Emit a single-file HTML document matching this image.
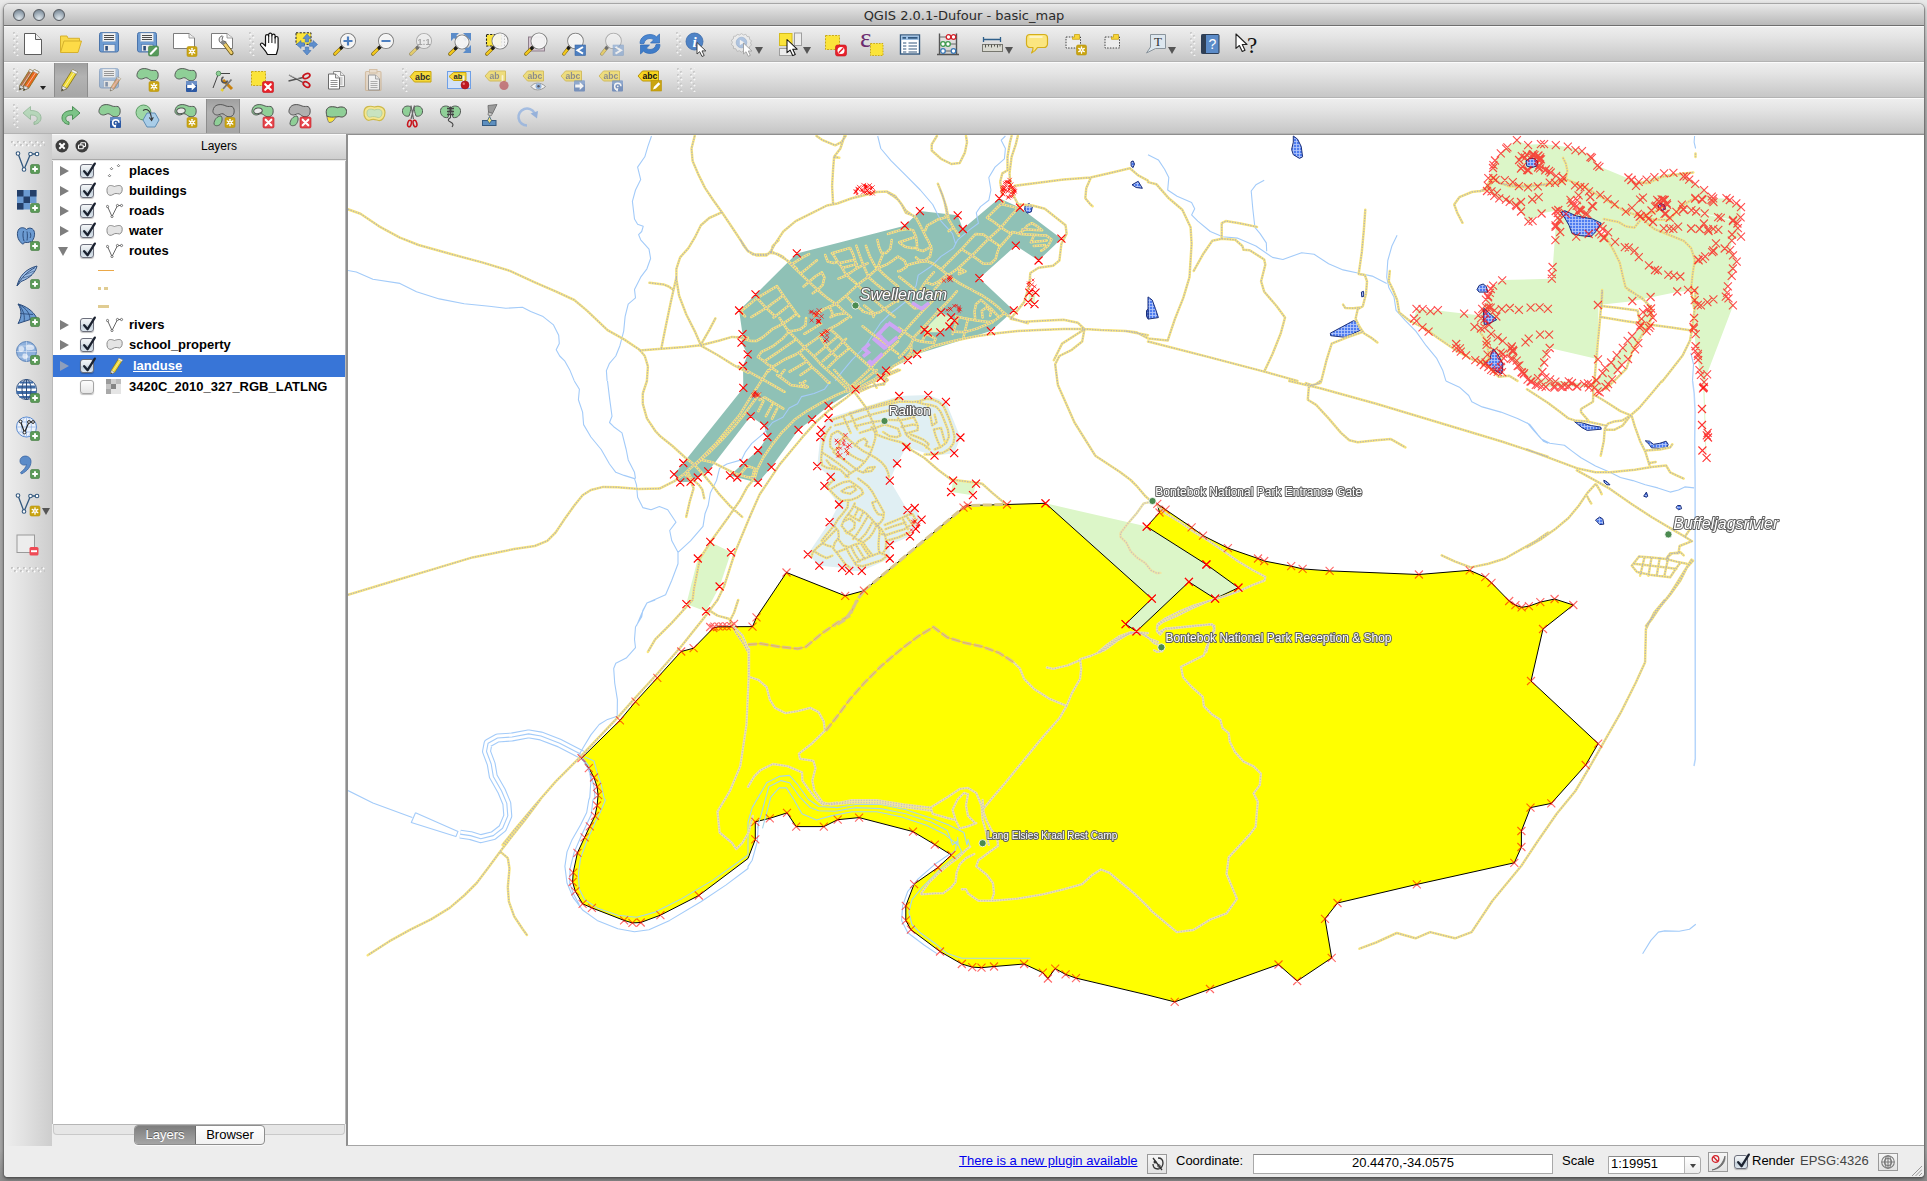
<!DOCTYPE html><html><head><meta charset="utf-8"><title>QGIS 2.0.1-Dufour - basic_map</title><style>
html,body{margin:0;padding:0}
body{width:1927px;height:1181px;overflow:hidden;position:relative;
 background:linear-gradient(#e9e9e9 0,#e2e2e2 14px,#bdbdbd 60px,#ababab 140px,#a9a9a9 1150px,#8c8c8c 1181px);
 font-family:"Liberation Sans",sans-serif;font-size:13px;color:#000}
#win{position:absolute;left:4px;top:4px;width:1920px;height:1173px;background:#ededed;
 border-radius:5px 5px 4px 4px;box-shadow:0 0 0 1px rgba(100,100,100,.38),0 1px 2px 0 rgba(30,30,30,.6),0 2px 4px 1px rgba(40,40,40,.35);overflow:hidden}
#title{position:absolute;left:0;top:0;width:1920px;height:21px;border-bottom:1px solid #6f6f6f;
 background:linear-gradient(#ebebeb 0,#e2e2e2 3px,#cfcfcf 11px,#b9b9b9 21px);text-align:center;
 font-family:"DejaVu Sans","Liberation Sans",sans-serif;font-size:13px;line-height:23px;color:#2b2b2b}
.tl{position:absolute;top:5px;width:12px;height:12px;border-radius:50%;box-sizing:border-box;border:1px solid #55595f;
 background:radial-gradient(circle at 50% 85%,#dfe6ec 0,#b8c3cc 35%,#8796a3 75%,#6f7c88 100%)}
.tbrow{position:absolute;left:0;width:1920px;height:36px;box-sizing:border-box;border-top:1px solid #fbfbfb;border-bottom:1px solid #b3b3b3;
 background:linear-gradient(#eeeeee 0,#e4e4e4 30%,#d3d3d3 70%,#c6c6c6 100%)}
.grip{position:absolute;width:6px;height:24px;top:5px;
 background-image:radial-gradient(circle at 1.5px 1.5px,#fff 0,#fff .6px,rgba(255,255,255,0) 1.3px),radial-gradient(circle at 1.5px 1.5px,#fff 0,#fff .6px,rgba(255,255,255,0) 1.3px),radial-gradient(circle at 1px 1px,#c6c6c6 0,#c6c6c6 .8px,rgba(198,198,198,0) 1.3px),radial-gradient(circle at 1px 1px,#c6c6c6 0,#c6c6c6 .8px,rgba(198,198,198,0) 1.3px);
 background-size:6px 6px;background-position:0 1px,3px 4px,0 0,3px 3px;opacity:.8}
.ic{position:absolute;width:24px;height:24px}
.ic svg{display:block;overflow:visible}
.pressed{position:absolute;top:0;height:34px;background:linear-gradient(#9f9f9f 0,#b3b3b3 40%,#a6a6a6 100%);box-shadow:inset 1px 0 0 #8d8d8d,inset -1px 0 0 #8d8d8d}
.dd{position:absolute;width:0;height:0;border-left:4px solid transparent;border-right:4px solid transparent;border-top:7px solid #555}
#ltb{position:absolute;left:0;top:130px;width:48px;height:1012px;background:linear-gradient(90deg,#eeeeee 0,#e2e2e2 40%,#cdcdcd 100%)}
.hgrip{position:absolute;left:7px;width:34px;height:6px;
 background-image:radial-gradient(circle at 1.5px 1.5px,#fff 0,#fff .6px,rgba(255,255,255,0) 1.3px),radial-gradient(circle at 1.5px 1.5px,#fff 0,#fff .6px,rgba(255,255,255,0) 1.3px),radial-gradient(circle at 1px 1px,#c4c4c4 0,#c4c4c4 .9px,rgba(188,188,188,0) 1.4px),radial-gradient(circle at 1px 1px,#c4c4c4 0,#c4c4c4 .9px,rgba(188,188,188,0) 1.4px);
 background-size:6px 6px;background-position:1px 0,4px 3px,0 0,3px 3px}
#lp{position:absolute;left:48px;top:130px;width:294px;height:1012px;background:#ededed}
#lph{position:absolute;left:0;top:0;width:294px;height:26px;box-sizing:border-box;border-top:1px solid #fafafa;border-bottom:1px solid #a9a9a9;
 background:linear-gradient(#eeeeee 0,#dedede 50%,#cecece 100%);text-align:center;line-height:23px;font-size:12px;padding-left:40px}
#tree{position:absolute;left:0px;top:27px;width:294px;height:963px;background:#fff;border-left:1px solid #b9b9b9;border-right:1px solid #b9b9b9;box-sizing:border-box}
.row{position:absolute;left:0;width:292px;height:20px;line-height:20px;font-weight:bold;font-size:13px;white-space:nowrap}
.row .t{position:absolute;left:76px;top:0}
.arr{position:absolute;left:7px;top:5px;width:0;height:0;border-top:5px solid transparent;border-bottom:5px solid transparent;border-left:9px solid #7e7e7e}
.arrd{position:absolute;left:5px;top:6px;width:0;height:0;border-left:5px solid transparent;border-right:5px solid transparent;border-top:9px solid #7e7e7e}
.cb{position:absolute;left:27px;top:3px;width:14px;height:14px;box-sizing:border-box;border:1px solid #6c6f7c;border-radius:3px;
 background:linear-gradient(#f4f6f8 0,#dfe5ea 45%,#c3cfd9 55%,#dde6ee 100%);box-shadow:0 1px 1px rgba(0,0,0,.25)}
.cb.off{background:linear-gradient(#fdfdfd 0,#f1f1f1 50%,#e6e6e6 100%);border-color:#a4a4a4}
.cb svg{position:absolute;left:0px;top:-4px;overflow:visible}
.li{position:absolute;left:53px;top:2px;width:18px;height:16px}
#tabs{position:absolute;left:0;top:990px;width:294px;height:27px}
#tabline{position:absolute;left:1px;top:0;width:292px;height:11px;border:1px solid #c9c9c9;border-top:1px solid #b5b5b5;border-radius:0 0 4px 4px;box-sizing:border-box;background:#e6e6e6}
#tabbox{position:absolute;left:82px;top:1px;width:131px;height:20px;box-sizing:border-box;border:1px solid #8e8e8e;border-radius:4px;background:linear-gradient(#ffffff,#f1f1f1);overflow:hidden;font-size:13px;line-height:18px;box-shadow:0 1px 0 rgba(255,255,255,.7)}
#tabbox .a{position:absolute;left:0;top:0;width:60px;height:18px;background:linear-gradient(#7d7d7d 0,#969696 60%,#a5a5a5 100%);color:#fff;text-align:center;border-right:1px solid #6d6d6d;text-shadow:0 -1px 0 rgba(0,0,0,.35)}
#tabbox .b{position:absolute;left:61px;top:0;width:68px;height:18px;text-align:center;color:#000}
#mapwrap{position:absolute;left:342px;top:130px;width:1578px;height:1012px;background:#fff;border-left:2px solid #8f8f8f;border-top:1px solid #8f8f8f;border-bottom:1px solid #a5a5a5;box-sizing:border-box;overflow:hidden}
#mapwrap svg{position:absolute;left:-348px;top:-135px}
#status{position:absolute;left:0;top:1142px;width:1920px;height:31px;background:#ededed;font-size:13px}
#status .s{position:absolute;top:0;line-height:30px;white-space:nowrap}
.fld{position:absolute;box-sizing:border-box;background:#fff;border:1px solid #a9a9a9;border-top-color:#8a8a8a;text-align:center;line-height:17px;font-size:13px}
.sbtn{position:absolute;box-sizing:border-box;border:1px solid #9a9a9a;background:linear-gradient(#f6f6f6,#e2e2e2)}
</style></head><body>
<div id="win">
<div id="title">QGIS 2.0.1-Dufour - basic_map<div class="tl" style="left:9px"></div><div class="tl" style="left:29px"></div><div class="tl" style="left:49px"></div></div>
<div class="tbrow" style="top:22px">
<div class="grip" style="left:9px"></div>
<div class="grip" style="left:245px"></div>
<div class="grip" style="left:672px"></div>
<div class="grip" style="left:1186px"></div>
<div class="ic" style="left:17px;top:5px;width:24px;height:24px"><svg width="24" height="24" viewBox="0 0 24 24"><path d="M3.500 1.500H14.500L20.500 7.500V22.500H3.500Z" fill="#fff" stroke="#5d5d5d" stroke-width="1" stroke-linejoin="round"/><path d="M14.500 1.500V7.500H20.500" fill="#ededed" stroke="#5d5d5d" stroke-width="1" stroke-linejoin="round"/></svg></div>
<div class="ic" style="left:54px;top:5px;width:24px;height:24px"><svg width="24" height="24" viewBox="0 0 24 24"><path d="M2.500 20V4h6.500l1 2.300h11.500v3" fill="#f9d94a" stroke="#d6b12d" stroke-width="1" stroke-linejoin="round"/><path d="M2.500 20.500L6 9h17.500L20 20.500Z" fill="#fddb47" stroke="#d6b12d" stroke-width="1" stroke-linejoin="round"/></svg></div>
<div class="ic" style="left:93px;top:5px;width:24px;height:24px"><svg width="24" height="24" viewBox="0 0 24 24"><g transform="translate(0 -2)"><rect x="2.500" y="2.500" width="19" height="19.500" rx="2" fill="#6d9bd1" stroke="#4a74ab" stroke-width="1"/><rect x="5.500" y="3" width="13" height="8.500" fill="#f2f2f2" stroke="#9fb3cc" stroke-width=".5"/><path d="M7 5.500h10M7 7.500h10M7 9.500h10" stroke="#4c4c4c" stroke-width="1"/><rect x="6.500" y="14.500" width="11.500" height="7" fill="#ececec" stroke="#4a74ab" stroke-width=".6"/><rect x="8.300" y="16" width="2.600" height="4.500" fill="#2d4d7c"/></g></svg></div>
<div class="ic" style="left:131px;top:5px;width:24px;height:24px"><svg width="24" height="24" viewBox="0 0 24 24"><g transform="translate(0 -2)"><rect x="2.500" y="2.500" width="19" height="19.500" rx="2" fill="#6d9bd1" stroke="#4a74ab" stroke-width="1"/><rect x="5.500" y="3" width="13" height="8.500" fill="#f2f2f2" stroke="#9fb3cc" stroke-width=".5"/><path d="M7 5.500h10M7 7.500h10M7 9.500h10" stroke="#4c4c4c" stroke-width="1"/><rect x="6.500" y="14.500" width="11.500" height="7" fill="#ececec" stroke="#4a74ab" stroke-width=".6"/><rect x="8.300" y="16" width="2.600" height="4.500" fill="#2d4d7c"/></g><rect x="13.500" y="14" width="10" height="10" rx="1.500" fill="#579a5b" stroke="#3f7f44" stroke-width=".6"/><path d="M15.800 21.700L21.200 16.300" stroke="#fff" stroke-width="2.200" stroke-linecap="round"/></svg></div>
<div class="ic" style="left:168px;top:5px;width:24px;height:24px"><svg width="24" height="24" viewBox="0 0 24 24"><path d="M1.500 1.500H17L22.500 6V16.500H1.500Z" fill="#fff" stroke="#7c7c7c" stroke-width="1" stroke-linejoin="round"/><path d="M17 1.500V6H22.500" fill="#eee" stroke="#8c8c8c" stroke-width=".8"/><rect x="15" y="14.5" width="10" height="10" rx="1.5" fill="#c9a411" stroke="#b8930a" stroke-width=".6"/><g stroke="#fff" stroke-width="1.3" stroke-linecap="round"><path d="M20.00 16.30L20.00 22.70"/><path d="M17.23 17.90L22.77 21.10"/><path d="M22.77 17.90L17.23 21.10"/></g><circle cx="20" cy="19.5" r="1.700" fill="#fff"/><circle cx="20" cy="19.5" r=".8" fill="#c9a411"/></svg></div>
<div class="ic" style="left:206px;top:5px;width:24px;height:24px"><svg width="24" height="24" viewBox="0 0 24 24"><path d="M1.500 1.500H17L22.500 6V16.500H1.500Z" fill="#fff" stroke="#7c7c7c" stroke-width="1" stroke-linejoin="round"/><path d="M17 1.500V6H22.500" fill="#eee" stroke="#8c8c8c" stroke-width=".8"/><path d="M14 11L21.500 21" stroke="#6b5a20" stroke-width="4.200" stroke-linecap="round"/><path d="M14.300 11.400L21.300 20.700" stroke="#f0cf6a" stroke-width="2.600" stroke-linecap="round"/><path d="M12.200 3.800a4 4 0 1 0 4 6.400l-2.400-.6l-1.700-2.300l.8-2.800z" fill="#f2f2f2" stroke="#5a5a5a" stroke-width=".9"/><path d="M11.500 9l2.800 3.200" stroke="#888" stroke-width="3"/></svg></div>
<div class="ic" style="left:254px;top:5px;width:24px;height:24px"><svg width="24" height="24" viewBox="0 0 24 24"><path d="M7.500 13V4.300a1.600 1.600 0 0 1 3.200 0V2.700a1.600 1.600 0 0 1 3.200 0V3.700a1.600 1.600 0 0 1 3.200 0V6a1.500 1.500 0 0 1 3 0V15c0 3-1.200 4.500-1.800 7.500H9.500C8 19 5 16.500 2.800 13.500c-1.200-1.800.8-3.200 2.200-1.900L7.500 14Z" fill="#fff" stroke="#111" stroke-width="1.200" stroke-linejoin="round"/><path d="M10.700 4.300V11M13.900 3.500V11M17.100 5V11.500" stroke="#111" stroke-width="1"/></svg></div>
<div class="ic" style="left:291px;top:5px;width:24px;height:24px"><svg width="24" height="24" viewBox="0 0 24 24"><rect x="1" y=".8" width="15" height="11.500" fill="#fbe43a" stroke="#222" stroke-width="1" stroke-dasharray="2.200 1.400"/><g fill="#5e8fcd" stroke="#3f6fb0" stroke-width=".6"><path d="M12 2l4 4.500h-2.300v3.500h-3.400V6.500H8Z"/><path d="M12 23l4-4.500h-2.300V15h-3.400v3.500H8Z"/><path d="M1.500 12.500L6 8.500v2.300h3.500v3.400H6v2.300Z"/><path d="M22.500 12.500L18 8.500v2.300h-3.500v3.400H18v2.300Z"/></g></svg></div>
<div class="ic" style="left:329px;top:5px;width:24px;height:24px"><svg width="24" height="24" viewBox="0 0 24 24"><g opacity="1"><path d="M8.6 15.4L1.800 22" stroke="#7a6410" stroke-width="3.300" stroke-linecap="round"/><path d="M8.6 15.4L2 21.800" stroke="#f3c81d" stroke-width="2.300" stroke-linecap="round"/><path d="M10.2 13.8L8 16" stroke="#1a1a1a" stroke-width="3.200" stroke-linecap="round"/><circle cx="15" cy="9" r="7.5" fill="#f4f4f4" fill-opacity=".92" stroke="#858585" stroke-width="1.100"/><circle cx="15" cy="9" r="6.5" fill="none" stroke="#fff" stroke-width=".8" opacity=".8"/><path d="M10.500 9h9M15 4.500v9" stroke="#4d7fc0" stroke-width="2.200"/></g></svg></div>
<div class="ic" style="left:367px;top:5px;width:24px;height:24px"><svg width="24" height="24" viewBox="0 0 24 24"><g opacity="1"><path d="M8.6 15.4L1.800 22" stroke="#7a6410" stroke-width="3.300" stroke-linecap="round"/><path d="M8.6 15.4L2 21.800" stroke="#f3c81d" stroke-width="2.300" stroke-linecap="round"/><path d="M10.2 13.8L8 16" stroke="#1a1a1a" stroke-width="3.200" stroke-linecap="round"/><circle cx="15" cy="9" r="7.5" fill="#f4f4f4" fill-opacity=".92" stroke="#858585" stroke-width="1.100"/><circle cx="15" cy="9" r="6.5" fill="none" stroke="#fff" stroke-width=".8" opacity=".8"/><path d="M10.500 9h9" stroke="#4d7fc0" stroke-width="2.200"/></g></svg></div>
<div class="ic" style="left:405px;top:5px;width:24px;height:24px"><svg width="24" height="24" viewBox="0 0 24 24"><g opacity="0.55"><path d="M8.6 15.4L1.800 22" stroke="#7a6410" stroke-width="3.300" stroke-linecap="round"/><path d="M8.6 15.4L2 21.800" stroke="#f3c81d" stroke-width="2.300" stroke-linecap="round"/><path d="M10.2 13.8L8 16" stroke="#1a1a1a" stroke-width="3.200" stroke-linecap="round"/><circle cx="15" cy="9" r="7.5" fill="#f4f4f4" fill-opacity=".92" stroke="#858585" stroke-width="1.100"/><circle cx="15" cy="9" r="6.5" fill="none" stroke="#fff" stroke-width=".8" opacity=".8"/><text x="15" y="12.500" text-anchor="middle" font-family="Liberation Sans,sans-serif" font-weight="bold" font-size="9" fill="#777">1:1</text></g></svg></div>
<div class="ic" style="left:444px;top:5px;width:24px;height:24px"><svg width="24" height="24" viewBox="0 0 24 24"><g fill="#5b8cc9"><path d="M3 1h8L8.300 3.700l3 3L9 9 6 6 3 9Z"/><path d="M23 1v8l-2.700-2.700-3 3L15 7l3-3-3-3Z"/><path d="M23 21h-8l2.700-2.700-3-3L17 13l3 3 3-3Z"/></g><g opacity="1"><path d="M7.96 16.04L1.800 22" stroke="#7a6410" stroke-width="3.300" stroke-linecap="round"/><path d="M7.96 16.04L2 21.800" stroke="#f3c81d" stroke-width="2.300" stroke-linecap="round"/><path d="M9.56 14.44L7.36 16.64" stroke="#1a1a1a" stroke-width="3.200" stroke-linecap="round"/><circle cx="14" cy="10" r="7" fill="#f4f4f4" fill-opacity=".92" stroke="#858585" stroke-width="1.100"/><circle cx="14" cy="10" r="6" fill="none" stroke="#fff" stroke-width=".8" opacity=".8"/></g></svg></div>
<div class="ic" style="left:481px;top:5px;width:24px;height:24px"><svg width="24" height="24" viewBox="0 0 24 24"><rect x="1.500" y="2.500" width="15" height="11.500" fill="#fbe43a" stroke="#222" stroke-width="1.100" stroke-dasharray="2.200 1.400"/><g opacity="1"><path d="M8.24 15.76L1.800 22" stroke="#7a6410" stroke-width="3.300" stroke-linecap="round"/><path d="M8.24 15.76L2 21.800" stroke="#f3c81d" stroke-width="2.300" stroke-linecap="round"/><path d="M9.84 14.16L7.64 16.36" stroke="#1a1a1a" stroke-width="3.200" stroke-linecap="round"/><circle cx="15" cy="9" r="8" fill="#f4f4f4" fill-opacity=".92" stroke="#858585" stroke-width="1.100"/><circle cx="15" cy="9" r="7" fill="none" stroke="#fff" stroke-width=".8" opacity=".8"/></g><path d="M19.500 3.500v11" stroke="#bbb" stroke-width=".8" stroke-dasharray="1.500 1.500"/></svg></div>
<div class="ic" style="left:520px;top:5px;width:24px;height:24px"><svg width="24" height="24" viewBox="0 0 24 24"><rect x="4.500" y="5" width="16" height="14" fill="#d8c8d4" stroke="#8d7f8b" stroke-width="1"/><g opacity="1"><path d="M8.24 15.76L1.800 22" stroke="#7a6410" stroke-width="3.300" stroke-linecap="round"/><path d="M8.24 15.76L2 21.800" stroke="#f3c81d" stroke-width="2.300" stroke-linecap="round"/><path d="M9.84 14.16L7.64 16.36" stroke="#1a1a1a" stroke-width="3.200" stroke-linecap="round"/><circle cx="15" cy="9" r="8" fill="#f4f4f4" fill-opacity=".92" stroke="#858585" stroke-width="1.100"/><circle cx="15" cy="9" r="7" fill="none" stroke="#fff" stroke-width=".8" opacity=".8"/></g></svg></div>
<div class="ic" style="left:558px;top:5px;width:24px;height:24px"><svg width="24" height="24" viewBox="0 0 24 24"><g opacity="1"><path d="M6.884 15.616L1.800 22" stroke="#7a6410" stroke-width="3.300" stroke-linecap="round"/><path d="M6.884 15.616L2 21.800" stroke="#f3c81d" stroke-width="2.300" stroke-linecap="round"/><path d="M8.484 14.016L6.284 16.216" stroke="#1a1a1a" stroke-width="3.200" stroke-linecap="round"/><circle cx="13.5" cy="9" r="7.8" fill="#f4f4f4" fill-opacity=".92" stroke="#858585" stroke-width="1.100"/><circle cx="13.5" cy="9" r="6.8" fill="none" stroke="#fff" stroke-width=".8" opacity=".8"/></g><rect x="13" y="13" width="10.500" height="10.500" fill="#4d7fc0" stroke="#3a66a3" stroke-width=".6"/><path d="M21 15l-5.500 3.300L21 21.600" fill="none" stroke="#fff" stroke-width="2"/></svg></div>
<div class="ic" style="left:596px;top:5px;width:24px;height:24px"><svg width="24" height="24" viewBox="0 0 24 24"><g opacity="0.55"><path d="M6.884 15.616L1.800 22" stroke="#7a6410" stroke-width="3.300" stroke-linecap="round"/><path d="M6.884 15.616L2 21.800" stroke="#f3c81d" stroke-width="2.300" stroke-linecap="round"/><path d="M8.484 14.016L6.284 16.216" stroke="#1a1a1a" stroke-width="3.200" stroke-linecap="round"/><circle cx="13.5" cy="9" r="7.8" fill="#f4f4f4" fill-opacity=".92" stroke="#858585" stroke-width="1.100"/><circle cx="13.5" cy="9" r="6.8" fill="none" stroke="#fff" stroke-width=".8" opacity=".8"/></g><g opacity=".6"><rect x="13" y="13" width="10.500" height="10.500" fill="#7fa3d3" stroke="#6a8fc0" stroke-width=".6"/><path d="M15.500 15l5.500 3.300-5.500 3.300" fill="none" stroke="#fff" stroke-width="2"/></g></svg></div>
<div class="ic" style="left:634px;top:5px;width:24px;height:24px"><svg width="24" height="24" viewBox="0 0 24 24"><path d="M2 11.500C2 5.500 7 2.500 12 2.500c3 0 5 1 6.500 2.300L21.500 2v9h-9l3.200-3.200C14.700 7 13.500 6.500 12 6.500c-3 0-5.500 1.800-6 5Z" fill="#4a86d0" stroke="#2e68b4" stroke-width=".7" stroke-linejoin="round"/><path d="M22 12.500c0 6-5 9-10 9-3 0-5-1-6.500-2.300L2.500 22v-9h9l-3.200 3.200c1 .8 2.200 1.300 3.700 1.300 3 0 5.500-1.800 6-5Z" fill="#3f7cc8" stroke="#2e68b4" stroke-width=".7" stroke-linejoin="round"/></svg></div>
<div class="ic" style="left:681px;top:5px;width:24px;height:24px"><svg width="24" height="24" viewBox="0 0 24 24"><circle cx="9.500" cy="9.500" r="8.500" fill="#4f83c6" stroke="#3a69a8" stroke-width=".8"/><text x="9.500" y="15" text-anchor="middle" font-family="Liberation Serif,serif" font-style="italic" font-weight="bold" font-size="15" fill="#fff">i</text><path transform="translate(12 10.5) scale(1)" d="M0 0V11.500L2.700 9.200L5 14L7.200 13L5 8.400H8.800Z" fill="#fff" stroke="#333" stroke-width=".9" stroke-linejoin="round"/></svg></div>
<div class="ic" style="left:726px;top:5px;width:24px;height:24px"><svg width="24" height="24" viewBox="0 0 24 24"><g opacity=".6"><path d="M10 .8l2 1.400 2.300-.7 1.200 2.200 2.400.3.100 2.500 2 1.400-1 2.200 1 2.300-2 1.300-.2 2.500-2.400.2-1.200 2.200-2.300-.7-2 1.400-1.900-1.400-2.400.7L4.400 16 2 15.700l-.1-2.500-2-1.400 1-2.200-1-2.300 2-1.300.2-2.500 2.400-.2L5.700 1.500 8 2.200Z" transform="translate(1.500 .8)" fill="#f1f1f1" stroke="#9a9a9a" stroke-width=".8"/><circle cx="11.500" cy="10.500" r="5.300" fill="#8fb2e0" stroke="#6f93c4" stroke-width=".7"/><path d="M9.800 7.700l4.700 2.800-4.700 2.800Z" fill="#fff"/></g><path transform="translate(13.5 11) scale(0.95)" d="M0 0V11.500L2.700 9.200L5 14L7.200 13L5 8.400H8.800Z" fill="#fff" stroke="#9a9a9a" stroke-width=".9" stroke-linejoin="round"/></svg></div>
<div class="ic" style="left:774px;top:5px;width:24px;height:24px"><svg width="24" height="24" viewBox="0 0 24 24"><rect x="1.500" y="1.500" width="12.500" height="12" fill="#fbe43a" stroke="#d6bd1e" stroke-width="1"/><rect x="16.500" y="1" width="7" height="12.500" fill="#ededed" stroke="#9e9e9e" stroke-width="1"/><rect x="1.500" y="16.500" width="12.500" height="7" fill="#ededed" stroke="#9e9e9e" stroke-width="1"/><path transform="translate(9 7.5) scale(1.15)" d="M0 0V11.500L2.700 9.200L5 14L7.200 13L5 8.400H8.800Z" fill="#fff" stroke="#111" stroke-width=".9" stroke-linejoin="round"/></svg></div>
<div class="ic" style="left:820px;top:5px;width:24px;height:24px"><svg width="24" height="24" viewBox="0 0 24 24"><rect x="1.500" y="3.500" width="14" height="14" fill="#fbe43a" stroke="#c9a915" stroke-width="1" stroke-dasharray="2 1.200"/><rect x="11.500" y="13" width="11" height="11" rx="2" fill="#e8202a" stroke="#c2161d" stroke-width=".6"/><circle cx="17" cy="18.500" r="3.500" fill="#fff"/><path d="M14.800 20.700l4.400-4.400" stroke="#e8202a" stroke-width="1.600"/></svg></div>
<div class="ic" style="left:857px;top:5px;width:24px;height:24px"><svg width="24" height="24" viewBox="0 0 24 24"><text x="-1" y="15" font-family="Liberation Serif,serif" font-size="27" fill="#6b2b6f">ε</text><rect x="9.500" y="11.500" width="12.500" height="12" fill="#fbe43a" stroke="#c9a915" stroke-width="1" stroke-dasharray="1.600 1.200"/></svg></div>
<div class="ic" style="left:894px;top:5px;width:24px;height:24px"><svg width="24" height="24" viewBox="0 0 24 24"><rect x="2.500" y="3" width="19" height="19" fill="#fff" stroke="#34597f" stroke-width="1.400"/><rect x="3.200" y="3.700" width="17.600" height="4.300" fill="#9dc0e4"/><path d="M4.500 5.800h3.500M10 5.800h9.500" stroke="#34597f" stroke-width="1.700"/><path d="M5 11h3.300M10.500 11h8.500M5 14h3.300M10.500 14h8.500M5 17h3.300M10.500 17h8.500M5 20h3.300M10.500 20h8.500" stroke="#34597f" stroke-width="1.200"/></svg></div>
<div class="ic" style="left:932px;top:5px;width:24px;height:24px"><svg width="24" height="24" viewBox="0 0 24 24"><path d="M3.500 1.500v21M20.500 1.500v21M1 22.500h22" stroke="#555" stroke-width="1.400"/><path d="M3.500 5h17M3.500 12h17M3.500 19h17" stroke="#666" stroke-width="1"/><g stroke-width="1.300" fill="#fff"><circle cx="12.500" cy="5" r="2.300" stroke="#d3222a"/><circle cx="17.500" cy="5" r="2.300" stroke="#d3222a"/><circle cx="7" cy="12" r="2.300" stroke="#3d9a4c"/><circle cx="12" cy="12" r="2.300" stroke="#3d9a4c"/><circle cx="7" cy="19" r="2.300" stroke="#3b79b8"/><circle cx="17.500" cy="19" r="2.300" stroke="#3b79b8"/></g></svg></div>
<div class="ic" style="left:977px;top:5px;width:24px;height:24px"><svg width="24" height="24" viewBox="0 0 24 24"><path d="M2.500 5v5M19.500 5v5M2.500 7.500h17" stroke="#2f5f8a" stroke-width="1.300"/><rect x="1.500" y="12.500" width="20" height="7" fill="#d9d9d0" stroke="#77776f" stroke-width="1"/><path d="M4.500 12.500v3M7.500 12.500v2M10.500 12.500v3M13.500 12.500v2M16.500 12.500v3M19 12.500v2" stroke="#55554f" stroke-width="1"/></svg></div>
<div class="ic" style="left:1021px;top:5px;width:24px;height:24px"><svg width="24" height="24" viewBox="0 0 24 24"><path d="M5 2.500h14a3.500 3.500 0 0 1 3.500 3.500v6a3.500 3.500 0 0 1-3.500 3.500h-6.500c-1.500 2.500-3 4.300-6 5.500 1.200-1.800 1.600-3.500 1.500-5.500H5a3.500 3.500 0 0 1-3.500-3.500v-6A3.500 3.500 0 0 1 5 2.500Z" fill="#fbe680" stroke="#d4ae1b" stroke-width="1.200" stroke-linejoin="round"/><path d="M5 5h12" stroke="#fff" stroke-width="1.500" stroke-linecap="round" opacity=".7"/></svg></div>
<div class="ic" style="left:1060px;top:5px;width:24px;height:24px"><svg width="24" height="24" viewBox="0 0 24 24"><rect x="2" y="5" width="14.500" height="11" fill="#ececec" stroke="#444" stroke-width="1" stroke-dasharray="1.500 1.300"/><path d="M10.500 2.500h5v4.800h-7V5.200h2Z" fill="#f7d53a" stroke="#c9a415" stroke-width=".8"/><rect x="12.5" y="13" width="10" height="10" rx="1.5" fill="#c9a411" stroke="#b8930a" stroke-width=".6"/><g stroke="#fff" stroke-width="1.3" stroke-linecap="round"><path d="M17.50 14.80L17.50 21.20"/><path d="M14.73 16.40L20.27 19.60"/><path d="M20.27 16.40L14.73 19.60"/></g><circle cx="17.5" cy="18" r="1.700" fill="#fff"/><circle cx="17.5" cy="18" r=".8" fill="#c9a411"/></svg></div>
<div class="ic" style="left:1096px;top:5px;width:24px;height:24px"><svg width="24" height="24" viewBox="0 0 24 24"><g transform="translate(3 0)"><rect x="2" y="5" width="14.500" height="11" fill="#ececec" stroke="#444" stroke-width="1" stroke-dasharray="1.500 1.300"/><path d="M10.500 2.500h5v4.800h-7V5.200h2Z" fill="#f7d53a" stroke="#c9a415" stroke-width=".8"/></g></svg></div>
<div class="ic" style="left:1141px;top:5px;width:24px;height:24px"><svg width="24" height="24" viewBox="0 0 24 24"><path d="M5.500 2.500h15v14h-10L1.500 21l4-6Z" fill="#dde7ef" stroke="#8a949c" stroke-width="1" stroke-linejoin="round"/><text x="13" y="14" text-anchor="middle" font-family="Liberation Serif,serif" font-size="13" fill="#333">T</text></svg></div>
<div class="ic" style="left:1194px;top:5px;width:24px;height:24px"><svg width="24" height="24" viewBox="0 0 24 24"><rect x="3.500" y="2.500" width="17.500" height="19" rx="1" fill="#5b8bc8" stroke="#2c3d55" stroke-width="1"/><rect x="3.500" y="2.500" width="4.500" height="19" fill="#2f3f55"/><text x="14.500" y="17" text-anchor="middle" font-family="Liberation Sans,sans-serif" font-size="14" fill="#fff">?</text></svg></div>
<div class="ic" style="left:1231px;top:5px;width:24px;height:24px"><svg width="24" height="24" viewBox="0 0 24 24"><path transform="translate(1 2) scale(1.25)" d="M0 0V11.500L2.700 9.200L5 14L7.200 13L5 8.400H8.800Z" fill="#fff" stroke="#222" stroke-width=".9" stroke-linejoin="round"/><text x="17" y="21" text-anchor="middle" font-family="Liberation Serif,serif" font-size="23" fill="#111">?</text></svg></div>
<div class="dd" style="left:751px;top:20px"></div>
<div class="dd" style="left:799px;top:20px"></div>
<div class="dd" style="left:1001px;top:20px"></div>
<div class="dd" style="left:1164px;top:20px"></div>
</div>
<div class="tbrow" style="top:58px">
<div class="grip" style="left:9px"></div>
<div class="pressed" style="left:50px;width:34px"></div>
<div class="grip" style="left:398px"></div>
<div class="grip" style="left:673px"></div>
<div class="grip" style="left:686px"></div>
<div class="ic" style="left:15px;top:5px;width:24px;height:24px"><svg width="24" height="24" viewBox="0 0 24 24"><g opacity="1" transform="translate(-3 0) scale(0.95)"><path d="M14.500 1.500L19.500 4L9 20.500L3.500 23L4.300 17.800Z" fill="#b8734f" stroke="#7d6a10" stroke-width=".8" stroke-linejoin="round"/><path d="M4.300 17.800L9 20.500L3.500 23Z" fill="#ddd" stroke="#666" stroke-width=".6"/><path d="M3.500 23L4.100 20.800L5.600 22Z" fill="#333"/><path d="M14.500 1.500L19.500 4L18.300 5.900L13.300 3.400Z" fill="#f4f4f4" stroke="#999" stroke-width=".6"/><path d="M15.900 4.800L6.500 19" stroke="#fff" stroke-width="1" opacity=".55"/></g><g opacity="1" transform="translate(1 0) scale(0.98)"><path d="M14.500 1.500L19.500 4L9 20.500L3.500 23L4.300 17.800Z" fill="#e8651d" stroke="#7d6a10" stroke-width=".8" stroke-linejoin="round"/><path d="M4.300 17.800L9 20.500L3.500 23Z" fill="#e4e4e4" stroke="#666" stroke-width=".6"/><path d="M3.500 23L4.100 20.800L5.600 22Z" fill="#333"/><path d="M14.500 1.500L19.500 4L18.300 5.900L13.300 3.400Z" fill="#f4f4f4" stroke="#999" stroke-width=".6"/><path d="M15.900 4.800L6.500 19" stroke="#fff" stroke-width="1" opacity=".55"/></g></svg></div>
<div class="ic" style="left:54px;top:5px;width:24px;height:24px"><svg width="24" height="24" viewBox="0 0 24 24"><g opacity="1" transform="translate(0 0) scale(1)"><path d="M14.500 1.500L19.500 4L9 20.500L3.500 23L4.300 17.800Z" fill="#f0dc3a" stroke="#7d6a10" stroke-width=".8" stroke-linejoin="round"/><path d="M4.300 17.800L9 20.500L3.500 23Z" fill="#e9e9e9" stroke="#666" stroke-width=".6"/><path d="M3.500 23L4.100 20.800L5.600 22Z" fill="#333"/><path d="M14.500 1.500L19.500 4L18.300 5.900L13.300 3.400Z" fill="#f4f4f4" stroke="#999" stroke-width=".6"/><path d="M15.900 4.800L6.500 19" stroke="#fff" stroke-width="1" opacity=".55"/></g></svg></div>
<div class="ic" style="left:93px;top:5px;width:24px;height:24px"><svg width="24" height="24" viewBox="0 0 24 24"><g opacity=".5"><g transform="translate(0 -2)"><rect x="2.500" y="2.500" width="19" height="19.500" rx="2" fill="#6d9bd1" stroke="#4a74ab" stroke-width="1"/><rect x="5.500" y="3" width="13" height="8.500" fill="#f2f2f2" stroke="#9fb3cc" stroke-width=".5"/><path d="M7 5.500h10M7 7.500h10M7 9.500h10" stroke="#4c4c4c" stroke-width="1"/><rect x="6.500" y="14.500" width="11.500" height="7" fill="#ececec" stroke="#4a74ab" stroke-width=".6"/><rect x="8.300" y="16" width="2.600" height="4.500" fill="#2d4d7c"/></g></g><g opacity="0.75" transform="translate(11 8) scale(0.65)"><path d="M14.500 1.500L19.500 4L9 20.500L3.500 23L4.300 17.800Z" fill="#e89a6a" stroke="#7d6a10" stroke-width=".8" stroke-linejoin="round"/><path d="M4.300 17.800L9 20.500L3.500 23Z" fill="#ddd" stroke="#666" stroke-width=".6"/><path d="M3.500 23L4.100 20.800L5.600 22Z" fill="#333"/><path d="M14.500 1.500L19.500 4L18.300 5.900L13.300 3.400Z" fill="#f4f4f4" stroke="#999" stroke-width=".6"/><path d="M15.900 4.800L6.500 19" stroke="#fff" stroke-width="1" opacity=".55"/></g></svg></div>
<div class="ic" style="left:131px;top:5px;width:24px;height:24px"><svg width="24" height="24" viewBox="0 0 24 24"><path d="M2 6.500C2.500 3.500 4 1.500 7 .8C10 .2 12.500 .8 15 2C17.500 3 19.500 2 21 2.600C23 3.500 23.500 6 23 9C22.500 11.500 20.500 12.800 18 12.800C15 12.800 14 10.500 12 9.800C10 9.200 8.500 11 6.500 11C3.500 11 1.500 9 2 6.500Z" fill="#8fcf97" stroke="#555b57" stroke-width="1" /><rect x="14" y="13.5" width="10" height="10" rx="1.5" fill="#c9a411" stroke="#b8930a" stroke-width=".6"/><g stroke="#fff" stroke-width="1.3" stroke-linecap="round"><path d="M19.00 15.30L19.00 21.70"/><path d="M16.23 16.90L21.77 20.10"/><path d="M21.77 16.90L16.23 20.10"/></g><circle cx="19" cy="18.5" r="1.700" fill="#fff"/><circle cx="19" cy="18.5" r=".8" fill="#c9a411"/></svg></div>
<div class="ic" style="left:169px;top:5px;width:24px;height:24px"><svg width="24" height="24" viewBox="0 0 24 24"><path d="M2 6.500C2.500 3.500 4 1.500 7 .8C10 .2 12.500 .8 15 2C17.500 3 19.500 2 21 2.600C23 3.500 23.500 6 23 9C22.500 11.500 20.500 12.800 18 12.800C15 12.800 14 10.500 12 9.800C10 9.200 8.500 11 6.500 11C3.500 11 1.500 9 2 6.500Z" fill="#8fcf97" stroke="#555b57" stroke-width="1" /><g opacity="1"><rect x="13" y="13" width="11" height="11" rx="1" fill="#2d59a3"/><rect x="13" y="13" width="11" height="4" rx="1" fill="#86a6d6" opacity=".7"/><path d="M14.2 17h4.500v-2.600l4.300 4.100l-4.300 4.100v-2.600h-4.500z" fill="#fff"/></g></svg></div>
<div class="ic" style="left:207px;top:5px;width:24px;height:24px"><svg width="24" height="24" viewBox="0 0 24 24"><path d="M2 20L7.500 5.500H19" fill="none" stroke="#444" stroke-width="1"/><circle cx="7.500" cy="5.500" r="2.300" fill="#8fcf97" stroke="#4d8a55" stroke-width=".8"/><path d="M12 12L21 21" stroke="#c9820f" stroke-width="3"/><path d="M20.500 11.500L12 21" stroke="#777" stroke-width="1.800"/><path d="M12 21l-1.500 2" stroke="#e7d12a" stroke-width="2.600"/><path d="M12.500 9a3 3 0 1 0 4 3.500" fill="none" stroke="#555" stroke-width="1.600"/></svg></div>
<div class="ic" style="left:246px;top:5px;width:24px;height:24px"><svg width="24" height="24" viewBox="0 0 24 24"><rect x="1.500" y="3.500" width="14" height="14" fill="#fbe43a" stroke="#c9a915" stroke-width="1" stroke-dasharray="2 1.200"/><rect x="12.5" y="13.5" width="11" height="11" rx="1.5" fill="#e8232b" stroke="#c2161d" stroke-width=".6"/><path d="M15.2 16.2l5.600 5.600m0 -5.600l-5.600 5.600" stroke="#fff" stroke-width="2.100" stroke-linecap="round"/></svg></div>
<div class="ic" style="left:283px;top:5px;width:24px;height:24px"><svg width="24" height="24" viewBox="0 0 24 24"><path d="M2 7L16 14.500M1.500 13L16 9.500" stroke="#555" stroke-width="1.300"/><path d="M2 7L13 11.500" stroke="#ccc" stroke-width=".6"/><ellipse cx="19.500" cy="8" rx="3.600" ry="2.300" transform="rotate(-25 19.500 8)" fill="none" stroke="#c8141c" stroke-width="1.700"/><ellipse cx="19.500" cy="16.500" rx="3.600" ry="2.300" transform="rotate(35 19.500 16.500)" fill="none" stroke="#c8141c" stroke-width="1.700"/></svg></div>
<div class="ic" style="left:320px;top:5px;width:24px;height:24px"><svg width="24" height="24" viewBox="0 0 24 24"><g opacity="0.7" transform="translate(9 3)"><path d="M.5 .5H7.500L11.500 4.500V15.500H.5Z" fill="#fff" stroke="#6a6a6a" stroke-width="1" stroke-linejoin="round"/><path d="M7.500 .5V4.500H11.500" fill="#e8e8e8" stroke="#6a6a6a" stroke-width=".8"/><path d="M2.500 7h7M2.500 9h7M2.500 11h7M2.500 13h7" stroke="#777" stroke-width=".8"/></g><g opacity="1" transform="translate(4 5.5)"><path d="M.5 .5H7.500L11.500 4.500V15.500H.5Z" fill="#fff" stroke="#6a6a6a" stroke-width="1" stroke-linejoin="round"/><path d="M7.500 .5V4.500H11.500" fill="#e8e8e8" stroke="#6a6a6a" stroke-width=".8"/><path d="M2.500 7h7M2.500 9h7M2.500 11h7M2.500 13h7" stroke="#777" stroke-width=".8"/></g></svg></div>
<div class="ic" style="left:358px;top:5px;width:24px;height:24px"><svg width="24" height="24" viewBox="0 0 24 24"><g opacity=".6"><rect x="3.500" y="3.500" width="15.500" height="19" rx="1" fill="#ead6bd" stroke="#c9a77d" stroke-width="1.200"/><rect x="7.500" y="1.500" width="7.500" height="3.500" fill="#ead6bd" stroke="#c9a77d" stroke-width="1"/><g opacity="1" transform="translate(6 6.5)"><path d="M.5 .5H7.500L11.500 4.500V15.500H.5Z" fill="#fff" stroke="#6a6a6a" stroke-width="1" stroke-linejoin="round"/><path d="M7.500 .5V4.500H11.500" fill="#e8e8e8" stroke="#6a6a6a" stroke-width=".8"/><path d="M2.500 7h7M2.500 9h7M2.500 11h7M2.500 13h7" stroke="#777" stroke-width=".8"/></g></g></svg></div>
<div class="ic" style="left:405px;top:5px;width:24px;height:24px"><svg width="24" height="24" viewBox="0 0 24 24"><g opacity="1"><path d="M1 8.75L5.5 3.5H22V14H5.5Z" fill="#f5d93a" stroke="#c9a50e" stroke-width="1" stroke-linejoin="round"/><text x="6" y="12" font-family="Liberation Sans,sans-serif" font-weight="bold" font-size="8.8" fill="#2b2b2b">abc</text></g></svg></div>
<div class="ic" style="left:443px;top:5px;width:24px;height:24px"><svg width="24" height="24" viewBox="0 0 24 24"><rect x=".5" y="3.500" width="23" height="17" fill="#d4e2f6" stroke="#6fa0e6" stroke-width="1"/><g opacity="1"><path d="M2 8.5L6.5 4.5H19V12.5H6.5Z" fill="#f5d93a" stroke="#c9a50e" stroke-width="1" stroke-linejoin="round"/><text x="6.5" y="10.5" font-family="Liberation Sans,sans-serif" font-weight="bold" font-size="7.5" fill="#2b2b2b">ab</text></g><path d="M16.500 8.500v6" stroke="#eee" stroke-width="1.800" stroke-linecap="round"/><circle cx="18" cy="17" r="4" fill="#c0181f" stroke="#8f1116" stroke-width=".5"/><circle cx="16.800" cy="15.800" r="1.200" fill="#e8777b"/></svg></div>
<div class="ic" style="left:481px;top:5px;width:24px;height:24px"><svg width="24" height="24" viewBox="0 0 24 24"><g opacity="0.6"><path d="M0 8L4.5 3H20.5V13H4.5Z" fill="#f5d93a" stroke="#c9a50e" stroke-width="1" stroke-linejoin="round"/><text x="4.5" y="11" font-family="Liberation Sans,sans-serif" font-weight="bold" font-size="8.6" fill="#555">ab</text></g><g opacity=".65"><path d="M17.500 8v6" stroke="#fff" stroke-width="1.800" stroke-linecap="round"/><circle cx="19" cy="17.500" r="4.600" fill="#b84a50"/></g></svg></div>
<div class="ic" style="left:519px;top:5px;width:24px;height:24px"><svg width="24" height="24" viewBox="0 0 24 24"><g opacity="0.6"><path d="M0 8L4.5 3H20.5V13H4.5Z" fill="#f5d93a" stroke="#c9a50e" stroke-width="1" stroke-linejoin="round"/><text x="4.5" y="11" font-family="Liberation Sans,sans-serif" font-weight="bold" font-size="8.6" fill="#555">abc</text></g><g opacity=".7"><path d="M8 18.500c3-4.500 10-4.500 14.500 0c-4.500 4.500-11.500 4.500-14.500 0Z" fill="#fff" stroke="#666" stroke-width=".8"/><circle cx="15.500" cy="18.200" r="3" fill="#7ba7de"/><circle cx="15.500" cy="18.200" r="1.200" fill="#223"/></g></svg></div>
<div class="ic" style="left:557px;top:5px;width:24px;height:24px"><svg width="24" height="24" viewBox="0 0 24 24"><g opacity="0.6"><path d="M0 8L4.5 3H20.5V13H4.5Z" fill="#f5d93a" stroke="#c9a50e" stroke-width="1" stroke-linejoin="round"/><text x="4.5" y="11" font-family="Liberation Sans,sans-serif" font-weight="bold" font-size="8.6" fill="#555">abc</text></g><g opacity="0.75"><rect x="13" y="12.5" width="11" height="11" rx="1" fill="#5b7db5"/><rect x="13" y="12.5" width="11" height="4" rx="1" fill="#86a6d6" opacity=".7"/><path d="M14.2 16.5h4.500v-2.600l4.300 4.100l-4.300 4.100v-2.600h-4.500z" fill="#fff"/></g></svg></div>
<div class="ic" style="left:595px;top:5px;width:24px;height:24px"><svg width="24" height="24" viewBox="0 0 24 24"><g opacity="0.6"><path d="M0 8L4.5 3H20.5V13H4.5Z" fill="#f5d93a" stroke="#c9a50e" stroke-width="1" stroke-linejoin="round"/><text x="4.5" y="11" font-family="Liberation Sans,sans-serif" font-weight="bold" font-size="8.6" fill="#555">abc</text></g><g opacity="0.75"><rect x="13" y="12.5" width="11" height="11" rx="1" fill="#5b7db5"/><rect x="13" y="12.5" width="11" height="4" rx="1" fill="#86a6d6" opacity=".6"/><path d="M22 18.3a3.200 3.200 0 1 0 -3.200 3.400" fill="none" stroke="#fff" stroke-width="1.500"/><path d="M19.4 19.9l-3.200 1.300l2.200 2.600z" fill="#fff"/><circle cx="18.8" cy="18.3" r=".9" fill="#fff"/></g></svg></div>
<div class="ic" style="left:634px;top:5px;width:24px;height:24px"><svg width="24" height="24" viewBox="0 0 24 24"><g opacity="1"><path d="M0 8L4.5 3H20.5V13H4.5Z" fill="#f7d51e" stroke="#b8930a" stroke-width="1" stroke-linejoin="round"/><text x="4.5" y="11" font-family="Liberation Sans,sans-serif" font-weight="bold" font-size="8.6" fill="#111">abc</text></g><rect x="13" y="12.500" width="10.500" height="10.500" fill="#c9a411" stroke="#b8930a" stroke-width=".6"/><path d="M15 21.500l1-2.800 4.500-4.500 1.800 1.800-4.500 4.500Z" fill="#fff"/></svg></div>
<div class="dd" style="left:36px;top:23px;border-left-width:3px;border-right-width:3px;border-top:4.500px solid #222"></div>
</div>
<div class="tbrow" style="top:94px">
<div class="grip" style="left:9px"></div>
<div class="pressed" style="left:202px;width:34px"></div>
<div class="ic" style="left:17px;top:5px;width:24px;height:24px"><svg width="24" height="24" viewBox="0 0 24 24"><g opacity=".5"><path d="M2 9L9.500 2.500V6.500c7 0 10.500 3 10.500 7.500 0 3.500-3 6-7 6.500v-2.500c2-.3 3.200-1.800 3.200-3.500 0-2.200-2.200-3.500-6.700-3.500V15.500Z" fill="#8fcf97" stroke="#5a9a63" stroke-width="1" stroke-linejoin="round"/></g></svg></div>
<div class="ic" style="left:54px;top:5px;width:24px;height:24px"><svg width="24" height="24" viewBox="0 0 24 24"><path d="M22 9L14.500 2.500V6.500c-7 0-10.500 3-10.500 7.500 0 3.500 3 6 7 6.500v-2.500c-2-.3-3.200-1.800-3.200-3.500 0-2.200 2.200-3.500 6.700-3.500V15.500Z" fill="#7cc487" stroke="#4d8f57" stroke-width="1" stroke-linejoin="round"/></svg></div>
<div class="ic" style="left:93px;top:5px;width:24px;height:24px"><svg width="24" height="24" viewBox="0 0 24 24"><path d="M2 6.500C2.500 3.500 4 1.500 7 .8C10 .2 12.500 .8 15 2C17.500 3 19.500 2 21 2.600C23 3.500 23.500 6 23 9C22.500 11.500 20.500 12.800 18 12.800C15 12.800 14 10.500 12 9.800C10 9.200 8.500 11 6.500 11C3.500 11 1.500 9 2 6.500Z" fill="#8fcf97" stroke="#555b57" stroke-width="1" /><g opacity="1"><rect x="13" y="13" width="11" height="11" rx="1" fill="#2d59a3"/><rect x="13" y="13" width="11" height="4" rx="1" fill="#86a6d6" opacity=".6"/><path d="M22 18.8a3.200 3.200 0 1 0 -3.200 3.400" fill="none" stroke="#fff" stroke-width="1.500"/><path d="M19.4 20.4l-3.200 1.300l2.200 2.600z" fill="#fff"/><circle cx="18.8" cy="18.8" r=".9" fill="#fff"/></g></svg></div>
<div class="ic" style="left:131px;top:5px;width:24px;height:24px"><svg width="24" height="24" viewBox="0 0 24 24"><circle cx="8.500" cy="8.500" r="7.500" fill="#9fd7a6" stroke="#5a9a63" stroke-width="1"/><path d="M12 9h8l4 7-4 7h-8l-4-7Z" fill="#a9cde8" stroke="#5f8db3" stroke-width="1"/><path d="M8 6.500c4-2.500 8 0 8.500 9" fill="none" stroke="#333" stroke-width="1.100"/><path d="M14.300 13.500l2.300 3 1.700-3.300" fill="none" stroke="#333" stroke-width="1.100"/></svg></div>
<div class="ic" style="left:169px;top:5px;width:24px;height:24px"><svg width="24" height="24" viewBox="0 0 24 24"><path d="M2 6.500C2.500 3.500 4 1.500 7 .8C10 .2 12.500 .8 15 2C17.500 3 19.500 2 21 2.600C23 3.500 23.500 6 23 9C22.500 11.500 20.500 12.800 18 12.800C15 12.800 14 10.500 12 9.800C10 9.200 8.500 11 6.500 11C3.500 11 1.500 9 2 6.500Z" fill="#8fcf97" stroke="#555b57" stroke-width="1" /><ellipse cx="8" cy="6.800" rx="4.300" ry="2.800" transform="rotate(-10 8 6.800)" fill="#e9e9e9" stroke="#555b57" stroke-width="1"/><rect x="14" y="13.5" width="10" height="10" rx="1.5" fill="#c9a411" stroke="#b8930a" stroke-width=".6"/><g stroke="#fff" stroke-width="1.3" stroke-linecap="round"><path d="M19.00 15.30L19.00 21.70"/><path d="M16.23 16.90L21.77 20.10"/><path d="M21.77 16.90L16.23 20.10"/></g><circle cx="19" cy="18.5" r="1.700" fill="#fff"/><circle cx="19" cy="18.5" r=".8" fill="#c9a411"/></svg></div>
<div class="ic" style="left:207px;top:5px;width:24px;height:24px"><svg width="24" height="24" viewBox="0 0 24 24"><path d="M2 6.500C2.500 3.500 4 1.500 7 .8C10 .2 12.500 .8 15 2C17.500 3 19.500 2 21 2.600C23 3.500 23.500 6 23 9C22.500 11.500 20.500 12.800 18 12.800C15 12.800 14 10.500 12 9.800C10 9.200 8.500 11 6.500 11C3.500 11 1.500 9 2 6.500Z" fill="#b0b0b0" stroke="#555" stroke-width="1" /><path d="M3 20c0-4 3-8 7-8 2 2 1 6-1 8.500-2 1.700-5.500 1.700-6-.5Z" fill="#8fcf97" stroke="#555b57" stroke-width="1"/><rect x="14" y="13.5" width="10" height="10" rx="1.5" fill="#c9a411" stroke="#b8930a" stroke-width=".6"/><g stroke="#fff" stroke-width="1.3" stroke-linecap="round"><path d="M19.00 15.30L19.00 21.70"/><path d="M16.23 16.90L21.77 20.10"/><path d="M21.77 16.90L16.23 20.10"/></g><circle cx="19" cy="18.5" r="1.700" fill="#fff"/><circle cx="19" cy="18.5" r=".8" fill="#c9a411"/></svg></div>
<div class="ic" style="left:246px;top:5px;width:24px;height:24px"><svg width="24" height="24" viewBox="0 0 24 24"><path d="M2 6.500C2.500 3.500 4 1.500 7 .8C10 .2 12.500 .8 15 2C17.500 3 19.500 2 21 2.600C23 3.500 23.500 6 23 9C22.500 11.500 20.500 12.800 18 12.800C15 12.800 14 10.500 12 9.800C10 9.200 8.500 11 6.500 11C3.500 11 1.500 9 2 6.500Z" fill="#8fcf97" stroke="#555b57" stroke-width="1" /><ellipse cx="8" cy="6.800" rx="4.300" ry="2.800" transform="rotate(-10 8 6.800)" fill="#e9e9e9" stroke="#555b57" stroke-width="1"/><rect x="13" y="13" width="11" height="11" rx="1.5" fill="#e5484f" stroke="#c2161d" stroke-width=".6"/><path d="M15.7 15.7l5.600 5.600m0 -5.600l-5.600 5.600" stroke="#fff" stroke-width="2.100" stroke-linecap="round"/></svg></div>
<div class="ic" style="left:283px;top:5px;width:24px;height:24px"><svg width="24" height="24" viewBox="0 0 24 24"><path d="M2 6.500C2.500 3.500 4 1.500 7 .8C10 .2 12.500 .8 15 2C17.500 3 19.500 2 21 2.600C23 3.500 23.500 6 23 9C22.500 11.500 20.500 12.800 18 12.800C15 12.800 14 10.500 12 9.800C10 9.200 8.500 11 6.500 11C3.500 11 1.500 9 2 6.500Z" fill="#b0b0b0" stroke="#555" stroke-width="1" /><path d="M3 20c0-4 3-8 7-8 2 2 1 6-1 8.500-2 1.700-5.500 1.700-6-.5Z" fill="#8fcf97" stroke="#555b57" stroke-width="1"/><rect x="13" y="13" width="11" height="11" rx="1.5" fill="#e5484f" stroke="#c2161d" stroke-width=".6"/><path d="M15.7 15.7l5.600 5.600m0 -5.600l-5.600 5.600" stroke="#fff" stroke-width="2.100" stroke-linecap="round"/></svg></div>
<div class="ic" style="left:320px;top:5px;width:24px;height:24px"><svg width="24" height="24" viewBox="0 0 24 24"><path d="M2.500 6C4 2 9 2.300 13.500 3.700 17.500 2.300 22.500 3 22.500 7.500c0 4-3 6-6 5.300-2-.5-3.500 0-5 .9-1.500 3-3.500 5-6.500 4.800C3.500 17 2 10 2.500 6Z" fill="#fbe43a" stroke="#777" stroke-width=".9"/><path d="M2.500 6C4 2 9 2.300 13.500 3.700 17.500 2.300 22.500 3 22.500 7.500c0 4-3 6-6 5.300-3.500-.9-7 1.500-13.500-.5C2.300 10 2 8 2.500 6Z" fill="#8fcf97" stroke="#555b57" stroke-width="1"/></svg></div>
<div class="ic" style="left:358px;top:5px;width:24px;height:24px"><svg width="24" height="24" viewBox="0 0 24 24"><path d="M2 8C2.500 2 8 1.500 12.500 3 17 1.500 23 3 23 8.500c0 5.500-3.500 8.500-6.500 8-2.500-.5-4.500-2-8.500-.5C4.500 17.500 1.500 13 2 8Z" fill="#f3e691" stroke="#cdb94a" stroke-width="1.200"/><path d="M5 8C5.500 5 8.500 4.500 12.500 6 16.500 4.500 20 5.500 20 9c0 3-2 5-4 4.500-2.500-.7-4.500-1.500-7.500-.5C6 13.800 4.700 11 5 8Z" fill="#c8e3c0" stroke="#a9c9a0" stroke-width=".8"/></svg></div>
<div class="ic" style="left:396px;top:5px;width:24px;height:24px"><svg width="24" height="24" viewBox="0 0 24 24"><path d="M11 3C8 1 3 2 2.500 6.500 2 11 6 13 9 12 10 9 11 6 11 3Z" fill="#8fcf97" stroke="#555b57" stroke-width="1"/><path d="M14 3c3-2 8-1 8.500 3.500C23 11 19 13 16 12 15 9 14 6 14 3Z" fill="#8fcf97" stroke="#555b57" stroke-width="1"/><path d="M11 1.500L13.500 15M14.500 1.500L11 15" stroke="#666" stroke-width="1.200"/><ellipse cx="9.500" cy="19.500" rx="1.800" ry="3.300" transform="rotate(15 9.500 19.500)" fill="none" stroke="#c8141c" stroke-width="1.500"/><ellipse cx="15" cy="19.500" rx="1.800" ry="3.300" transform="rotate(-15 15 19.500)" fill="none" stroke="#c8141c" stroke-width="1.500"/></svg></div>
<div class="ic" style="left:434px;top:5px;width:24px;height:24px"><svg width="24" height="24" viewBox="0 0 24 24"><path d="M11.500 3C8 1 3 2 2.500 6.500 2 11 6 14.500 10 13.500 11 10 11.500 6 11.500 3Z" fill="#8fcf97" stroke="#555b57" stroke-width="1"/><path d="M13.500 3c3.500-2 8.500-1 9 3.500.5 4.500-3.500 8-7.500 7C14 10 13.500 6 13.500 3Z" fill="#8fcf97" stroke="#555b57" stroke-width="1"/><path d="M9 4.500h7M9 7.500h7M9 10.500h7" stroke="#444" stroke-width="1.300"/><path d="M12.500 2.500v11c-3 2-3 3 0 4.500s3 3 1.500 5" fill="none" stroke="#444" stroke-width="1.100"/></svg></div>
<div class="ic" style="left:473px;top:5px;width:24px;height:24px"><svg width="24" height="24" viewBox="0 0 24 24"><path d="M11 1.500L20 .5 15.500 9.500 11.500 8Z" fill="#9b9b9b" stroke="#666" stroke-width=".8"/><path d="M11.500 8l4 1.500-1.500 2.500-3-1Z" fill="#c9c9c9" stroke="#666" stroke-width=".7"/><rect x="5.500" y="16.500" width="13.500" height="5" fill="#5d8fbf" stroke="#34597f" stroke-width="1"/><path d="M12.500 12.500l2 4-2 3-2-3Z" fill="#f5e47a" stroke="#34597f" stroke-width=".8"/></svg></div>
<div class="ic" style="left:511px;top:5px;width:24px;height:24px"><svg width="24" height="24" viewBox="0 0 24 24"><g opacity=".75"><path d="M12 21.500A8.500 8.500 0 1 1 19.500 9" fill="none" stroke="#8fb0e0" stroke-width="2.600"/><path d="M15.500 9.500l7.500-2.500-1 7.500Z" fill="#7fa3d9"/></g></svg></div>
</div>
<div id="ltb">
<div class="hgrip" style="top:7px"></div>
<div class="ic" style="left:11px;top:16px;width:24px;height:24px"><svg width="24" height="24" viewBox="0 0 24 24"><path d="M3 3.500L9 19.500L15.500 4H22" fill="none" stroke="#34597f" stroke-width="1.300"/><g fill="#fff" stroke="#34597f" stroke-width="1.100"><circle cx="3" cy="3.500" r="1.800"/><circle cx="9" cy="19.500" r="1.800"/><circle cx="15.500" cy="4" r="1.800"/><circle cx="22" cy="4" r="1.800"/></g><rect x="15.5" y="14.5" width="9" height="9" rx="1.5" fill="#5a9a57" stroke="#417a3f" stroke-width=".6"/><path d="M17.2 19h5.600m-2.800 -2.800v5.600" stroke="#fff" stroke-width="1.900"/></svg></div>
<div class="ic" style="left:11px;top:54px;width:24px;height:24px"><svg width="24" height="24" viewBox="0 0 24 24"><g><rect x="2" y="2" width="19.500" height="19.500" fill="#6c9bd2"/><g fill="#243f69"><rect x="2" y="2" width="6.500" height="6.500"/><rect x="15" y="2" width="6.500" height="6.500"/><rect x="8.500" y="8.500" width="6.500" height="6.500"/><rect x="2" y="15" width="6.500" height="6.500"/></g><rect x="15" y="15" width="6.500" height="6.500" fill="#dfdfdf"/></g><rect x="15.5" y="15.5" width="9" height="9" rx="1.5" fill="#5a9a57" stroke="#417a3f" stroke-width=".6"/><path d="M17.2 20h5.600m-2.800 -2.800v5.600" stroke="#fff" stroke-width="1.900"/></svg></div>
<div class="ic" style="left:11px;top:92px;width:24px;height:24px"><svg width="24" height="24" viewBox="0 0 24 24"><path d="M4 3C1.500 6 2 12 5 15.500c1 1.200 1.800 2.500 3 2.500 1 0 1-1 1.500-2 2 1 4.500.5 6-.500.500 2 2.500 2.500 4.500 1.500-1.500 0-2.500-1-2.500-2.500C20 11 20.500 5 17.500 3c-2-1.500-4.500-1-6 .5C9.500 1.500 6 1 4 3Z" fill="#6c9bd2" stroke="#2d4d7c" stroke-width="1"/><path d="M8.500 5c-1 3-.5 7 .5 10M12 5.500c.5 3 .5 6 0 9M15 6.500c1 1.500 1 4 0 5.500" fill="none" stroke="#2d4d7c" stroke-width="1"/><rect x="15.5" y="15.5" width="9" height="9" rx="1.5" fill="#5a9a57" stroke="#417a3f" stroke-width=".6"/><path d="M17.2 20h5.600m-2.800 -2.800v5.600" stroke="#fff" stroke-width="1.900"/></svg></div>
<div class="ic" style="left:11px;top:130px;width:24px;height:24px"><svg width="24" height="24" viewBox="0 0 24 24"><path d="M2 22C4 13 10 5 22 2c-1 5-6 12-16 15.500Z" fill="#9cbce4" stroke="#2d4d7c" stroke-width="1" stroke-linejoin="round"/><path d="M2 22C6 14 12 8 20 3.500" fill="none" stroke="#2d4d7c" stroke-width="1"/><path d="M8 14l9-3M11 10.500l8-3.500" stroke="#2d4d7c" stroke-width=".6"/><rect x="15.5" y="15.5" width="9" height="9" rx="1.5" fill="#5a9a57" stroke="#417a3f" stroke-width=".6"/><path d="M17.2 20h5.600m-2.800 -2.800v5.600" stroke="#fff" stroke-width="1.900"/></svg></div>
<div class="ic" style="left:11px;top:168px;width:24px;height:24px"><svg width="24" height="24" viewBox="0 0 24 24"><path d="M3 2C11 4 18 9 21.500 15.500L3 21.500C7 15 7 8 3 2Z" fill="#6c9bd2" stroke="#2d4d7c" stroke-width="1" stroke-linejoin="round"/><path d="M3 2C9 8 10 15 9 19.500M3 2C13 7 15 13 15 17.500M5 11.500l13 1" fill="none" stroke="#2d4d7c" stroke-width=".9"/><rect x="15.5" y="15.5" width="9" height="9" rx="1.5" fill="#5a9a57" stroke="#417a3f" stroke-width=".6"/><path d="M17.2 20h5.600m-2.800 -2.800v5.600" stroke="#fff" stroke-width="1.900"/></svg></div>
<div class="ic" style="left:11px;top:206px;width:24px;height:24px"><svg width="24" height="24" viewBox="0 0 24 24"><circle cx="11.500" cy="11.500" r="10" fill="#8fb1dd" stroke="#5b83b8" stroke-width="1"/><path d="M4 7c2-1 4-1 5 1s-1 4-3 4-3-2-2-5ZM12 5c3-1 6 0 7 2s-1 3-3 3-3 1-4 0-1-4 0-5ZM8 14c2-1 5 0 5 2s-2 4-4 3-2-4-1-5Z" fill="#e6eef8" opacity=".8"/><path d="M1.500 11.500h20M11.500 1.500v20M3.500 6h16M3.500 17h16" stroke="#fff" stroke-width=".6" opacity=".7"/><rect x="15.5" y="15.5" width="9" height="9" rx="1.5" fill="#5a9a57" stroke="#417a3f" stroke-width=".6"/><path d="M17.2 20h5.600m-2.800 -2.800v5.600" stroke="#fff" stroke-width="1.900"/></svg></div>
<div class="ic" style="left:11px;top:244px;width:24px;height:24px"><svg width="24" height="24" viewBox="0 0 24 24"><circle cx="11.500" cy="11.500" r="10" fill="#fff" stroke="#2d4d7c" stroke-width="1"/><path d="M2.500 7.500h18v3h-18ZM1.500 13h20v3h-20ZM5 3.500h13v2H5ZM4.500 18h14v2h-14Z" fill="#3f6ca8"/><ellipse cx="11.500" cy="11.500" rx="4.500" ry="10" fill="none" stroke="#2d4d7c" stroke-width="1"/><path d="M11.500 1.500v20" stroke="#2d4d7c" stroke-width="1"/><rect x="15.5" y="15.5" width="9" height="9" rx="1.5" fill="#5a9a57" stroke="#417a3f" stroke-width=".6"/><path d="M17.2 20h5.600m-2.800 -2.800v5.600" stroke="#fff" stroke-width="1.900"/></svg></div>
<div class="ic" style="left:11px;top:282px;width:24px;height:24px"><svg width="24" height="24" viewBox="0 0 24 24"><circle cx="11.500" cy="11" r="10" fill="#eef3fb" stroke="#5b8bd0" stroke-width="1"/><path d="M1.500 11h20M3.500 6h16M3.500 16h16M11.500 1v20" stroke="#8fb1e4" stroke-width=".7"/><ellipse cx="11.500" cy="11" rx="5" ry="10" fill="none" stroke="#8fb1e4" stroke-width=".7"/><path d="M5.500 5.500L9.500 16.500L14 6H18" fill="none" stroke="#222" stroke-width="1.200"/><g fill="#fff" stroke="#222" stroke-width="1"><circle cx="5.500" cy="5.500" r="1.400"/><circle cx="9.500" cy="16.500" r="1.400"/><circle cx="14" cy="6" r="1.400"/><circle cx="18" cy="6" r="1.400"/></g><rect x="15.5" y="15.5" width="9" height="9" rx="1.5" fill="#5a9a57" stroke="#417a3f" stroke-width=".6"/><path d="M17.2 20h5.600m-2.800 -2.800v5.600" stroke="#fff" stroke-width="1.900"/></svg></div>
<div class="ic" style="left:11px;top:320px;width:24px;height:24px"><svg width="24" height="24" viewBox="0 0 24 24"><path d="M8 2.500c4-1.500 8 1 8 5 0 5-3.500 9.500-9.500 12.500L5.500 18.500C9 16 11 13 11.500 10.500 8.500 12 5 10.500 5 7 5 4.800 6.200 3.200 8 2.500Z" fill="#5b8bc8" stroke="#3a66a3" stroke-width=".8"/><rect x="15.5" y="15.5" width="9" height="9" rx="1.5" fill="#5a9a57" stroke="#417a3f" stroke-width=".6"/><path d="M17.2 20h5.600m-2.800 -2.800v5.600" stroke="#fff" stroke-width="1.900"/></svg></div>
<div class="ic" style="left:11px;top:358px;width:24px;height:24px"><svg width="24" height="24" viewBox="0 0 24 24"><path d="M3 3.500L9 19.500L15.500 4H22" fill="none" stroke="#34597f" stroke-width="1.300"/><g fill="#fff" stroke="#34597f" stroke-width="1.100"><circle cx="3" cy="3.500" r="1.800"/><circle cx="9" cy="19.500" r="1.800"/><circle cx="15.500" cy="4" r="1.800"/><circle cx="22" cy="4" r="1.800"/></g><rect x="15" y="14" width="10" height="10" rx="1.5" fill="#c9a411" stroke="#b8930a" stroke-width=".6"/><g stroke="#fff" stroke-width="1.3" stroke-linecap="round"><path d="M20.00 15.80L20.00 22.20"/><path d="M17.23 17.40L22.77 20.60"/><path d="M22.77 17.40L17.23 20.60"/></g><circle cx="20" cy="19" r="1.700" fill="#fff"/><circle cx="20" cy="19" r=".8" fill="#c9a411"/></svg></div>
<div class="ic" style="left:11px;top:399px;width:24px;height:24px"><svg width="24" height="24" viewBox="0 0 24 24"><rect x="2" y="2" width="17.500" height="17.500" fill="#ededed" stroke="#9a9a9a" stroke-width="1"/><rect x="14.500" y="14" width="9" height="8.500" rx="1.500" fill="#ef4a55"/><path d="M16 18.200h6" stroke="#fff" stroke-width="2"/></svg></div>
<div class="dd" style="left:38px;top:374px"></div>
<div class="hgrip" style="top:433px"></div>
</div>
<div id="lp">
<div id="lph">Layers<div class="ic" style="left:2px;top:3px;width:16px;height:16px"><svg width="16" height="16" viewBox="0 0 16 16"><circle cx="8" cy="8" r="6.500" fill="#3d3d3d"/><path d="M5.300 5.300l5.400 5.400m0-5.400l-5.400 5.400" stroke="#fff" stroke-width="2"/></svg></div><div class="ic" style="left:22px;top:3px;width:16px;height:16px"><svg width="16" height="16" viewBox="0 0 16 16"><circle cx="8" cy="8" r="6.500" fill="#3d3d3d"/><rect x="6.800" y="4.800" width="4.700" height="3.800" rx=".8" fill="none" stroke="#fff" stroke-width="1.100"/><rect x="4.500" y="7" width="4.700" height="3.800" rx=".8" fill="#3d3d3d" stroke="#fff" stroke-width="1.100"/></svg></div></div>
<div id="tree">
<div class="row" style="top:0px;"><div class="arr"></div><div class="cb"><svg width="16" height="18" viewBox="0 0 16 18"><path d="M3.2 10.2 L6.6 14.2 L13.8 2.6" fill="none" stroke="#1b2230" stroke-width="2.3" stroke-linecap="round" stroke-linejoin="round"/></svg></div><div class="li"><svg width="18" height="16" viewBox="0 0 18 16"><g fill="#fff" stroke="#555" stroke-width=".8"><path d="M5.500 4.500l1.200 1.200-1.200 1.200-1.200-1.200Z"/><path d="M12.500 1.500l1.200 1.200-1.200 1.200-1.200-1.200Z"/><path d="M3.500 11.500l1.200 1.200-1.200 1.200-1.200-1.200Z"/></g></svg></div><span class="t">places</span></div>
<div class="row" style="top:20px;"><div class="arr"></div><div class="cb"><svg width="16" height="18" viewBox="0 0 16 18"><path d="M3.2 10.2 L6.6 14.2 L13.8 2.6" fill="none" stroke="#1b2230" stroke-width="2.3" stroke-linecap="round" stroke-linejoin="round"/></svg></div><div class="li"><svg width="18" height="16" viewBox="0 0 18 16"><path d="M1.500 4.500C3 1.500 6 2.500 8.500 3.500 11 2.500 15 1.500 16 4.500c.8 3-.5 6-2.500 6.500-2.500-.5-4.500-1-6.500.5C5 13 2.500 12.500 1.500 10.500.8 8.500.8 6 1.500 4.500Z" fill="#e4e4e4" stroke="#8a8a8a" stroke-width="1"/></svg></div><span class="t">buildings</span></div>
<div class="row" style="top:40px;"><div class="arr"></div><div class="cb"><svg width="16" height="18" viewBox="0 0 16 18"><path d="M3.2 10.2 L6.6 14.2 L13.8 2.6" fill="none" stroke="#1b2230" stroke-width="2.3" stroke-linecap="round" stroke-linejoin="round"/></svg></div><div class="li"><svg width="18" height="16" viewBox="0 0 18 16"><path d="M1.500 3.500L6 13.500L11.500 2.500H15.500" fill="none" stroke="#555" stroke-width=".9"/><g fill="#fff" stroke="#555" stroke-width=".8"><circle cx="1.500" cy="3.500" r="1.100"/><circle cx="6" cy="13.500" r="1.100"/><circle cx="11.500" cy="2.500" r="1.100"/><circle cx="15.500" cy="2.500" r="1.100"/></g></svg></div><span class="t">roads</span></div>
<div class="row" style="top:60px;"><div class="arr"></div><div class="cb"><svg width="16" height="18" viewBox="0 0 16 18"><path d="M3.2 10.2 L6.6 14.2 L13.8 2.6" fill="none" stroke="#1b2230" stroke-width="2.3" stroke-linecap="round" stroke-linejoin="round"/></svg></div><div class="li"><svg width="18" height="16" viewBox="0 0 18 16"><path d="M1.500 4.500C3 1.500 6 2.500 8.500 3.500 11 2.500 15 1.500 16 4.500c.8 3-.5 6-2.500 6.500-2.500-.5-4.500-1-6.500.5C5 13 2.500 12.500 1.500 10.500.8 8.500.8 6 1.500 4.500Z" fill="#e4e4e4" stroke="#8a8a8a" stroke-width="1"/></svg></div><span class="t">water</span></div>
<div class="row" style="top:80px;"><div class="arrd"></div><div class="cb"><svg width="16" height="18" viewBox="0 0 16 18"><path d="M3.2 10.2 L6.6 14.2 L13.8 2.6" fill="none" stroke="#1b2230" stroke-width="2.3" stroke-linecap="round" stroke-linejoin="round"/></svg></div><div class="li"><svg width="18" height="16" viewBox="0 0 18 16"><path d="M1.500 3.500L6 13.500L11.500 2.500H15.500" fill="none" stroke="#555" stroke-width=".9"/><g fill="#fff" stroke="#555" stroke-width=".8"><circle cx="1.500" cy="3.500" r="1.100"/><circle cx="6" cy="13.500" r="1.100"/><circle cx="11.500" cy="2.500" r="1.100"/><circle cx="15.500" cy="2.500" r="1.100"/></g></svg></div><span class="t">routes</span></div>
<div style="position:absolute;left:45px;top:109px;width:16px;height:1px;background:#eba848"></div>
<div style="position:absolute;left:45px;top:126px;width:3px;height:3px;background:#e0cc92"></div>
<div style="position:absolute;left:51px;top:126px;width:4px;height:3px;background:#e0cc92"></div>
<div style="position:absolute;left:45px;top:144px;width:11px;height:3px;background:#e0cc92"></div>
<div class="row" style="top:154px;"><div class="arr"></div><div class="cb"><svg width="16" height="18" viewBox="0 0 16 18"><path d="M3.2 10.2 L6.6 14.2 L13.8 2.6" fill="none" stroke="#1b2230" stroke-width="2.3" stroke-linecap="round" stroke-linejoin="round"/></svg></div><div class="li"><svg width="18" height="16" viewBox="0 0 18 16"><path d="M1.500 3.500L6 13.500L11.500 2.500H15.500" fill="none" stroke="#555" stroke-width=".9"/><g fill="#fff" stroke="#555" stroke-width=".8"><circle cx="1.500" cy="3.500" r="1.100"/><circle cx="6" cy="13.500" r="1.100"/><circle cx="11.500" cy="2.500" r="1.100"/><circle cx="15.500" cy="2.500" r="1.100"/></g></svg></div><span class="t">rivers</span></div>
<div class="row" style="top:174px;"><div class="arr"></div><div class="cb"><svg width="16" height="18" viewBox="0 0 16 18"><path d="M3.2 10.2 L6.6 14.2 L13.8 2.6" fill="none" stroke="#1b2230" stroke-width="2.3" stroke-linecap="round" stroke-linejoin="round"/></svg></div><div class="li"><svg width="18" height="16" viewBox="0 0 18 16"><path d="M1.500 4.500C3 1.500 6 2.500 8.500 3.500 11 2.500 15 1.500 16 4.500c.8 3-.5 6-2.500 6.500-2.500-.5-4.500-1-6.500.5C5 13 2.500 12.500 1.500 10.500.8 8.500.8 6 1.500 4.500Z" fill="#e4e4e4" stroke="#8a8a8a" stroke-width="1"/></svg></div><span class="t">school_property</span></div>
<div class="row" style="top:194px;height:22px;line-height:22px;background:#3875d7;color:#fff;"><div style="position:absolute;left:0;top:1px;width:292px;height:20px;line-height:20px"><div class="arr" style="border-left-color:#8f9fbc"></div><div class="cb"><svg width="16" height="18" viewBox="0 0 16 18"><path d="M3.2 10.2 L6.6 14.2 L13.8 2.6" fill="none" stroke="#1b2230" stroke-width="2.3" stroke-linecap="round" stroke-linejoin="round"/></svg></div><div class="li"><svg width="18" height="16" viewBox="0 0 18 16"><g transform="translate(2 -1) scale(.75)"><g opacity="1" transform="translate(0 0) scale(1)"><path d="M14.500 1.500L19.500 4L9 20.500L3.500 23L4.300 17.800Z" fill="#f0dc3a" stroke="#7d6a10" stroke-width=".8" stroke-linejoin="round"/><path d="M4.300 17.800L9 20.500L3.500 23Z" fill="#e9e9e9" stroke="#666" stroke-width=".6"/><path d="M3.500 23L4.100 20.800L5.600 22Z" fill="#333"/><path d="M14.500 1.500L19.500 4L18.300 5.900L13.300 3.400Z" fill="#f4f4f4" stroke="#999" stroke-width=".6"/><path d="M15.900 4.800L6.500 19" stroke="#fff" stroke-width="1" opacity=".55"/></g></g></svg></div><span class="t" style="left:80px;text-decoration:underline">landuse</span></div></div>
<div class="row" style="top:216px;"><div class="cb off"></div><div class="li"><svg width="18" height="16" viewBox="0 0 18 16"><rect x="0" y="0" width="15" height="15" fill="#e5e5e5"/><g fill="#9a9a9a"><rect x="0" y="0" width="5" height="5"/><rect x="10" y="0" width="5" height="5" fill="#bdbdbd"/><rect x="5" y="5" width="5" height="5" fill="#858585"/><rect x="0" y="10" width="5" height="5" fill="#a9a9a9"/><rect x="5" y="0" width="5" height="5" fill="#d0d0d0"/><rect x="0" y="5" width="5" height="5" fill="#c4c4c4"/></g></svg></div><span class="t">3420C_2010_327_RGB_LATLNG</span></div>
</div>
<div id="tabs"><div id="tabline"></div><div id="tabbox"><div class="a">Layers</div><div class="b">Browser</div></div></div>
</div>
<div id="mapwrap"><svg width="1927" height="1181" viewBox="0 0 1927 1181" font-family="Liberation Sans,sans-serif">
<defs><pattern id="wh" width="3" height="3" patternUnits="userSpaceOnUse"><rect width="3" height="3" fill="#4f7df0"/><path d="M0 .5H3M.5 0V3" stroke="#b9ccfb" stroke-width=".8"/></pattern><filter id="nf" x="0" y="0" width="100%" height="100%" filterUnits="userSpaceOnUse"><feOffset dx="0" dy="0"/></filter></defs>
<path d="M710.3 541.9L731 552.3L719.6 586.5L706.1 611.4L686.4 604.1L697.8 558.5Z" fill="#dcf6c8"/>
<path d="M953.1 480.6L976 483.7L972.9 495.2L951.1 492Z" fill="#dcf6c8"/>
<path d="M1045.5 503.3L1146.7 526.6L1206.4 564.5L1238.4 587.7L1215.1 598.7L1188.9 581.9L1136.5 631.4L1125.6 624.1L1151.8 598.7Z" fill="#dcf6c8"/>
<path d="M924.5 329.8L941.1 312.4L951.1 317.4L954.4 320.7L949.4 326.5L940.3 332.3L927.8 332.3Z" fill="#dcf6c8"/>
<path d="M1029.3 292.7L1035.5 292.7L1034.5 304.1L1028.2 302.1Z" fill="#dcf6c8"/>
<path d="M1488.7 178.2L1493.1 165.1L1500.4 153.5L1507.7 147.6L1516.4 140.4L1528 144.7L1541.2 144L1555.7 145.5L1567.4 146.9L1581.9 150.6L1592.1 157.8L1599.4 166.6L1631.4 179.7L1638.7 181.9L1654.7 176.8L1673.7 173.1L1686.8 176.8L1695.5 184L1704.2 189.9L1713 198.6L1726.1 198.6L1740.6 207.3L1740.6 217.5L1737.7 223.4L1740.6 236.5L1731.9 240.8L1730.4 249.6L1736.3 261.2L1731.9 275.8L1727.5 286L1726.1 296.2L1733.3 304.9L1706.9 374.2L1704.1 387.3L1699.4 370.5L1695.7 346.1L1693.8 327.4L1694 290.3L1676.9 291.9L1632 301.2L1598.4 305L1598.4 359.2L1549.7 348L1544.1 363L1538.5 378L1549.7 379.8L1568.4 381.7L1590.9 384.5L1596.5 379.8L1639.5 327.4L1643.3 312.5L1650.7 308.7L1652.6 318.1L1650.7 325.6L1605.8 387.3L1600.2 392L1594.6 387.3L1568.4 386.4L1546 387.3L1531 381.7L1521.6 372.3L1512.3 359.2L1502.9 353.6L1502 372.3L1493.6 370.5L1480.5 362L1456.1 348L1428.1 332.1L1414 318.1L1416.8 308.7L1437.4 310.6L1478.6 315.3L1482.3 308.7L1488.7 296.2L1493.1 286L1501.8 280.1L1551.3 278.7L1552.8 267L1555.7 226.3L1558.6 210.3L1541.2 213.2L1528 221.9L1516.4 205.9L1498.9 198.6L1487.3 191.3Z" fill="#dcf6c8"/>
<path d="M1703 381L1704.3 381L1706.3 452.6L1705.5 452.6Z" fill="#dcf6c8"/>
<path d="M1571 200.1L1579 195L1577.8 211.7L1573.2 205.9Z" fill="#fff"/>
<path d="M1600.9 226.3L1608.1 232.1L1603.8 237.9L1599.4 232.1Z" fill="#fff"/>
<path d="M1545.5 169.2L1563 177.1L1562.7 177.9L1545.2 170.1Z" fill="#fff"/>
<path d="M1683.8 208.5L1733.3 220.2L1733.3 220.9L1683.8 209.2Z" fill="#fff"/>
<path d="M1695.5 198.3L1713 201.2L1713 201.8L1695.5 198.9Z" fill="#fff"/>
<path d="M1698.4 259.5L1713 250.7L1713.4 251.5L1698.8 260.2Z" fill="#fff"/>
<path d="M1590.7 197.2L1592.8 205.9L1592.3 206L1590.1 197.3Z" fill="#fff"/>
<path d="M828.6 418L899.2 396L928.2 395.1L945.9 401.8L960.4 437.5L954.2 453.2L934.5 455.7L906.4 447L897.1 463.4L889.8 480.6L907.5 510.1L914.7 508L921.6 519.7L915.8 528.8L910 536.3L889.8 545L889.8 558.5L861.8 570.9L849.3 570.9L842.1 567.8L819.3 565.7L807.8 554.3L829.6 522.1L839 504.5L824.4 485.8L830.7 476.9L817.2 466.1L820.3 437L821.3 429.8Z" fill="#e0eff3"/>
<path d="M796.8 253.4L904.7 225.7L919.9 211.1L957.7 215.3L962.8 229L999.2 198.3L1020 207.6L1061.4 238.7L1038.6 260.5L1015.8 245.6L979.4 278.2L1013.7 310.4L990.9 331.1L917.2 354L907.8 360.2L886 370.6L880.8 377.8L855.6 389.3L828.6 405.9L812 419.4L798.5 429.8L771.5 467.1L758 482.7L737.3 477.5L730 475.4L743.5 463L758 450.5L767.4 437L764.2 425.6L750.7 416.3L708.2 471.3L697.8 477.5L690.6 481.7L680.2 482.3L674 474.4L683.3 463L743.3 387.9L743 366L747.7 354.4L741.5 342.7L742.5 334.1L739.1 310.5L755.5 294.4Z" fill="#8fc1b6"/>
<path d="M924.5 329.8L941.1 312.4L951.1 317.4L954.4 320.7L949.4 326.5L940.3 332.3L927.8 332.3Z" fill="#dcf6c8"/>
<path d="M589.8 759.4L580.5 754L559.7 743.2L541 736L528.6 733.9L512 737L497.5 738L488.1 743.2L486.5 751.5L491.2 764L493.3 776.4L501.6 791L506.8 803.4L507.8 815.9L502.6 828.3L493.3 835.6L480.8 838.7L470.5 835.6L460.1 834.1" fill="none" stroke="#a3cbf9" stroke-width="9" stroke-linejoin="round"/>
<path d="M589.8 759.4L580.5 754L559.7 743.2L541 736L528.6 733.9L512 737L497.5 738L488.1 743.2L486.5 751.5L491.2 764L493.3 776.4L501.6 791L506.8 803.4L507.8 815.9L502.6 828.3L493.3 835.6L480.8 838.7L470.5 835.6L460.1 834.1" fill="none" stroke="#fff" stroke-width="6.800" stroke-linejoin="round"/>
<path d="M589.8 759.4L580.5 754L559.7 743.2L541 736L528.6 733.9L512 737L497.5 738L488.1 743.2L486.5 751.5L491.2 764L493.3 776.4L501.6 791L506.8 803.4L507.8 815.9L502.6 828.3L493.3 835.6L480.8 838.7L470.5 835.6L460.1 834.1" fill="none" stroke="#a3cbf9" stroke-width="1.100" stroke-linejoin="round"/>
<path d="M786.5 572.5L845.2 595.8L863.9 590.7L963.5 507.6L967.7 505.5L1007 504.5L1045.5 503.3L1151.8 598.7L1125.6 624.1L1136.5 631.4L1188.9 581.9L1215.1 598.7L1238.4 587.7L1206.4 564.5L1146.7 526.6L1159.5 512.5L1157.3 503.9L1165.6 509.7L1191.6 527.3L1203 535.6L1227.9 548.1L1258 558.5L1264.2 561L1291.2 566.2L1302.6 568.9L1329.6 570.9L1418.9 574.5L1469.7 570.3L1485.3 577.2L1491.5 582.8L1509.2 601L1515.4 605.2L1521.6 607.3L1528.9 606.2L1540.3 602.1L1554.6 599L1573.3 605L1543 629L1531 681L1598.2 743.6L1585.7 765L1551.3 803.4L1530.5 807.6L1521.4 831L1521.4 847L1514.3 862.8L1416.8 884.4L1337.5 903L1325 918.8L1331.7 957.9L1297.2 981L1278.5 964.5L1210 989L1174.7 1001.9L1148 995.1L1076 978.1L1065.6 974.4L1055.2 968.6L1047.9 978.5L1042.8 972.7L1024.1 964L994 966.5L981.5 967.7L972.2 967.1L961.8 964L940 951.5L910.9 929.7L905.8 920.4L905.8 905.9L914.1 884.1L937.9 867.5L951.4 855L934.8 844.6L913 831.6L859.1 817.6L837.7 819.7L823.8 826.6L796.2 826.6L787 812.9L769.8 818.3L755.3 821.8L755.3 839.4L748 858.5L698.8 895.5L660.4 915.2L640.7 922.5L632.4 922.9L624.1 920.4L591.9 907.9L582.6 903.8L575.3 891.3L572.6 882L573.2 872.7L577.4 852.9L584.6 837.4L589.8 826.3L595 815.9L597.1 805.5L598.1 795.1L597.1 786.8L594 777.5L588.8 768.1L581.5 758.2L619.9 720.4L635.5 701.7L657.3 677.8L681.2 651.5L693.6 648.2L713.3 628L718 626.8L752.5 626.6L756.5 617.3Z" fill="#ffff00" stroke="#000" stroke-width="1" stroke-linejoin="round"/>
<path d="M651.5 136L647.9 146.4L644.8 156.8L637.6 167.1L640.7 179.6L635.5 190L632.4 201.4L634.5 219L637.6 224.2L643.2 226.3L641.7 231.5L638.6 234.6L640.7 239.8L649 249.1L650.6 258.5L646.9 268.8L640.7 277.2L634.5 289.6L635.5 297.9L628.2 304.1L625.1 316.6L623.7 331.1L619.9 345.7L615.8 356L609.5 363.3L606.4 370.6L607.1 380.9 M348 270.5L356.3 272L372.9 279.2L399.9 283.4L416.5 291.7L439.3 298.9L464.2 303.7L489.2 306.2L505.8 308.3L522.4 307.3L530.7 311.4L543.1 316.6L553.5 324.9L558.7 335.3L559.3 343.6L556.2 349.8L559.7 356L564.9 361.2L570.1 370.6L574.3 380.9 M1148 154.7L1158.4 159.9L1164.6 169.2L1168.8 177.5L1167.7 190L1177.1 196.2L1191.6 202.4L1194.7 208.7L1191.6 214.9L1197.8 221.1L1210.3 231.5L1222.7 236.7L1237.3 238.1L1255.9 246L1272.5 257.4L1282.9 259.5L1301.6 252.7L1314.1 254.3L1328.6 263.7L1343.1 269.9L1357.7 273L1372.2 276.1L1386.7 283.4 M1264.2 180.2L1255.9 184.8L1251.2 191L1252.8 208.7L1254.9 227.3L1260.1 233.6L1266.3 242.9L1266.7 251.2 M1397.1 235.2L1391.9 246L1387.8 260.5L1386.7 277.2L1388.8 287.5L1394 296.9L1396.1 310.4L1405.4 320.7L1415.8 331.1L1426.2 345.7L1436.5 358.1L1442.8 370.6L1445.9 380.9 M1445.9 381L1459.4 387.2L1468.7 395.5L1471.8 401.8L1482.2 406.9L1500.9 412.1L1517.5 418.4L1529.9 424.6L1538.2 435L1543.4 441.2L1548 443.3 M1527 422.5L1533.2 429.8L1541.5 439.1L1549.8 443.3L1564.4 445.3L1572.7 451.6L1581 457.8L1595.5 466.1L1610 472.3L1620.4 477.5L1632.9 480.6L1645.3 484.8L1657.8 487.9L1670.2 492.1L1678.5 490L1684.8 486.9L1694.1 487.9 M655.2 600L646.9 603.1L642.8 610.4L641.7 616.6L635.5 627L634.5 639.4L635.5 647.7L626.2 658.1L615.8 663.3L613.7 668.5L614.7 683L617.4 699.6L617.2 716.2L607.5 719.4L599.2 724.5L590.9 734.9L584.6 745.3L578.4 755.7 M582.6 757.8L588.8 766.1L590.9 780.6L589.8 797.2L588.8 800L586.7 812.5L580.5 824.9L572.2 839.4L567 851.9L564.9 866.4L567 883L573.2 897.6L582.6 910L597.1 920.4L617.8 928.7L634.5 931.8L649 929.7L669.7 920.4L700.9 901.7L725.8 885.1L748 868.5L748 866.4L752.2 860.2L757.3 841.5L758.4 822.8 M412.3 817.5L372.9 803L348 790.6 M582.1 758.8L586.7 766.1L591.3 776.4L594 786.8L595 797.2L592.9 800L591.3 814.5L581.5 835.3L574.3 851.9L570.1 868.5L569.7 883L573.2 893.4L579.4 904.8 M415.5 812.8L411.3 822.5L455.9 836.6L458 831.4L415.5 812.8 M951.4 852.9L934.8 864.3L918.2 878.9L907.8 891.3L902.6 905.9L901.6 920.4L907.8 932.8L924.4 945.3L936.9 953.6 M1642.6 953.7L1650.9 940.4L1658.4 932.1L1664.6 930.9L1679.2 931.3L1689.5 929.2L1695.8 924.2 M1694.6 136L1694.1 142.2L1695.6 148.5 M1690.8 352.9L1693.5 364.3L1692.5 380.9 M877.7 136L880.8 148.5L891.2 160.9L905.8 175.4L920.3 190L932.7 204.5L941 221.1L952.5 233.6L955.6 243.9 M1005.4 136L1001.2 140.2L1005.4 148.5L1004.4 158.8L995 167.1L988.8 177.5L990.9 190L988.8 200.3L980.5 206.6L976.3 212.8L978.4 223.2L970.1 229.4L957.7 239.8L953.5 248.1L941 256.4L930.7 266.8L918.2 275.1L916.1 285.5L907.8 300L897.5 308.3L889.2 314.5L880.8 322.8L872.5 335.3L864.2 347.7L851.8 360.2L841.4 372.6L835.2 380.9 M830.7 381L824.4 389.3L814.1 393.5L801.6 396.6L797.5 403.8L789.2 408L782.9 417.3L772.5 422.5L764.2 432.9L751.8 443.3L745.6 451.6L741.4 459.9L726.9 464L719.6 468.2L716.5 480.6L710.3 493.1L708.2 505.5L705 513.8L703 526.3L690.5 540.8L678 552.3L678 563.7L671.8 580.3L665.6 594.8L646.9 603.1L641.7 613.5L636.5 625.9 M574.3 381L579.4 389.3L578.4 399.7L582.6 412.1L583.6 424.6L590.9 437L601.2 449.5L609.5 464L615.8 472.3L624.1 475.4L634.5 478.6L636.5 484.8L637.6 497.2L642.8 507.6L651.1 509.7L659.4 506.6L667.7 509.7L676 522.2L669.7 530.5L671.8 540.8L678 552.3 M607.5 381L609.5 397.6L612 416.3L609.5 422.5L613.7 426.7L622 432.9L626.2 449.5L628.2 459.9L634.5 472.3L635.5 478.6" fill="none" stroke="#a3cbf9" stroke-width="1.100" stroke-linejoin="round"/>
<path d="M1692.6 381L1694.2 393.5L1695.1 412L1694.7 440L1695.1 480L1695.3 759L1694 766" fill="none" stroke="#b5d5fb" stroke-width="1.500"/>
<path d="M584.6 756.7L594 760.9L597.1 772.3L601.2 784.7L604.4 799.3L605.4 800L600.2 812.5L595 822.8L586.7 841.5L580.5 858.1L578.4 874.7L579.4 889.3L584.6 899.6L597.1 907.9L617.8 915.2L636.5 917.3L655.2 912.1L680.1 899.6L713.3 879.9L748 855L748 822.1L752.2 807.6L766.7 782.7L779.1 776.4L789.5 775.4L797.8 784.7L808.2 799.3L818.6 806.5L837.3 807.6L855.9 804.5L880.8 804.5L905.8 809.7L930.7 818L949.3 825.2L963.9 832.5L967 844.9L968 839.4L970.1 846.7 M757.3 828.3L768.8 786.8L781.2 780.6L789.5 782.7L799.9 797.2L810.3 807.6L818.6 810.7L835.2 811.3L855.9 807.6L880.8 808.6L905.8 813.8L930.7 822.1L947.3 830.4L952.5 844.9L956.6 841.5L955.6 849.8L951.4 854.4 M762.5 828.3L770.8 797.2L779.1 787.9L786.4 787.9L793.7 799.3L802 813.8L816.5 820L831 815.9L851.8 811.7L876.7 811.7L901.6 816.9L926.5 825.2L945.2 834.6L957.7 844.9L957.7 837.4L958.1 844.6L961.8 851.9L943.1 866.4L922.4 887.2L912 899.6L908.9 912.1L912 924.5L920.3 932.8L934.8 943.2L947.3 953.6L961.8 958.2L997.1 958.2L1030.3 958.2" fill="none" stroke="#a9d6e8" stroke-width="1.100" stroke-linejoin="round"/>
<path d="M1293.3 136L1297.5 139.1L1301.2 146.4L1302.6 156.8L1299.5 158.4L1293.3 154.7L1291.6 149.5L1293.3 142.2Z" fill="url(#wh)" stroke="#1b2f7a" stroke-width="1" stroke-linejoin="round"/>
<path d="M1148 296.9L1152.2 300L1155.3 308.3L1158.4 317.6L1148 319.1Z" fill="url(#wh)" stroke="#1b2f7a" stroke-width="1" stroke-linejoin="round"/>
<path d="M1477 289.6L1479.1 285.5L1483.2 284L1486.3 286.5L1487.8 292.1L1479.1 292.1Z" fill="url(#wh)" stroke="#1b2f7a" stroke-width="1" stroke-linejoin="round"/>
<path d="M1330.3 333.2L1353.5 320.7L1356.6 321.8L1360.8 330.1L1345.2 337.3L1330.7 335.7Z" fill="url(#wh)" stroke="#1b2f7a" stroke-width="1" stroke-linejoin="round"/>
<path d="M1483.9 308.3L1488.4 312.4L1496.7 319.7L1488.4 323.9L1484.3 324.5L1483.2 316.6Z" fill="url(#wh)" stroke="#1b2f7a" stroke-width="1" stroke-linejoin="round"/>
<path d="M1493.6 348.8L1498.8 356L1503 364.3L1501.9 373.7L1494.7 370.6L1482.2 363.3L1489.5 360.2L1491.5 352.9Z" fill="url(#wh)" stroke="#1b2f7a" stroke-width="1" stroke-linejoin="round"/>
<path d="M1560.7 212.4L1564.8 210.7L1576.2 215.9L1592.8 219L1601.2 223.2L1596 231.5L1590.8 236.7L1580.4 235.6L1572.1 233.6L1569 225.3L1564.8 218Z" fill="url(#wh)" stroke="#1b2f7a" stroke-width="1" stroke-linejoin="round"/>
<path d="M1526 160.9L1529.5 158.4L1534.7 158.4L1537.8 161.9L1536.8 166.1L1531.6 167.6L1526.8 166.1Z" fill="url(#wh)" stroke="#1b2f7a" stroke-width="1" stroke-linejoin="round"/>
<path d="M1658.2 205.5L1660.9 203.5L1664.5 204.9L1665.5 208.7L1662.4 210.7L1658.9 209.1Z" fill="url(#wh)" stroke="#1b2f7a" stroke-width="1" stroke-linejoin="round"/>
<path d="M1574.3 421.5L1581 422.5L1591.3 425.6L1600.7 427.1L1601.3 429.2L1587.2 430.4L1582 427.7Z" fill="url(#wh)" stroke="#1b2f7a" stroke-width="1" stroke-linejoin="round"/>
<path d="M1645.3 440.8L1649.5 441.2L1653.6 444.3L1659.8 443.3L1666.1 441.2L1668.2 444.3L1667.1 447.4L1659.8 448.5L1651.5 447.8L1649.1 444.3Z" fill="url(#wh)" stroke="#1b2f7a" stroke-width="1" stroke-linejoin="round"/>
<path d="M1603.8 480.2L1606.9 481.7L1610 484.8L1606.9 484.8L1604.2 482.3Z" fill="url(#wh)" stroke="#1b2f7a" stroke-width="1" stroke-linejoin="round"/>
<path d="M1643.7 496.2L1646.4 492.1L1647.8 496.2L1646.4 497.2Z" fill="url(#wh)" stroke="#1b2f7a" stroke-width="1" stroke-linejoin="round"/>
<path d="M1676 507.6L1677.5 505.5L1680.6 505.5L1681.6 508.7L1678.5 509.7Z" fill="url(#wh)" stroke="#1b2f7a" stroke-width="1" stroke-linejoin="round"/>
<path d="M1595.5 520.1L1599.7 517L1602.8 519L1603.8 524.2L1599.7 524.6Z" fill="url(#wh)" stroke="#1b2f7a" stroke-width="1" stroke-linejoin="round"/>
<path d="M1131 161.9L1133.1 160.9L1134.5 164L1133.1 167.6L1131.2 166.1Z" fill="url(#wh)" stroke="#1b2f7a" stroke-width="1" stroke-linejoin="round"/>
<path d="M1132 184.8L1138.2 181.3L1142.4 188.3L1136.2 187.5Z" fill="url(#wh)" stroke="#1b2f7a" stroke-width="1" stroke-linejoin="round"/>
<path d="M1025.1 205.5L1029.3 203.5L1032.4 206.6L1031.3 211.8L1027.2 213.2L1024.7 209.7Z" fill="url(#wh)" stroke="#1b2f7a" stroke-width="1" stroke-linejoin="round"/>
<path d="M1146.5 310.4L1148 309.3L1148 318.7L1146.5 316.6Z" fill="url(#wh)" stroke="#1b2f7a" stroke-width="1" stroke-linejoin="round"/>
<path d="M1361.4 292.1L1363.5 291.3L1363.9 296.2L1361.8 296.9Z" fill="url(#wh)" stroke="#1b2f7a" stroke-width="1" stroke-linejoin="round"/>
<path d="M348 209.3L360.5 213.8L379.1 226.3L399.9 237.7L418.6 245L451.8 254.3L482.9 262.6L509.9 270.9L534.8 282.3L555.6 291.3L574.3 300L586.7 310.4L607.5 330.1L624.1 339.4L639.6 349.8L644.8 356L647.9 366.4L646.9 380.9 M639.6 350.4L661.4 348.8L684.3 347.1L700.9 345.2L719.6 340.5L732 336.9L748 337.8 M694.7 136L691.5 148.5L692.6 160.9L698.8 175.4L705 187.9L713.3 200.3L721.6 211.8L732 227.3L740.3 239.8L748 251.2 M721.6 212.4L709.2 218L700.9 225.3L694.7 237.7L688.4 248.1L680.1 257.4L676.4 268.8L676.4 279.2L679.1 295.8L686.3 314.5L694.7 331.1L700.9 345.2 M676.4 277.2L670.8 302.1L665.6 327L661.4 348.1 M649.4 282.8L663.5 284.4L668.7 286.5L672.9 289.6 M715.4 318.3L709.2 330.1L700.9 344.6 M700.9 345.7L717.5 355L734.1 365.4L748 372.6 M1148 182.1L1156.3 184.2L1168.8 198.3L1182.3 209.7L1190.6 227.3L1191.6 243.9L1189.5 277.2L1183.3 297.9L1175 318.7L1167.7 340.5L1148 338.4 M1148 341.5L1206.1 356.4L1264.2 371.6L1297.5 380.9 M1193.7 270.9L1203 254.3L1212.3 240.8L1221.7 238.8L1221.7 223.2L1225.8 221.1L1239.3 223.2L1257 226.9 M1221.7 238.8L1235.2 239.8L1242.4 246L1243.5 249.8L1249.7 250.2L1264.2 259.5L1265.3 264.7L1261.1 281.3L1264.2 291.7L1276.7 306.2L1285 317.6L1280.8 333.2L1272.5 354L1264.2 371.6 M1365.3 209.7L1363.9 229.4L1361.8 252.2L1358.7 274L1364.9 275.1L1367 281.3L1366 293.8L1362.8 306.2L1357.7 309.3L1355.6 318.7L1359.7 327L1363.9 333.2L1372.2 338.4L1377.4 342.5 M1343.1 304.6L1345.2 307.9L1353.5 308.3L1359.7 307.5 M1361.8 332.2L1347.3 337.3L1331.7 343.6L1326.5 360.2L1321.3 380.9 M1389.8 270.9L1388.8 281.3L1392.9 289.6L1397.1 300L1399.2 312.4L1409.5 320.7L1424.1 328L1438.6 338.4L1455.2 349.8L1471.8 359.1L1488.4 366.4L1498.8 376.8L1509.2 375.8L1517.5 380.9 M1462.5 222.8L1457.3 212.8L1454.2 204.5L1459.4 197.2L1471.8 192L1484.3 190.4L1490.5 184.8L1492.6 178.6L1500.9 183.7L1521.6 185.8L1548 184.8 M1480.1 332.2L1486.3 340.5L1488.4 351.9L1488.4 360.2L1480.1 362.3 M1289.2 381L1320.3 388.3L1376.3 403.8L1438.6 422.5L1500.9 441.2L1548 456.8 M1320.3 381L1316.1 384.1L1308.9 386.2L1307.8 399.7L1316.1 404.9L1328.6 418.4L1341 432.9L1349.3 440.2L1357.7 442.2L1376.3 440.2L1390.9 439.1L1405.4 447.4 M1441.7 555.4L1455.2 561.6L1470.8 567.4L1488.4 563.7L1505 558.5L1521.6 549.1L1536.2 540.8L1548 532.5 M1305.8 383.1L1312 385.2L1320.3 383.1L1321.3 381 M1527 449.5L1551.9 458.8L1576.8 468.2L1595.5 472.3L1610 472.3L1634.9 469.8L1651.5 467.1L1666.1 465.5L1670.2 472.3L1676.5 475.4L1683.7 478.6 M1576.8 470.3L1595.5 480.6L1610 488.9L1630.8 503.5L1651.5 517L1672.3 529.4L1684.8 536.7L1692 541.2L1679.6 546L1678.5 553.3L1670.2 553.3L1667.1 557.4L1667.1 561.6 M1684.8 536.7L1689.9 529.4 M1527 389.3L1547.8 402.8L1560.2 412.1L1568.5 418.4L1574.7 420.4L1587.2 421.5L1605.9 425.6 M1593.4 387.2L1593 401.8L1581 409L1581 412.1L1588.2 420.4 M1595.5 395.5L1605.9 401.8L1620.4 411.1L1630.8 415.3L1639.1 408L1651.5 393.5L1661.9 381 M1630.8 415.3L1622.5 420.4L1614.2 421.5L1608 423.6L1604.8 428.7L1603.8 441.2L1600.7 455.7 M1630.8 415.3L1622.5 425.6L1614.2 429.8L1605.9 429.8 M1631.8 416.3L1634.9 426.7L1640.1 441.2L1645.3 451.6L1649.5 465.1 M1646.4 450.5L1659.8 449.5L1670.2 447.4L1672.3 444.3 M1649.5 463L1655.7 462 M1595.5 484.2L1587.2 493.1L1578.9 505.5L1568.5 518L1556.1 528.4L1541.5 538.8L1527 547.1 M1596.5 484.8L1599.7 490L1601.7 494.1 M1587.2 496.2L1589.3 500.4L1591.3 503.5 M1693.1 560.6L1686.8 567.8L1680.6 580.3L1670.2 594.8L1659.8 607.3L1651.5 619.7L1646.4 625.9 M1639.1 556.4L1651.5 557.4L1666.1 559.1L1676.5 561.6L1686.8 563.7 M1639.1 556.4L1631.8 565.7L1637 572L1651.5 575.1L1670.2 577.2L1676.5 567.8L1680.6 562.6 M1633.9 563.7L1651.5 565.7L1668.2 567.8L1676.5 568.9 M1644.3 557.9L1640.1 575.7 M1651.5 557.9L1648.4 575.7 M1659.8 557.9L1656.7 575.7 M1668.2 557.9L1664.4 575.7 M1667.1 557.4L1672.3 553.3L1680.6 552.3L1683.7 555.4 M1664.6 600L1654.2 612.5L1645.9 629.1L1645.1 662.3L1635.6 683L1621 712.1L1604.4 741.2L1587.8 770.2L1575.4 791L1556.7 813.8L1538 840.8L1521.4 865.7L1492.3 901L1471.6 932.1L1455 938.3L1430.1 932.1L1415.5 938.3L1396.8 933L1376.1 942.5L1359.5 948.7 M1691.6 559.5L1670.9 592.7L1645.9 625.9 M717.5 600L705 616.6L680.1 647.7L657.3 673.7L634.5 698.6L617.8 717.3L580.5 756.7L555.6 781.6L534.8 805.5L514.1 830.4L502.6 844.9 M692.6 600L671.8 622.8L655.2 639.4L647.9 651.9 M738.2 600L734.1 612.5L729.9 620.8L736.2 633.2L743.4 643.6L748 651.9 M709.2 610.4L717.5 615.6L728.9 618.7 M540 800L524.4 820.8L512 836.3L500.6 850.9L489.2 866.4L476.7 883L464.2 895.5L449.7 907.9L431 919.4L410.3 929.7L389.5 941.2L367.7 955.3 M500.6 851.9L507.8 858.1L509.5 868.5L507.8 887.2L508.9 901.7L514.1 916.2L522.4 928.7L526.9 934.9 M748 251.2L756.3 255.4L766.7 255.4L770.8 251.2L775 243.9L783.3 231.5L795.7 221.1L812.3 212.8L826.9 205.5L837.3 203.5L851.8 198.3L864.2 195.2L876.7 192L887.1 191.6L895.4 196.2L901.6 204.5L905.8 212.8L914.1 215.9 M816.5 136L822.7 140.2L835.2 145.3L841.4 142.2L845.6 136 M844.5 136L840.4 148.5L834.1 156.8L833.1 169.2L832.1 185.8L833.1 204.5 M834.1 156.8L839.3 157.8 M936.9 136L931.7 144.3L931.7 150.5L941 158.8L951.4 164L959.7 163L964.9 152.6L967 142.2L966 136 M937.9 183.7L942.1 194.1L946.2 206.6L948.3 217 M1019.9 207.6L1013.7 196.2L1010.6 185.8L1009.5 173.4L1011.6 156.8L1015.8 144.3L1017.8 136 M1002.3 194.1L1000.2 181.7L1002.3 173.4L1007.5 170.3L1007.5 156.8L1010 142.2L1011.6 136 M1014.7 185.8L1038.6 182.7L1063.5 179.6L1090.5 177.5L1113.3 172.3L1129.9 168.2L1138.2 175.4L1148 180.6 M1090.5 178.6L1086.3 187.9L1085.3 198.3L1090.5 204.5L1092.6 206.2 M1019.9 204.5L1032.4 205.5L1044.8 208.7L1055.2 217L1065.6 225.3L1066.6 233.6L1061.4 243.9L1059.4 260.5L1053.1 265.7L1038.6 267.8L1030.3 273L1029.3 285.5L1024.1 302.1L1015.8 312.4L1010.6 318.7 M1010.6 318.7L1024.1 321.8L1042.8 320.7L1063.5 319.7L1078 322.8L1084.3 329L1100.9 330.1L1125.8 331.1L1148 335.3 M1084.3 330.1L1082.2 341.5L1071.8 349.8L1059.4 356L1055.2 364.3L1057.3 380.9 M1125.8 331.1L1136.2 332.2L1148 338.4 M880.8 377.8L893.3 366.4L914.1 354L934.8 345.7L955.6 340.5L976.3 336.3L997.1 333.2L1017.8 331.1L1038.6 330.1L1063.5 329L1084.3 329 M770.8 251.2L779.1 255.4L787.4 260.5L796.8 268.8 M768.3 370L759.6 383.7L749.7 398.6L739.7 414.8L727.2 429.8L714.8 444.7L701.1 458.4L693.6 465.3L684.9 473.4L674.9 480.8L660 488.3 M759.6 393.7L752.2 403.6L744.7 413.6L734.7 426L722.3 439.7L709.8 452.2L702.3 458.4 M660 436L672.5 446L684.9 457.2L694.9 465.3L702.3 473.4L709.8 482.1L718.5 493.3L729.7 505.7L742.2 516.9 M694.9 465.3L701.1 459.7L712.3 462.2L724.8 468.4L734.7 473.4L747.2 477.1L754.6 478.3 M687.4 470.9L691.1 478.3L698.6 484.6L702.3 489.6L704.2 498.3 M684.9 473.4L691.1 482.1L693.6 488.3L689.9 500.8L686.2 516.9 M754.6 478.3L757.1 469.6L763.4 457.2L772.1 444.7L782 432.3L794.5 419.8L806.9 411.1L821.9 402.4L836.8 394.9L851.8 388.7L864.2 380L876.7 370 M728.5 516.9L739.7 500.8L747.2 487.1L754.6 478.3 M749.7 516.9L759.6 494.5L769.6 479.6L779.6 464.6L792 449.7L804.5 434.8L815.7 422.3L828.1 411.1L846.8 397.4L854.3 391.2L871.7 382.5L900 370 M740.9 473.4L747.2 465.9L754.6 468.4L752.2 478.3 M759.6 399.9L764.6 397.4L783.3 408.6 M758.4 411.1L763.4 401.1 M765.9 416.1L772.1 404.9 M772.1 418.6L777.1 408.6 M745.9 370L754.6 375L765.9 381.2L774.6 386.2L784.5 391.8 M777.1 375L790.8 384.9L806.9 387.4 M784.5 370L779.6 376.2L789.5 383.7 M815.7 370L821.9 376.2L828.1 382.5 M834.3 370L843.1 380L851.8 388.7L859.3 398.6L866.7 408.6L871.7 419.8L876.7 432.3 M854.3 391.2L871.7 386.2L882.9 383.7L887.9 380L884.2 376.2L876.7 377.5 M728.5 517L712 539.8L700 558.5L694 588.6L692.6 600 M749.7 517L735 552.3L724 586.5L717.5 600 M1055.2 364.3L1057.3 380.9L1057.9 385.1L1074.5 422.5L1095.3 455.7L1120 472L1130.7 480L1136.5 485.8L1145.2 496L1151 501.1 M906.4 447L924.1 457.8L938.6 470.3L951.1 479.6L976 482.7L982.2 483.8L992.6 493.1L1005 503.5 M1084.9 329L1062.1 343.6L1053.8 360.2 M348 594.8L389.5 582.3L431 569.9L472.5 557.4L514.1 549.1L534.8 546L547.3 540.8L555.6 532.5L563.9 520.1L574.3 505.5L582.6 495.2L590.9 490L603.3 486.9L617.8 487.3L638.6 488.9L659.4 488.5 M646.9 381L642.8 393.5L642.8 403.8L646.9 418.4L655.2 430.8L660 436 M1480 191.3L1485.8 188.4L1490.2 179.7L1493.1 176.8L1498.9 182.6L1509.1 186.2L1528 187L1545.5 184L1558.6 182.6L1567.4 179.7L1574.6 182.6L1584.8 187L1596.5 194.2L1611 203L1625.6 211.7L1640.2 216.1L1654.7 211.7L1662 207.3 M1563 157.8L1565.9 163.7L1567.4 170.9L1565.9 178.2L1561.5 181.1 M1640.2 182.6L1647.4 183.3L1662 176.8L1676.6 174.6L1693.3 172.4 M1640.2 216.1L1647.4 223.4L1654.7 229.2L1669.3 235L1683.8 240.8L1691.1 248.1L1694.8 259.8L1692.6 274.3L1691.1 288.9L1694 308 M1640.2 216.1L1654.7 219.7L1669.3 219.7L1676.6 211.7L1683.8 204.4L1694 198.6 M1603.8 219L1618.3 221.9L1625.6 226.3L1634.3 227.7L1640.2 220.4 M1603.8 235L1608.1 240.8L1614 251L1619.8 262.7L1622.7 275.8L1625.6 287.4L1634.3 293.3L1644.5 300.5L1650.4 308 M1602.3 291.8L1601.6 308 M1695.5 153.5L1695.5 157.1 M1602.1 290L1601.2 305L1599.3 327.4L1596.5 355.5L1594.6 379.8L1593.3 387.1 M1601.2 305.9L1617.1 307.8L1637.6 310.6L1639.5 319.9L1641.4 327.4 M1601.2 317.1L1624.6 320.9L1648.9 324.6L1671.3 327.4L1690 330.2 M1628.3 290L1641.4 297.5L1650.7 306.8L1651.7 316.2L1647 327.4L1639.5 338.7L1632 351.8L1626.4 368.6L1615.2 379.8L1605.8 389.2 M1695.7 290L1694.7 308.7L1691.9 330.2L1690 340.5L1682.6 355.5L1669.5 372.3L1662 381.7 M740.5 240L743.5 245.5L747.4 250.4L753 254.5L759.2 254.5L765.4 254.5L771.2 252.9L777.4 253.8L782.8 256.6L787.9 261.4L792.9 266.4L797.8 271L802.8 275.8L807.7 280.7L812.7 285.4L817.7 289.8L822.7 294.3L827.7 298.4L832.7 301.8L837.7 305.5L842.7 310.1L847.7 314.4L851 317.1 M771.2 252.9L772.6 246.2L778.7 240 M792 264.1L797.5 260.6L803.1 257.2L809 254.1 M802 272.4L807 268.4L811.9 264.4L816.9 260.3 M803.6 286.5L809.4 281.5L815.2 276.5L821.9 272.4L824.4 277.4L822.7 284.9L817.7 289.8 M812.8 293.2L817.7 289.8 M825.2 255L827.7 261.6L833.8 263L836 262.4 M831.9 253.3L838 251.5L844 249.7L850.1 247.9L853.2 254.4L855.3 261.2L856.8 268.2 M833.5 255L837.7 261.6L841.8 267.4L845 273L849.3 277.7L854.2 281.8L855.9 283.2 M838.5 263.3L844.4 262L850.3 260.8L854.3 259.9 M842.7 267.8L848.7 266.2L854.8 264.6L856.8 264.1 M838.5 278.6L844.1 276.4L849.6 273.2L855 269.4L861.1 266.2L867.6 263.3 M856.4 245.8L858.6 252.3L860.9 258.8L863.4 265.2L865.9 271L868.4 276.5 M865.9 245.8L868 251.5L870.2 257.2L873.4 263.2L875.9 267.4 M877.5 240L878.8 246.2L881.4 252.8L886.2 252.9L890.3 248.6L891.4 242.2L891.7 240 M882.5 255L880 261.2L877.5 268.2L882.5 273.2L887.5 277.6L892.7 282L898 286.5 M898 256.6L892.8 260.4L887.5 264.1L881.5 266.6L876 269.6L871.4 273.7L866.6 277.9L861.2 282.1L856 286.3L851.4 290.7L846.7 295.1L841.5 299.5L836 304L830.2 306.4L824.4 308.9L817.7 313.1L814.4 316.4 M857.6 284.9L862.6 289.9L867.6 294.6L872.6 298.7L877.6 302.9L882.5 307.2L887.5 311.4L892.8 315.5L894.5 316.9 M846.8 296.5L851.3 301L856 305.3L860.9 309.3L862.6 310.6 M867.6 276.5L872.6 280.8L877.5 285.1L882.8 289.3L888.2 293.4L893.2 297.5L898 301.5 M740.5 311.4L745.5 307.4L750.5 303.4L755.4 299.4L760.7 295.9L766.1 292.6L771.6 289.4L777 286.1L780.5 291.3L784.2 296.6L788.2 302.2L792.1 307.6L796.1 313.1L799.1 316.4 M740.5 311.4L745 316.4 M757.1 298.1L761.7 303.1L766.2 308.1L770.8 312.2L775.4 316.4 M751.4 317L757 313.7L762.5 310.3L767.9 306.9L772.9 303.1L777.9 299.4L782.9 295.6 M773.6 317.5L778.5 313.8L783.2 310L787.9 306.1L789.5 304.8 M791.8 317.6L795.3 314.8 M830.6 317.2L836.6 314.5L843.7 313.4L846 313.1 M829.4 306.4L832.3 312.7L831.9 314.8 M862.6 311.4L868.4 313.1L874.2 314.8L873.4 316.9 M864.2 305.6L869.2 309.5L874.2 313.5L879.2 312.4L884.2 308.9L889.4 305.5L894.5 302.1L898 299.8 M779.5 318L783.1 323.4L786.6 328.7L791.1 333.8L796.1 338.8L801.1 343.8L806.1 348.8L811.1 353.7L815.6 358.4L819.7 363L824.4 367.5L829.4 372L834.4 376.5L839.1 380.9L843.4 385.2L847.6 389.4L849.3 391.1 M799.5 352.9L803.9 357.9L808.4 362.9L812.8 367.8L817.8 372.3L822.8 376.8L827.7 381.3L829.4 382.8 M829.4 328.8L834.4 332.8L839.1 336.9L843.2 341.5L847.7 346.3L852.6 351.2L857.6 355.9L862.6 360.4L867.6 364.8L872.6 369.3L877.5 373.8L882.5 377.8 M862.6 326.3L867.6 330.3L872.6 334.2L877.5 337.6L882.5 341.6L887.5 345.7L892.7 349.7L898 353.7 M738 337.1L744.2 339L750.5 340.9L756.7 340.9L762.9 337.1L767.9 333L772.9 328.8L778.9 325.8L784.6 322.6L789.5 319.2L791.2 318 M757.9 357L763.5 360.8L768.3 364.9L773.1 366.6L778.8 363.1L784.5 359.5L790.1 357L795.8 354.5L801.1 351L806.1 346L811 342.5L816 339L821 335.3L826.1 331.4L831.5 327.8L837.7 324.6L843.6 320.6L847.6 318 M757.9 357L761.5 351.9L767.2 349.1L772.9 346.2L777.9 342.3L782.8 338.4L787.8 333 M764.6 361.2L769.6 357.8L774.6 354.4L779.6 350.9L784.5 347.4L789.5 343.9L794.5 340.4 M787.8 331.3L793.8 330.8L800 329.4L805.5 325.2L806.1 318 M804.4 333.8L810.7 330.1L817 326.3L821.1 323.8 M815.2 355.4L819.8 351.5L824.5 347.5L829.3 343.4L834.4 339.1L837.7 336.3 M822.7 361.2L827.3 357L831.9 352.9L836.5 348.3L841 343.7L846 338.8 M828.5 367L833.1 362.4L837.7 357.9L842.7 353.8L847.6 349.6 M826 346.2L830.4 351.2L835.8 356.2L837.7 357.9 M821.1 338.8L824.8 344.4L826 346.2 M771.2 367.8L768.9 371.1 M738 366.2L743.4 369L748.7 371.9 M771.2 367.8L777.4 371.6 M800 383L805.8 385.9L807.8 386.9 M789.6 371.7L795.2 368.4L800.7 365.1L806.9 361.2 M800.6 375L805.8 371.4L811.1 367.8 M802 383.6L805.3 381.1 M847.6 389.4L852.1 385.4L856.6 381.4L861.1 377.4L865.9 372.8L870.9 367.8L875 363.2L879.2 358.7L884.2 354.2L889 349.8L893.5 345.5L898 341.3 M854.3 390.3L860 387.1L865.7 383.9L871.4 380.9L877.1 378L882.8 375.4L888.5 373.2L894.2 371L898 369.5 M860.5 391.3L866.5 388.6L872.3 386.1L878.2 384.9L884.2 384.4L885.5 379.5L879.2 376.1 M874.2 383.6L876.7 387.8 M847.4 391.5L849.3 390.3 M942.2 268.5L947 263.7L951.8 258.9L956.5 254.2L961.2 249.5L965.8 244.5L970.5 239.3L975.8 233.9L983.3 234.4L988.9 238.6L994.5 242.5L998.2 245.1 M934.7 289L938.9 284.5L943.1 279.9L947.5 275.7L952.5 272.2L957.4 268.7L962.3 264.5L967.2 259.9L972.1 255.4L976.7 250.8L981.3 246.2L985.8 241.7L990.4 237.2L995 233L999.5 228.8L1003.8 224.1L1008 219.2L1012.2 214.3L1017.1 209.3L1018.8 207.7 M959 274.1L965.5 271.3L959.5 268.5L959 274.1 M1001 227.4L1006.1 230.7L1011.3 233.9L1007.2 238.5L1003.2 243.1L999.1 247.6L997.3 252.6L995.7 258.8L990.8 263.5L983.3 263.8L977.7 259.6L972.1 255.4 M987 217.6L991.7 213.1L996.3 208.5L1001 204L1003.8 202.1 M987 217.6L993.6 221.8L999.1 226L1001 227.4 M1001 204L1007.5 205.6L1014 207.1L1018.3 208.2 M962.7 249.8L968.6 253.5L972.5 255.9 M1012.2 232L1018.5 233.4L1023.3 230.6L1027.3 225.5L1031.9 223.2L1037.5 226.4L1042.1 230.2 M1020.6 233.9L1027.2 234.4L1033.7 234.8L1040 235.2L1046.3 235.6L1051.5 239.5L1048 245.8L1043.1 249.8L1041.2 250.7 M1022.5 229.2L1028.7 229.5L1035 229.9L1041.2 230.2 M1030.9 242.3L1033.7 235.8 M1030.9 242.3L1036.9 241.6L1042.8 240.9L1046.8 240.4 M1033.7 246L1040.4 245.5L1044.9 245.1 M888 192.8L893.6 196.2L898.5 200.1L902.3 205.3L905.8 210.6L910.9 214.3L916.3 218.3L919.8 224.6L922.6 230.2L925.4 235.8L928.8 241.9L931.5 248.8L930 256.6L924.9 260.5L919.1 260.4L916 257.3 M940.3 190L942.5 195.6L944.4 201.3L945.7 207.4L946.9 213.4L945 217.6L938.5 219.2L932.8 222.3L927.2 225.5L925.4 230.2 M947.8 218L951.2 223.6L954.5 229.1L957.9 234.1L959 235.8 M948.7 231.1L953.4 227.4 M888 233.9L894.7 231.7L901.4 229.9L907.9 228.9L913.2 230.4L916 236.7L917 244.2L917 249.2L922.9 251.1L929.1 247.9L931 246 M899.2 242.3L905.5 240.2L911.8 238.1L916 236.7 M900.1 243.2L905.1 246.7L910.9 247.9L915.1 247.9 M899.2 257.3L904.8 261L906.7 266.6L900.6 270.8L898.2 271.2 M908.6 264.7L914.7 263L920.9 261.7L927 261.2L932.8 263.5L938.4 267.2L943.7 271.5L948.7 275.9L953.9 279.5L959.2 283.1L964.6 286.2L970.2 289L972.1 289.9 M899.2 276.7L904.5 280.9L909.2 284.7L913.9 288.6L915.5 290 M933.8 272.2L928.9 277.8L924.4 283.4L920.7 289.1 M926.3 282.5L932.6 284.6L938.4 281.6L944 276.9L947.8 274.1 M899.2 357.6L903.7 353.1L908.2 348.1L911.8 342.6L914.6 336.4L919.5 331.5L924 326.7L928.3 322.1L932.5 317.5L936.8 312.8L941.1 308.2L945.4 304L949.7 299.7L953.9 294.7L956.8 291.2 M898.9 337.9L902.9 333.2L907.2 328.2L911.6 323.2L916 318.3L920.3 313.6L924.6 309L929.4 304.1L934.4 299.1L938.4 294.1L941.1 290.8 M899 327.8L903.7 331.5L909.2 335.5L915.3 339.8L921.8 341.8L927.8 342.3L934 342.9L935.6 339L930.2 335.6L926.1 334 M926.1 290.8L928.2 290.4 M971.8 290L977.2 292.8L982.5 295.7L987.8 299.2L993.2 303.1L998.2 307.2L1002.8 311.8L1008 315.9L1014.2 319L1021.7 321.5L1028 323.2 M975.1 318.2L974.5 311.4L976 304.1L981 299.9L985.9 304.1L990.9 308.4L995.9 313.8L997.6 315.7 M982.6 317.4L981.8 310.7L986.3 307.4L991.2 311.5L990.1 315.7 M956 316.5L963 318L969.9 319.3L976.3 320.4L982.6 321.3L988.8 322.1L995.4 320.1L1000.9 316.1L1004.2 313.2 M952.7 334L954.7 327.5L956.6 321.3L957.7 317.4 M963.5 337.3L965 330.8L966.6 324.3L967.7 319.9 M952.7 331.5L959.2 332L965.6 331.8L971.8 330.1L978 328.2L983.9 325.7L990.4 323.2L992.6 322.4 M922.8 339.8L926.1 333.2L931.1 329.8 M907 357.2L911.2 351.4L911.2 344.8 M899.5 295.2L904.5 299.5L909.5 303.9L914.5 308.2L921.5 307.7L926.1 307.4 M830.8 420.4L837 418.3L843.2 416.2L849.3 414L855.4 411.8L861.5 409.6L867.7 407.7L874 405.9L880.2 404L886.7 402.3L893.1 400.5L900.5 398 M849.9 413.7L856 412.1L862 410.4L868.1 408.8L874.4 407.2L880.6 405.7L886.9 404.2L893.1 403L899.3 401.7L905.9 401.5L912.6 401.9L919.4 401.3L926.3 398.8L932.5 399.4L938.8 402.1L943.7 406.5L946.2 412.1L948.7 417.7L950.9 423.9L953.1 430.2L954.5 436.7L953.4 443.4L949.1 449.1L942.9 452.8L936.9 453.8L930.8 454.4L924.6 454.4 M834.9 425.4L841.1 423.8L847.4 422.2L853.6 420.5L859.8 418.3L866 416.1L872.3 414.4L878.5 412.8L884.8 411.3L888.9 410.4 M854.9 426.2L861.1 424.7L867.4 423.1L873.7 421.8L880.2 420.9L886.7 419.9L893.1 419.9L899.3 420.3L905.5 419.3L911.7 417.7L913.8 417.1 M859.8 432.9L866.5 430.8L873.1 428.7L879 426.6L884.8 424.5L891.4 426.6L898 428.7L900.5 435.5L896.7 437.2L889.7 436.2L883.1 432 M871.5 427L875.2 432.6L875.3 438.4L873.6 444.2L871.5 450.2L868.7 456.4L864.8 461.9L859.8 466.9L854.8 470.4L849.5 474L845.6 476.7 M876.4 434.5L882.7 437L889 439.1L895.1 440.8L901 442.3L906.4 445.3L909.7 447.8 M843.2 416.2L845.7 421.8L848.2 427.4L850.7 432.9 M849.9 412.9L853 419.1L855.6 425.4L857.3 429.5 M898 417.9L901.4 422.9L903.9 429.1L906.9 435.6L912.1 439.5L918.3 442.2L924.3 445.1L929.6 449.5 M901.4 427L907.3 425.8L913.2 424.5L917.9 425.6L917.6 430.1L911.5 431.9L905.5 433.7 M913.8 417.1L917.1 423.7 M910.5 434.5L917.3 437L923.8 439.9L928.8 444.1L926.3 447.8 M917.1 402.1L924 404L930.5 405L936.3 406.8L940.4 411.5L942.9 417.1L945.4 423.3L947.9 429.9L949 436.7L946.2 442.8L940.8 447L934.6 449.5 M927.9 407.1L929.8 413.3L931.1 419.4L932.1 425.4L936.6 422.5L935.1 416.6L934.6 414.6 M933.8 429.5L935.6 435.7L937.9 441.6L939.6 445.3 M933.8 429.5L941.2 427.9 M941.2 428.7L942.9 434.9L944.6 441.2 M830.8 427L826.5 432.6L824 439.1L822.5 446.1L821.8 452.3L821.2 458.6L822 465.2L827.5 468.1L833.7 468.8L839.9 469.4L844.9 474.4L848.5 477.2 M837.4 431.2L831.6 434.5L830.1 440.5L830.2 446.7L834.3 450.6L838.6 447.4L839.9 441.2L844.9 436.2L839.9 432.4L838.2 431.2 M838.2 431.2L843.2 435.2L848.2 439.2L853.2 443.3L858.2 447.4L863.2 451.1L869.8 454.4 M854.9 446.1L858.6 441.1L864.3 438.4L867.3 442L865.4 445.3L869.8 447 M822.5 452.8L828 456.3L833.3 459.9L838.3 463.6L843.3 467.4L848.2 471.4L849.9 472.7 M826.6 460.3L830.4 465.2L836.6 467.7 M863.2 472.7L868.1 467.7L874.8 466.9L871.5 471.1L864.8 471.9 M869.8 454.4L876 458.1L881.5 462.3L885.6 467.1L888.1 472.7L888.9 476.9 M833.3 452L838.2 455.7L843.2 459.4L848.2 463.1L853.2 466.9L858.1 470.6L863.2 472.7 M846.5 451.1L851.5 455.4L857.2 458.6L863.2 461.1 M826.6 486.8L831 482.4L834.3 479.3 M826.6 486.8L831.5 491.8L836.5 496.8L841.5 500.9L848.2 500.1L847.6 507.3L843.2 513.1L838.2 518.9L834 525.8L838.2 530.8L838.8 537.5L834.8 542.7L833.2 548.5L837.8 554.1L841.5 559.1L845.2 564.1L849.8 567.4 M831.5 488.5L837.5 485L843.6 482.2L849.8 481L856.5 485.6L861.5 489.3L863.1 493.5L857.2 497.6L850.7 500.1L848.2 500.1 M841.5 491L847.5 487.5L853.7 486.2L856.1 489.8L850.2 493.8L843.7 492.4L841.5 491 M858.1 478.5L863.1 482.3L868.1 486.3L872.5 492.1L876.1 498.7L880 505.4L883.9 512.5L883.2 518.8L879.7 523.6L874.7 524.2 M872.2 502.6L877.2 500.9 M872.2 502.6L874.7 509.2L878.1 514.2L883 515 M854.8 503.4L851.9 509.2L848.2 514.2L844.5 519.2L841.5 525.8L847.3 532.5L849.8 534.1 M854.8 506.7L861.4 510.1L866.4 513.8L871.4 518.9L876.4 525L881.4 529.2L885.3 536.1L886.2 542.3L885.5 549.1L882.2 554.1 M848.2 514.2L855.3 518.6L859.8 520.9 M858.1 509.2L854.8 515.9 M863.1 512.5L860 518.8L859 520.9 M843.2 521.7L849.8 518.4L854.8 522.8L854.2 528.1L848.7 532.2L846.5 533.3 M868.1 515.9L864.4 522.1L860.6 528.4L856.9 534.1L853.1 539.1 M872.2 522.5L869.1 528.1L865.6 533.8L860.6 539.1L858.1 540.8 M876.4 525.8L873.1 532.5L869.4 537.5L863.1 542.4 M844.8 530.8L851 534.5L856.4 539.1L863.1 542.4L867.5 549.1L871.5 554L873.1 555.7 M836.5 529.2L831.5 534.1L826.9 538.8L822.4 543.3L816.9 547.8L812.7 552.7L811.6 556.6 M834 525.8L829.7 530.8L825.6 535.8L821.6 540.8 M822.4 543.3L828.2 545.8L831.5 546.6 M813.3 550.8L819.9 554.9L826.6 558.2L832.4 555.7 M838.2 539.1L843.2 545.5L848.7 547.2L855.3 544.4L859.8 543.3 M846.5 548.3L849.8 554.9L853.5 560.5L854.8 562.4 M851.5 547.4L854.8 554.1L858.5 559.6L859.8 561.5 M856.5 545.8L860.6 552.4L864.8 559.1 M861.4 544.1L865.6 550.8L869.8 556.6 M836.5 552.4L844 549.5L846.5 548.3 M854.8 563.2L861.4 559.9L867.7 557.4L874 554.9L880.5 552.8L887.2 555.7L881.2 560.4L874.7 562.4L868.8 564.4L862.6 566.3L856.5 565.3L854.8 563.2 M878.1 525L879.7 530.8L879.1 537L878.5 543.2L878.6 549.3L879.7 553.2 M884.7 525L890.7 522.5L896.6 520.1L902.4 517.6L908 514.8L912.7 514.2L915.8 520L912.9 525L908 518.4L906.3 515.9 M885.5 529.2L892.4 526.6L899 524.5L905.5 522.5 M886.4 535L892.3 533L898.2 531L904.1 529.4L909.6 525.8 M886.4 540.8L892.2 539.1L898 537.5L903.8 535L909.6 532.5 M903 519.2L906.3 525.8L908 529.2 M881.4 534.1L886.4 535" fill="none" stroke="#f9e57c" stroke-width="2.500" stroke-linejoin="round" stroke-linecap="round"/>
<path d="M348 209.3L360.5 213.8L379.1 226.3L399.9 237.7L418.6 245L451.8 254.3L482.9 262.6L509.9 270.9L534.8 282.3L555.6 291.3L574.3 300L586.7 310.4L607.5 330.1L624.1 339.4L639.6 349.8L644.8 356L647.9 366.4L646.9 380.9 M639.6 350.4L661.4 348.8L684.3 347.1L700.9 345.2L719.6 340.5L732 336.9L748 337.8 M694.7 136L691.5 148.5L692.6 160.9L698.8 175.4L705 187.9L713.3 200.3L721.6 211.8L732 227.3L740.3 239.8L748 251.2 M721.6 212.4L709.2 218L700.9 225.3L694.7 237.7L688.4 248.1L680.1 257.4L676.4 268.8L676.4 279.2L679.1 295.8L686.3 314.5L694.7 331.1L700.9 345.2 M676.4 277.2L670.8 302.1L665.6 327L661.4 348.1 M649.4 282.8L663.5 284.4L668.7 286.5L672.9 289.6 M715.4 318.3L709.2 330.1L700.9 344.6 M700.9 345.7L717.5 355L734.1 365.4L748 372.6 M1148 182.1L1156.3 184.2L1168.8 198.3L1182.3 209.7L1190.6 227.3L1191.6 243.9L1189.5 277.2L1183.3 297.9L1175 318.7L1167.7 340.5L1148 338.4 M1148 341.5L1206.1 356.4L1264.2 371.6L1297.5 380.9 M1193.7 270.9L1203 254.3L1212.3 240.8L1221.7 238.8L1221.7 223.2L1225.8 221.1L1239.3 223.2L1257 226.9 M1221.7 238.8L1235.2 239.8L1242.4 246L1243.5 249.8L1249.7 250.2L1264.2 259.5L1265.3 264.7L1261.1 281.3L1264.2 291.7L1276.7 306.2L1285 317.6L1280.8 333.2L1272.5 354L1264.2 371.6 M1365.3 209.7L1363.9 229.4L1361.8 252.2L1358.7 274L1364.9 275.1L1367 281.3L1366 293.8L1362.8 306.2L1357.7 309.3L1355.6 318.7L1359.7 327L1363.9 333.2L1372.2 338.4L1377.4 342.5 M1343.1 304.6L1345.2 307.9L1353.5 308.3L1359.7 307.5 M1361.8 332.2L1347.3 337.3L1331.7 343.6L1326.5 360.2L1321.3 380.9 M1389.8 270.9L1388.8 281.3L1392.9 289.6L1397.1 300L1399.2 312.4L1409.5 320.7L1424.1 328L1438.6 338.4L1455.2 349.8L1471.8 359.1L1488.4 366.4L1498.8 376.8L1509.2 375.8L1517.5 380.9 M1462.5 222.8L1457.3 212.8L1454.2 204.5L1459.4 197.2L1471.8 192L1484.3 190.4L1490.5 184.8L1492.6 178.6L1500.9 183.7L1521.6 185.8L1548 184.8 M1480.1 332.2L1486.3 340.5L1488.4 351.9L1488.4 360.2L1480.1 362.3 M1289.2 381L1320.3 388.3L1376.3 403.8L1438.6 422.5L1500.9 441.2L1548 456.8 M1320.3 381L1316.1 384.1L1308.9 386.2L1307.8 399.7L1316.1 404.9L1328.6 418.4L1341 432.9L1349.3 440.2L1357.7 442.2L1376.3 440.2L1390.9 439.1L1405.4 447.4 M1441.7 555.4L1455.2 561.6L1470.8 567.4L1488.4 563.7L1505 558.5L1521.6 549.1L1536.2 540.8L1548 532.5 M1305.8 383.1L1312 385.2L1320.3 383.1L1321.3 381 M1527 449.5L1551.9 458.8L1576.8 468.2L1595.5 472.3L1610 472.3L1634.9 469.8L1651.5 467.1L1666.1 465.5L1670.2 472.3L1676.5 475.4L1683.7 478.6 M1576.8 470.3L1595.5 480.6L1610 488.9L1630.8 503.5L1651.5 517L1672.3 529.4L1684.8 536.7L1692 541.2L1679.6 546L1678.5 553.3L1670.2 553.3L1667.1 557.4L1667.1 561.6 M1684.8 536.7L1689.9 529.4 M1527 389.3L1547.8 402.8L1560.2 412.1L1568.5 418.4L1574.7 420.4L1587.2 421.5L1605.9 425.6 M1593.4 387.2L1593 401.8L1581 409L1581 412.1L1588.2 420.4 M1595.5 395.5L1605.9 401.8L1620.4 411.1L1630.8 415.3L1639.1 408L1651.5 393.5L1661.9 381 M1630.8 415.3L1622.5 420.4L1614.2 421.5L1608 423.6L1604.8 428.7L1603.8 441.2L1600.7 455.7 M1630.8 415.3L1622.5 425.6L1614.2 429.8L1605.9 429.8 M1631.8 416.3L1634.9 426.7L1640.1 441.2L1645.3 451.6L1649.5 465.1 M1646.4 450.5L1659.8 449.5L1670.2 447.4L1672.3 444.3 M1649.5 463L1655.7 462 M1595.5 484.2L1587.2 493.1L1578.9 505.5L1568.5 518L1556.1 528.4L1541.5 538.8L1527 547.1 M1596.5 484.8L1599.7 490L1601.7 494.1 M1587.2 496.2L1589.3 500.4L1591.3 503.5 M1693.1 560.6L1686.8 567.8L1680.6 580.3L1670.2 594.8L1659.8 607.3L1651.5 619.7L1646.4 625.9 M1639.1 556.4L1651.5 557.4L1666.1 559.1L1676.5 561.6L1686.8 563.7 M1639.1 556.4L1631.8 565.7L1637 572L1651.5 575.1L1670.2 577.2L1676.5 567.8L1680.6 562.6 M1633.9 563.7L1651.5 565.7L1668.2 567.8L1676.5 568.9 M1644.3 557.9L1640.1 575.7 M1651.5 557.9L1648.4 575.7 M1659.8 557.9L1656.7 575.7 M1668.2 557.9L1664.4 575.7 M1667.1 557.4L1672.3 553.3L1680.6 552.3L1683.7 555.4 M1664.6 600L1654.2 612.5L1645.9 629.1L1645.1 662.3L1635.6 683L1621 712.1L1604.4 741.2L1587.8 770.2L1575.4 791L1556.7 813.8L1538 840.8L1521.4 865.7L1492.3 901L1471.6 932.1L1455 938.3L1430.1 932.1L1415.5 938.3L1396.8 933L1376.1 942.5L1359.5 948.7 M1691.6 559.5L1670.9 592.7L1645.9 625.9 M717.5 600L705 616.6L680.1 647.7L657.3 673.7L634.5 698.6L617.8 717.3L580.5 756.7L555.6 781.6L534.8 805.5L514.1 830.4L502.6 844.9 M692.6 600L671.8 622.8L655.2 639.4L647.9 651.9 M738.2 600L734.1 612.5L729.9 620.8L736.2 633.2L743.4 643.6L748 651.9 M709.2 610.4L717.5 615.6L728.9 618.7 M540 800L524.4 820.8L512 836.3L500.6 850.9L489.2 866.4L476.7 883L464.2 895.5L449.7 907.9L431 919.4L410.3 929.7L389.5 941.2L367.7 955.3 M500.6 851.9L507.8 858.1L509.5 868.5L507.8 887.2L508.9 901.7L514.1 916.2L522.4 928.7L526.9 934.9 M748 251.2L756.3 255.4L766.7 255.4L770.8 251.2L775 243.9L783.3 231.5L795.7 221.1L812.3 212.8L826.9 205.5L837.3 203.5L851.8 198.3L864.2 195.2L876.7 192L887.1 191.6L895.4 196.2L901.6 204.5L905.8 212.8L914.1 215.9 M816.5 136L822.7 140.2L835.2 145.3L841.4 142.2L845.6 136 M844.5 136L840.4 148.5L834.1 156.8L833.1 169.2L832.1 185.8L833.1 204.5 M834.1 156.8L839.3 157.8 M936.9 136L931.7 144.3L931.7 150.5L941 158.8L951.4 164L959.7 163L964.9 152.6L967 142.2L966 136 M937.9 183.7L942.1 194.1L946.2 206.6L948.3 217 M1019.9 207.6L1013.7 196.2L1010.6 185.8L1009.5 173.4L1011.6 156.8L1015.8 144.3L1017.8 136 M1002.3 194.1L1000.2 181.7L1002.3 173.4L1007.5 170.3L1007.5 156.8L1010 142.2L1011.6 136 M1014.7 185.8L1038.6 182.7L1063.5 179.6L1090.5 177.5L1113.3 172.3L1129.9 168.2L1138.2 175.4L1148 180.6 M1090.5 178.6L1086.3 187.9L1085.3 198.3L1090.5 204.5L1092.6 206.2 M1019.9 204.5L1032.4 205.5L1044.8 208.7L1055.2 217L1065.6 225.3L1066.6 233.6L1061.4 243.9L1059.4 260.5L1053.1 265.7L1038.6 267.8L1030.3 273L1029.3 285.5L1024.1 302.1L1015.8 312.4L1010.6 318.7 M1010.6 318.7L1024.1 321.8L1042.8 320.7L1063.5 319.7L1078 322.8L1084.3 329L1100.9 330.1L1125.8 331.1L1148 335.3 M1084.3 330.1L1082.2 341.5L1071.8 349.8L1059.4 356L1055.2 364.3L1057.3 380.9 M1125.8 331.1L1136.2 332.2L1148 338.4 M880.8 377.8L893.3 366.4L914.1 354L934.8 345.7L955.6 340.5L976.3 336.3L997.1 333.2L1017.8 331.1L1038.6 330.1L1063.5 329L1084.3 329 M770.8 251.2L779.1 255.4L787.4 260.5L796.8 268.8 M768.3 370L759.6 383.7L749.7 398.6L739.7 414.8L727.2 429.8L714.8 444.7L701.1 458.4L693.6 465.3L684.9 473.4L674.9 480.8L660 488.3 M759.6 393.7L752.2 403.6L744.7 413.6L734.7 426L722.3 439.7L709.8 452.2L702.3 458.4 M660 436L672.5 446L684.9 457.2L694.9 465.3L702.3 473.4L709.8 482.1L718.5 493.3L729.7 505.7L742.2 516.9 M694.9 465.3L701.1 459.7L712.3 462.2L724.8 468.4L734.7 473.4L747.2 477.1L754.6 478.3 M687.4 470.9L691.1 478.3L698.6 484.6L702.3 489.6L704.2 498.3 M684.9 473.4L691.1 482.1L693.6 488.3L689.9 500.8L686.2 516.9 M754.6 478.3L757.1 469.6L763.4 457.2L772.1 444.7L782 432.3L794.5 419.8L806.9 411.1L821.9 402.4L836.8 394.9L851.8 388.7L864.2 380L876.7 370 M728.5 516.9L739.7 500.8L747.2 487.1L754.6 478.3 M749.7 516.9L759.6 494.5L769.6 479.6L779.6 464.6L792 449.7L804.5 434.8L815.7 422.3L828.1 411.1L846.8 397.4L854.3 391.2L871.7 382.5L900 370 M740.9 473.4L747.2 465.9L754.6 468.4L752.2 478.3 M759.6 399.9L764.6 397.4L783.3 408.6 M758.4 411.1L763.4 401.1 M765.9 416.1L772.1 404.9 M772.1 418.6L777.1 408.6 M745.9 370L754.6 375L765.9 381.2L774.6 386.2L784.5 391.8 M777.1 375L790.8 384.9L806.9 387.4 M784.5 370L779.6 376.2L789.5 383.7 M815.7 370L821.9 376.2L828.1 382.5 M834.3 370L843.1 380L851.8 388.7L859.3 398.6L866.7 408.6L871.7 419.8L876.7 432.3 M854.3 391.2L871.7 386.2L882.9 383.7L887.9 380L884.2 376.2L876.7 377.5 M728.5 517L712 539.8L700 558.5L694 588.6L692.6 600 M749.7 517L735 552.3L724 586.5L717.5 600 M1055.2 364.3L1057.3 380.9L1057.9 385.1L1074.5 422.5L1095.3 455.7L1120 472L1130.7 480L1136.5 485.8L1145.2 496L1151 501.1 M906.4 447L924.1 457.8L938.6 470.3L951.1 479.6L976 482.7L982.2 483.8L992.6 493.1L1005 503.5 M1084.9 329L1062.1 343.6L1053.8 360.2 M348 594.8L389.5 582.3L431 569.9L472.5 557.4L514.1 549.1L534.8 546L547.3 540.8L555.6 532.5L563.9 520.1L574.3 505.5L582.6 495.2L590.9 490L603.3 486.9L617.8 487.3L638.6 488.9L659.4 488.5 M646.9 381L642.8 393.5L642.8 403.8L646.9 418.4L655.2 430.8L660 436 M1480 191.3L1485.8 188.4L1490.2 179.7L1493.1 176.8L1498.9 182.6L1509.1 186.2L1528 187L1545.5 184L1558.6 182.6L1567.4 179.7L1574.6 182.6L1584.8 187L1596.5 194.2L1611 203L1625.6 211.7L1640.2 216.1L1654.7 211.7L1662 207.3 M1563 157.8L1565.9 163.7L1567.4 170.9L1565.9 178.2L1561.5 181.1 M1640.2 182.6L1647.4 183.3L1662 176.8L1676.6 174.6L1693.3 172.4 M1640.2 216.1L1647.4 223.4L1654.7 229.2L1669.3 235L1683.8 240.8L1691.1 248.1L1694.8 259.8L1692.6 274.3L1691.1 288.9L1694 308 M1640.2 216.1L1654.7 219.7L1669.3 219.7L1676.6 211.7L1683.8 204.4L1694 198.6 M1603.8 219L1618.3 221.9L1625.6 226.3L1634.3 227.7L1640.2 220.4 M1603.8 235L1608.1 240.8L1614 251L1619.8 262.7L1622.7 275.8L1625.6 287.4L1634.3 293.3L1644.5 300.5L1650.4 308 M1602.3 291.8L1601.6 308 M1695.5 153.5L1695.5 157.1 M1602.1 290L1601.2 305L1599.3 327.4L1596.5 355.5L1594.6 379.8L1593.3 387.1 M1601.2 305.9L1617.1 307.8L1637.6 310.6L1639.5 319.9L1641.4 327.4 M1601.2 317.1L1624.6 320.9L1648.9 324.6L1671.3 327.4L1690 330.2 M1628.3 290L1641.4 297.5L1650.7 306.8L1651.7 316.2L1647 327.4L1639.5 338.7L1632 351.8L1626.4 368.6L1615.2 379.8L1605.8 389.2 M1695.7 290L1694.7 308.7L1691.9 330.2L1690 340.5L1682.6 355.5L1669.5 372.3L1662 381.7 M740.5 240L743.5 245.5L747.4 250.4L753 254.5L759.2 254.5L765.4 254.5L771.2 252.9L777.4 253.8L782.8 256.6L787.9 261.4L792.9 266.4L797.8 271L802.8 275.8L807.7 280.7L812.7 285.4L817.7 289.8L822.7 294.3L827.7 298.4L832.7 301.8L837.7 305.5L842.7 310.1L847.7 314.4L851 317.1 M771.2 252.9L772.6 246.2L778.7 240 M792 264.1L797.5 260.6L803.1 257.2L809 254.1 M802 272.4L807 268.4L811.9 264.4L816.9 260.3 M803.6 286.5L809.4 281.5L815.2 276.5L821.9 272.4L824.4 277.4L822.7 284.9L817.7 289.8 M812.8 293.2L817.7 289.8 M825.2 255L827.7 261.6L833.8 263L836 262.4 M831.9 253.3L838 251.5L844 249.7L850.1 247.9L853.2 254.4L855.3 261.2L856.8 268.2 M833.5 255L837.7 261.6L841.8 267.4L845 273L849.3 277.7L854.2 281.8L855.9 283.2 M838.5 263.3L844.4 262L850.3 260.8L854.3 259.9 M842.7 267.8L848.7 266.2L854.8 264.6L856.8 264.1 M838.5 278.6L844.1 276.4L849.6 273.2L855 269.4L861.1 266.2L867.6 263.3 M856.4 245.8L858.6 252.3L860.9 258.8L863.4 265.2L865.9 271L868.4 276.5 M865.9 245.8L868 251.5L870.2 257.2L873.4 263.2L875.9 267.4 M877.5 240L878.8 246.2L881.4 252.8L886.2 252.9L890.3 248.6L891.4 242.2L891.7 240 M882.5 255L880 261.2L877.5 268.2L882.5 273.2L887.5 277.6L892.7 282L898 286.5 M898 256.6L892.8 260.4L887.5 264.1L881.5 266.6L876 269.6L871.4 273.7L866.6 277.9L861.2 282.1L856 286.3L851.4 290.7L846.7 295.1L841.5 299.5L836 304L830.2 306.4L824.4 308.9L817.7 313.1L814.4 316.4 M857.6 284.9L862.6 289.9L867.6 294.6L872.6 298.7L877.6 302.9L882.5 307.2L887.5 311.4L892.8 315.5L894.5 316.9 M846.8 296.5L851.3 301L856 305.3L860.9 309.3L862.6 310.6 M867.6 276.5L872.6 280.8L877.5 285.1L882.8 289.3L888.2 293.4L893.2 297.5L898 301.5 M740.5 311.4L745.5 307.4L750.5 303.4L755.4 299.4L760.7 295.9L766.1 292.6L771.6 289.4L777 286.1L780.5 291.3L784.2 296.6L788.2 302.2L792.1 307.6L796.1 313.1L799.1 316.4 M740.5 311.4L745 316.4 M757.1 298.1L761.7 303.1L766.2 308.1L770.8 312.2L775.4 316.4 M751.4 317L757 313.7L762.5 310.3L767.9 306.9L772.9 303.1L777.9 299.4L782.9 295.6 M773.6 317.5L778.5 313.8L783.2 310L787.9 306.1L789.5 304.8 M791.8 317.6L795.3 314.8 M830.6 317.2L836.6 314.5L843.7 313.4L846 313.1 M829.4 306.4L832.3 312.7L831.9 314.8 M862.6 311.4L868.4 313.1L874.2 314.8L873.4 316.9 M864.2 305.6L869.2 309.5L874.2 313.5L879.2 312.4L884.2 308.9L889.4 305.5L894.5 302.1L898 299.8 M779.5 318L783.1 323.4L786.6 328.7L791.1 333.8L796.1 338.8L801.1 343.8L806.1 348.8L811.1 353.7L815.6 358.4L819.7 363L824.4 367.5L829.4 372L834.4 376.5L839.1 380.9L843.4 385.2L847.6 389.4L849.3 391.1 M799.5 352.9L803.9 357.9L808.4 362.9L812.8 367.8L817.8 372.3L822.8 376.8L827.7 381.3L829.4 382.8 M829.4 328.8L834.4 332.8L839.1 336.9L843.2 341.5L847.7 346.3L852.6 351.2L857.6 355.9L862.6 360.4L867.6 364.8L872.6 369.3L877.5 373.8L882.5 377.8 M862.6 326.3L867.6 330.3L872.6 334.2L877.5 337.6L882.5 341.6L887.5 345.7L892.7 349.7L898 353.7 M738 337.1L744.2 339L750.5 340.9L756.7 340.9L762.9 337.1L767.9 333L772.9 328.8L778.9 325.8L784.6 322.6L789.5 319.2L791.2 318 M757.9 357L763.5 360.8L768.3 364.9L773.1 366.6L778.8 363.1L784.5 359.5L790.1 357L795.8 354.5L801.1 351L806.1 346L811 342.5L816 339L821 335.3L826.1 331.4L831.5 327.8L837.7 324.6L843.6 320.6L847.6 318 M757.9 357L761.5 351.9L767.2 349.1L772.9 346.2L777.9 342.3L782.8 338.4L787.8 333 M764.6 361.2L769.6 357.8L774.6 354.4L779.6 350.9L784.5 347.4L789.5 343.9L794.5 340.4 M787.8 331.3L793.8 330.8L800 329.4L805.5 325.2L806.1 318 M804.4 333.8L810.7 330.1L817 326.3L821.1 323.8 M815.2 355.4L819.8 351.5L824.5 347.5L829.3 343.4L834.4 339.1L837.7 336.3 M822.7 361.2L827.3 357L831.9 352.9L836.5 348.3L841 343.7L846 338.8 M828.5 367L833.1 362.4L837.7 357.9L842.7 353.8L847.6 349.6 M826 346.2L830.4 351.2L835.8 356.2L837.7 357.9 M821.1 338.8L824.8 344.4L826 346.2 M771.2 367.8L768.9 371.1 M738 366.2L743.4 369L748.7 371.9 M771.2 367.8L777.4 371.6 M800 383L805.8 385.9L807.8 386.9 M789.6 371.7L795.2 368.4L800.7 365.1L806.9 361.2 M800.6 375L805.8 371.4L811.1 367.8 M802 383.6L805.3 381.1 M847.6 389.4L852.1 385.4L856.6 381.4L861.1 377.4L865.9 372.8L870.9 367.8L875 363.2L879.2 358.7L884.2 354.2L889 349.8L893.5 345.5L898 341.3 M854.3 390.3L860 387.1L865.7 383.9L871.4 380.9L877.1 378L882.8 375.4L888.5 373.2L894.2 371L898 369.5 M860.5 391.3L866.5 388.6L872.3 386.1L878.2 384.9L884.2 384.4L885.5 379.5L879.2 376.1 M874.2 383.6L876.7 387.8 M847.4 391.5L849.3 390.3 M942.2 268.5L947 263.7L951.8 258.9L956.5 254.2L961.2 249.5L965.8 244.5L970.5 239.3L975.8 233.9L983.3 234.4L988.9 238.6L994.5 242.5L998.2 245.1 M934.7 289L938.9 284.5L943.1 279.9L947.5 275.7L952.5 272.2L957.4 268.7L962.3 264.5L967.2 259.9L972.1 255.4L976.7 250.8L981.3 246.2L985.8 241.7L990.4 237.2L995 233L999.5 228.8L1003.8 224.1L1008 219.2L1012.2 214.3L1017.1 209.3L1018.8 207.7 M959 274.1L965.5 271.3L959.5 268.5L959 274.1 M1001 227.4L1006.1 230.7L1011.3 233.9L1007.2 238.5L1003.2 243.1L999.1 247.6L997.3 252.6L995.7 258.8L990.8 263.5L983.3 263.8L977.7 259.6L972.1 255.4 M987 217.6L991.7 213.1L996.3 208.5L1001 204L1003.8 202.1 M987 217.6L993.6 221.8L999.1 226L1001 227.4 M1001 204L1007.5 205.6L1014 207.1L1018.3 208.2 M962.7 249.8L968.6 253.5L972.5 255.9 M1012.2 232L1018.5 233.4L1023.3 230.6L1027.3 225.5L1031.9 223.2L1037.5 226.4L1042.1 230.2 M1020.6 233.9L1027.2 234.4L1033.7 234.8L1040 235.2L1046.3 235.6L1051.5 239.5L1048 245.8L1043.1 249.8L1041.2 250.7 M1022.5 229.2L1028.7 229.5L1035 229.9L1041.2 230.2 M1030.9 242.3L1033.7 235.8 M1030.9 242.3L1036.9 241.6L1042.8 240.9L1046.8 240.4 M1033.7 246L1040.4 245.5L1044.9 245.1 M888 192.8L893.6 196.2L898.5 200.1L902.3 205.3L905.8 210.6L910.9 214.3L916.3 218.3L919.8 224.6L922.6 230.2L925.4 235.8L928.8 241.9L931.5 248.8L930 256.6L924.9 260.5L919.1 260.4L916 257.3 M940.3 190L942.5 195.6L944.4 201.3L945.7 207.4L946.9 213.4L945 217.6L938.5 219.2L932.8 222.3L927.2 225.5L925.4 230.2 M947.8 218L951.2 223.6L954.5 229.1L957.9 234.1L959 235.8 M948.7 231.1L953.4 227.4 M888 233.9L894.7 231.7L901.4 229.9L907.9 228.9L913.2 230.4L916 236.7L917 244.2L917 249.2L922.9 251.1L929.1 247.9L931 246 M899.2 242.3L905.5 240.2L911.8 238.1L916 236.7 M900.1 243.2L905.1 246.7L910.9 247.9L915.1 247.9 M899.2 257.3L904.8 261L906.7 266.6L900.6 270.8L898.2 271.2 M908.6 264.7L914.7 263L920.9 261.7L927 261.2L932.8 263.5L938.4 267.2L943.7 271.5L948.7 275.9L953.9 279.5L959.2 283.1L964.6 286.2L970.2 289L972.1 289.9 M899.2 276.7L904.5 280.9L909.2 284.7L913.9 288.6L915.5 290 M933.8 272.2L928.9 277.8L924.4 283.4L920.7 289.1 M926.3 282.5L932.6 284.6L938.4 281.6L944 276.9L947.8 274.1 M899.2 357.6L903.7 353.1L908.2 348.1L911.8 342.6L914.6 336.4L919.5 331.5L924 326.7L928.3 322.1L932.5 317.5L936.8 312.8L941.1 308.2L945.4 304L949.7 299.7L953.9 294.7L956.8 291.2 M898.9 337.9L902.9 333.2L907.2 328.2L911.6 323.2L916 318.3L920.3 313.6L924.6 309L929.4 304.1L934.4 299.1L938.4 294.1L941.1 290.8 M899 327.8L903.7 331.5L909.2 335.5L915.3 339.8L921.8 341.8L927.8 342.3L934 342.9L935.6 339L930.2 335.6L926.1 334 M926.1 290.8L928.2 290.4 M971.8 290L977.2 292.8L982.5 295.7L987.8 299.2L993.2 303.1L998.2 307.2L1002.8 311.8L1008 315.9L1014.2 319L1021.7 321.5L1028 323.2 M975.1 318.2L974.5 311.4L976 304.1L981 299.9L985.9 304.1L990.9 308.4L995.9 313.8L997.6 315.7 M982.6 317.4L981.8 310.7L986.3 307.4L991.2 311.5L990.1 315.7 M956 316.5L963 318L969.9 319.3L976.3 320.4L982.6 321.3L988.8 322.1L995.4 320.1L1000.9 316.1L1004.2 313.2 M952.7 334L954.7 327.5L956.6 321.3L957.7 317.4 M963.5 337.3L965 330.8L966.6 324.3L967.7 319.9 M952.7 331.5L959.2 332L965.6 331.8L971.8 330.1L978 328.2L983.9 325.7L990.4 323.2L992.6 322.4 M922.8 339.8L926.1 333.2L931.1 329.8 M907 357.2L911.2 351.4L911.2 344.8 M899.5 295.2L904.5 299.5L909.5 303.9L914.5 308.2L921.5 307.7L926.1 307.4 M830.8 420.4L837 418.3L843.2 416.2L849.3 414L855.4 411.8L861.5 409.6L867.7 407.7L874 405.9L880.2 404L886.7 402.3L893.1 400.5L900.5 398 M849.9 413.7L856 412.1L862 410.4L868.1 408.8L874.4 407.2L880.6 405.7L886.9 404.2L893.1 403L899.3 401.7L905.9 401.5L912.6 401.9L919.4 401.3L926.3 398.8L932.5 399.4L938.8 402.1L943.7 406.5L946.2 412.1L948.7 417.7L950.9 423.9L953.1 430.2L954.5 436.7L953.4 443.4L949.1 449.1L942.9 452.8L936.9 453.8L930.8 454.4L924.6 454.4 M834.9 425.4L841.1 423.8L847.4 422.2L853.6 420.5L859.8 418.3L866 416.1L872.3 414.4L878.5 412.8L884.8 411.3L888.9 410.4 M854.9 426.2L861.1 424.7L867.4 423.1L873.7 421.8L880.2 420.9L886.7 419.9L893.1 419.9L899.3 420.3L905.5 419.3L911.7 417.7L913.8 417.1 M859.8 432.9L866.5 430.8L873.1 428.7L879 426.6L884.8 424.5L891.4 426.6L898 428.7L900.5 435.5L896.7 437.2L889.7 436.2L883.1 432 M871.5 427L875.2 432.6L875.3 438.4L873.6 444.2L871.5 450.2L868.7 456.4L864.8 461.9L859.8 466.9L854.8 470.4L849.5 474L845.6 476.7 M876.4 434.5L882.7 437L889 439.1L895.1 440.8L901 442.3L906.4 445.3L909.7 447.8 M843.2 416.2L845.7 421.8L848.2 427.4L850.7 432.9 M849.9 412.9L853 419.1L855.6 425.4L857.3 429.5 M898 417.9L901.4 422.9L903.9 429.1L906.9 435.6L912.1 439.5L918.3 442.2L924.3 445.1L929.6 449.5 M901.4 427L907.3 425.8L913.2 424.5L917.9 425.6L917.6 430.1L911.5 431.9L905.5 433.7 M913.8 417.1L917.1 423.7 M910.5 434.5L917.3 437L923.8 439.9L928.8 444.1L926.3 447.8 M917.1 402.1L924 404L930.5 405L936.3 406.8L940.4 411.5L942.9 417.1L945.4 423.3L947.9 429.9L949 436.7L946.2 442.8L940.8 447L934.6 449.5 M927.9 407.1L929.8 413.3L931.1 419.4L932.1 425.4L936.6 422.5L935.1 416.6L934.6 414.6 M933.8 429.5L935.6 435.7L937.9 441.6L939.6 445.3 M933.8 429.5L941.2 427.9 M941.2 428.7L942.9 434.9L944.6 441.2 M830.8 427L826.5 432.6L824 439.1L822.5 446.1L821.8 452.3L821.2 458.6L822 465.2L827.5 468.1L833.7 468.8L839.9 469.4L844.9 474.4L848.5 477.2 M837.4 431.2L831.6 434.5L830.1 440.5L830.2 446.7L834.3 450.6L838.6 447.4L839.9 441.2L844.9 436.2L839.9 432.4L838.2 431.2 M838.2 431.2L843.2 435.2L848.2 439.2L853.2 443.3L858.2 447.4L863.2 451.1L869.8 454.4 M854.9 446.1L858.6 441.1L864.3 438.4L867.3 442L865.4 445.3L869.8 447 M822.5 452.8L828 456.3L833.3 459.9L838.3 463.6L843.3 467.4L848.2 471.4L849.9 472.7 M826.6 460.3L830.4 465.2L836.6 467.7 M863.2 472.7L868.1 467.7L874.8 466.9L871.5 471.1L864.8 471.9 M869.8 454.4L876 458.1L881.5 462.3L885.6 467.1L888.1 472.7L888.9 476.9 M833.3 452L838.2 455.7L843.2 459.4L848.2 463.1L853.2 466.9L858.1 470.6L863.2 472.7 M846.5 451.1L851.5 455.4L857.2 458.6L863.2 461.1 M826.6 486.8L831 482.4L834.3 479.3 M826.6 486.8L831.5 491.8L836.5 496.8L841.5 500.9L848.2 500.1L847.6 507.3L843.2 513.1L838.2 518.9L834 525.8L838.2 530.8L838.8 537.5L834.8 542.7L833.2 548.5L837.8 554.1L841.5 559.1L845.2 564.1L849.8 567.4 M831.5 488.5L837.5 485L843.6 482.2L849.8 481L856.5 485.6L861.5 489.3L863.1 493.5L857.2 497.6L850.7 500.1L848.2 500.1 M841.5 491L847.5 487.5L853.7 486.2L856.1 489.8L850.2 493.8L843.7 492.4L841.5 491 M858.1 478.5L863.1 482.3L868.1 486.3L872.5 492.1L876.1 498.7L880 505.4L883.9 512.5L883.2 518.8L879.7 523.6L874.7 524.2 M872.2 502.6L877.2 500.9 M872.2 502.6L874.7 509.2L878.1 514.2L883 515 M854.8 503.4L851.9 509.2L848.2 514.2L844.5 519.2L841.5 525.8L847.3 532.5L849.8 534.1 M854.8 506.7L861.4 510.1L866.4 513.8L871.4 518.9L876.4 525L881.4 529.2L885.3 536.1L886.2 542.3L885.5 549.1L882.2 554.1 M848.2 514.2L855.3 518.6L859.8 520.9 M858.1 509.2L854.8 515.9 M863.1 512.5L860 518.8L859 520.9 M843.2 521.7L849.8 518.4L854.8 522.8L854.2 528.1L848.7 532.2L846.5 533.3 M868.1 515.9L864.4 522.1L860.6 528.4L856.9 534.1L853.1 539.1 M872.2 522.5L869.1 528.1L865.6 533.8L860.6 539.1L858.1 540.8 M876.4 525.8L873.1 532.5L869.4 537.5L863.1 542.4 M844.8 530.8L851 534.5L856.4 539.1L863.1 542.4L867.5 549.1L871.5 554L873.1 555.7 M836.5 529.2L831.5 534.1L826.9 538.8L822.4 543.3L816.9 547.8L812.7 552.7L811.6 556.6 M834 525.8L829.7 530.8L825.6 535.8L821.6 540.8 M822.4 543.3L828.2 545.8L831.5 546.6 M813.3 550.8L819.9 554.9L826.6 558.2L832.4 555.7 M838.2 539.1L843.2 545.5L848.7 547.2L855.3 544.4L859.8 543.3 M846.5 548.3L849.8 554.9L853.5 560.5L854.8 562.4 M851.5 547.4L854.8 554.1L858.5 559.6L859.8 561.5 M856.5 545.8L860.6 552.4L864.8 559.1 M861.4 544.1L865.6 550.8L869.8 556.6 M836.5 552.4L844 549.5L846.5 548.3 M854.8 563.2L861.4 559.9L867.7 557.4L874 554.9L880.5 552.8L887.2 555.7L881.2 560.4L874.7 562.4L868.8 564.4L862.6 566.3L856.5 565.3L854.8 563.2 M878.1 525L879.7 530.8L879.1 537L878.5 543.2L878.6 549.3L879.7 553.2 M884.7 525L890.7 522.5L896.6 520.1L902.4 517.6L908 514.8L912.7 514.2L915.8 520L912.9 525L908 518.4L906.3 515.9 M885.5 529.2L892.4 526.6L899 524.5L905.5 522.5 M886.4 535L892.3 533L898.2 531L904.1 529.4L909.6 525.8 M886.4 540.8L892.2 539.1L898 537.5L903.8 535L909.6 532.5 M903 519.2L906.3 525.8L908 529.2 M881.4 534.1L886.4 535" fill="none" stroke="#b3b3b9" stroke-width="1.300" stroke-dasharray="1.350 1.300" stroke-linejoin="round"/>
<path d="M1013.7 662.3L1019.9 668.5L1024.1 678.9L1034.5 689.3L1049 698.6L1066.6 705.9L1071.8 693.4L1080.1 678.9L1081.2 668.5L1080.1 659.2L1090.5 656L1105 649.8L1117.5 640.5L1127.9 634.3L1136.2 632.2L1148 633.2 M1046.9 667.5L1053.1 668.9L1067.7 665.4L1080.1 660.2 M1066.6 705.9L1059.4 718.3L1042.8 737L1024.1 759.8L1005.4 782.7L992.9 797.2L982.6 809.7 M749 648.8L749 676.8L758.4 679.9L766.7 687.2L769.8 699.6L775 707.9L785.4 713.1L797.8 711.1L810.3 707.9L818.6 712.1L823.8 721.4L824.8 730.8L812.3 743.2L798.9 753.6L799.9 758.8L813.4 760.9L815.5 768.1L812.3 780.6L814.4 791L822.7 802.4L831 804.5L851.8 800.3L876.7 800.3L903.7 804.5L930.7 807.6L947.3 797.2L959.7 788.9L968 787.9L976.3 793L981.5 805.5L982.6 820L985.7 830.4L988.8 844.9 M748 786.8L754.2 776.4L760.5 770.2L772.9 764L787.4 766.1L802 772.3L802.4 780.6L808.2 788.9L816.5 799.3L822.7 804.5L837.3 802.4 M930.7 807.6L932.7 813.8L947.3 818L955.6 820L959.7 828.3L968 826.3L976.3 823.1 M955.6 820L952.5 809.7L957.7 799.3L963.9 793L968 794.1L966 805.5L968 815.9L974.3 822.1 M831 804.5L855.9 802.4L880.8 803L905.8 807.2L931.7 810.7 M961.8 889.3L966 889.3L968 893.4L978.4 900.7L992.9 900.7L1017.8 898.6L1042.8 894.4L1063.5 889.3L1082.2 884.1L1092.6 874.7L1100.9 869.5L1109.2 872.7L1121.6 883L1134.1 893.4L1148 906.9L1151.9 911.4L1176.8 932.1L1193.4 930L1210 919.7L1226.6 913.4L1237 898.9L1226.6 874L1228.7 857.4L1249.5 834.9L1255.7 826.6L1256.7 814.2L1257.8 801.7L1253.6 793.4L1259.8 785.1L1260.9 773.7L1253.6 766.4L1243.2 761.3L1234.9 751.9L1229.7 741.5L1228.7 733.2L1222.5 728L1220.4 719.7L1212.1 714.5L1203.8 706.2L1202.8 696.9L1191.3 686.5L1183 677.2L1181 666.8L1191.3 661.6L1203.8 655.4L1206.9 646L1211.1 636.7L1214.2 628.4L1212.1 624.3L1183 627.4L1164.3 629.4L1160.2 634.6L1157.1 631.5L1157.1 626.3L1162.3 622.2L1176.8 615.9L1191.3 608.7L1207.9 601.4L1224.5 596.2L1241.2 590 M982.6 800L983.6 812.5L986.7 820.8L990.9 829.1L997.1 837.4L998.1 845.7L986.7 854L978.4 860.2L976.3 866.4L986.7 874.7L992.9 883L994 893.4L991.9 899.6 M921.3 894.4L934.8 893.4L943.1 893.4L951.4 887.2L955.6 882L956.6 872.7L959.7 864.3L966 858.1L974.3 854 M921.3 893.4L928.6 883L939 872.7L949.3 864.3L957.7 858.1L966 849.8L970.1 846.7 M1100 652.3L1116.6 639.8L1131.1 632.6L1141.5 633.6L1149.8 638.8L1158.1 641.9 M1154 650.2L1157.1 651.9L1162.3 651.2 M732 624.9L742.4 635.3L748.6 649.8L748.6 678.9L746.5 724.5L740.3 766.1L729.9 791L717.5 811.7L719.6 832.5L732 842.9L736.2 849.1L742.4 842.9L748.6 832.5L752.8 815.9 M1151 501.8L1143.8 503.3L1136.5 513.5L1127.7 523.7L1120.5 533.1L1120.5 536.8L1126.3 542.6L1130.7 551.3L1136.5 557.2L1145.2 563L1151 570.3L1156.9 573.2L1160.5 572.9 M1156.9 504.8L1165.6 513.5L1180.2 522.2L1194.7 532.4L1209.3 541.2L1223.8 551.3L1238.4 561.5L1253 570.3L1265.3 576.8L1264.6 580.5L1253 584.8L1238.4 591.4L1223.8 596.5L1209.3 600.9L1194.7 605.2L1180.2 611L1165.6 618.3L1157.6 624.1L1156.9 630L1159.8 634.3 M1158.3 632.9L1165.6 628.5L1180.2 627.1L1194.7 625.6L1209.3 624.4L1214.4 625.6L1214.4 631.4L1209.3 640.2L1206.4 652 M1098.6 652L1107.4 644.5L1119 636.5L1130.7 632.2L1140.9 632.9L1148.1 637.3L1154 643.1L1159.8 645.3" fill="none" stroke="#efe6a6" stroke-width="2.400" stroke-linejoin="round" stroke-linecap="round"/>
<path d="M1013.7 662.3L1019.9 668.5L1024.1 678.9L1034.5 689.3L1049 698.6L1066.6 705.9L1071.8 693.4L1080.1 678.9L1081.2 668.5L1080.1 659.2L1090.5 656L1105 649.8L1117.5 640.5L1127.9 634.3L1136.2 632.2L1148 633.2 M1046.9 667.5L1053.1 668.9L1067.7 665.4L1080.1 660.2 M1066.6 705.9L1059.4 718.3L1042.8 737L1024.1 759.8L1005.4 782.7L992.9 797.2L982.6 809.7 M749 648.8L749 676.8L758.4 679.9L766.7 687.2L769.8 699.6L775 707.9L785.4 713.1L797.8 711.1L810.3 707.9L818.6 712.1L823.8 721.4L824.8 730.8L812.3 743.2L798.9 753.6L799.9 758.8L813.4 760.9L815.5 768.1L812.3 780.6L814.4 791L822.7 802.4L831 804.5L851.8 800.3L876.7 800.3L903.7 804.5L930.7 807.6L947.3 797.2L959.7 788.9L968 787.9L976.3 793L981.5 805.5L982.6 820L985.7 830.4L988.8 844.9 M748 786.8L754.2 776.4L760.5 770.2L772.9 764L787.4 766.1L802 772.3L802.4 780.6L808.2 788.9L816.5 799.3L822.7 804.5L837.3 802.4 M930.7 807.6L932.7 813.8L947.3 818L955.6 820L959.7 828.3L968 826.3L976.3 823.1 M955.6 820L952.5 809.7L957.7 799.3L963.9 793L968 794.1L966 805.5L968 815.9L974.3 822.1 M831 804.5L855.9 802.4L880.8 803L905.8 807.2L931.7 810.7 M961.8 889.3L966 889.3L968 893.4L978.4 900.7L992.9 900.7L1017.8 898.6L1042.8 894.4L1063.5 889.3L1082.2 884.1L1092.6 874.7L1100.9 869.5L1109.2 872.7L1121.6 883L1134.1 893.4L1148 906.9L1151.9 911.4L1176.8 932.1L1193.4 930L1210 919.7L1226.6 913.4L1237 898.9L1226.6 874L1228.7 857.4L1249.5 834.9L1255.7 826.6L1256.7 814.2L1257.8 801.7L1253.6 793.4L1259.8 785.1L1260.9 773.7L1253.6 766.4L1243.2 761.3L1234.9 751.9L1229.7 741.5L1228.7 733.2L1222.5 728L1220.4 719.7L1212.1 714.5L1203.8 706.2L1202.8 696.9L1191.3 686.5L1183 677.2L1181 666.8L1191.3 661.6L1203.8 655.4L1206.9 646L1211.1 636.7L1214.2 628.4L1212.1 624.3L1183 627.4L1164.3 629.4L1160.2 634.6L1157.1 631.5L1157.1 626.3L1162.3 622.2L1176.8 615.9L1191.3 608.7L1207.9 601.4L1224.5 596.2L1241.2 590 M982.6 800L983.6 812.5L986.7 820.8L990.9 829.1L997.1 837.4L998.1 845.7L986.7 854L978.4 860.2L976.3 866.4L986.7 874.7L992.9 883L994 893.4L991.9 899.6 M921.3 894.4L934.8 893.4L943.1 893.4L951.4 887.2L955.6 882L956.6 872.7L959.7 864.3L966 858.1L974.3 854 M921.3 893.4L928.6 883L939 872.7L949.3 864.3L957.7 858.1L966 849.8L970.1 846.7 M1100 652.3L1116.6 639.8L1131.1 632.6L1141.5 633.6L1149.8 638.8L1158.1 641.9 M1154 650.2L1157.1 651.9L1162.3 651.2 M732 624.9L742.4 635.3L748.6 649.8L748.6 678.9L746.5 724.5L740.3 766.1L729.9 791L717.5 811.7L719.6 832.5L732 842.9L736.2 849.1L742.4 842.9L748.6 832.5L752.8 815.9 M1151 501.8L1143.8 503.3L1136.5 513.5L1127.7 523.7L1120.5 533.1L1120.5 536.8L1126.3 542.6L1130.7 551.3L1136.5 557.2L1145.2 563L1151 570.3L1156.9 573.2L1160.5 572.9 M1156.9 504.8L1165.6 513.5L1180.2 522.2L1194.7 532.4L1209.3 541.2L1223.8 551.3L1238.4 561.5L1253 570.3L1265.3 576.8L1264.6 580.5L1253 584.8L1238.4 591.4L1223.8 596.5L1209.3 600.9L1194.7 605.2L1180.2 611L1165.6 618.3L1157.6 624.1L1156.9 630L1159.8 634.3 M1158.3 632.9L1165.6 628.5L1180.2 627.1L1194.7 625.6L1209.3 624.4L1214.4 625.6L1214.4 631.4L1209.3 640.2L1206.4 652 M1098.6 652L1107.4 644.5L1119 636.5L1130.7 632.2L1140.9 632.9L1148.1 637.3L1154 643.1L1159.8 645.3" fill="none" stroke="#c9c0c0" stroke-width="1.300" stroke-dasharray="1.300 1.400" stroke-linejoin="round"/>
<path d="M748 644.6L760.5 643.6L779.1 646.7L797.8 648.8L806.1 646.7L820.7 634.3L837.3 622.8L849.7 615.6L855.9 602.1L858 600 M825.8 730.8L837.3 716.2L849.7 699.6L864.2 683L880.8 666.4L901.6 648.8L918.2 636.3L933.4 627L947.3 637.4L963.9 642.6L982.6 646.7L999.2 652.9L1013.7 662.3" fill="none" stroke="#d9c68c" stroke-width="3" stroke-dasharray="9 2.500" stroke-linejoin="round"/>
<path d="M748 644.6L760.5 643.6L779.1 646.7L797.8 648.8L806.1 646.7L820.7 634.3L837.3 622.8L849.7 615.6L855.9 602.1L858 600 M825.8 730.8L837.3 716.2L849.7 699.6L864.2 683L880.8 666.4L901.6 648.8L918.2 636.3L933.4 627L947.3 637.4L963.9 642.6L982.6 646.7L999.2 652.9L1013.7 662.3" fill="none" stroke="#f2a13c" stroke-width=".6" stroke-linejoin="round"/>
<path d="M863.9 590.7L963.5 507.6L967.7 505.5L1007 504.5 M863.9 591.1L857.7 599L852.5 609.3L845.2 619.7L834.8 626.1" fill="none" stroke="#d9c68c" stroke-width="3" stroke-dasharray="9 2.500"/>
<path d="M912 302.8L921.6 308.7L929 302.8 M888.3 322.6L898 329.2 M889.2 323.6L901.2 331.9 M887.5 323.8L878.4 335L882.1 337.5 M873 338.3L887.1 348.3 M888.3 324.4L878 334.4L888.8 344.4L897.5 336.9 M869.6 343.7L863.8 348.7L868.4 352.5L863 356.6 M882.1 354.1L872.1 363.3L868.8 360.8 M873 338.1L885.4 348.9 M882.5 353.5L871.3 364.3L868 361" fill="none" stroke="#cda5f5" stroke-width="3.600" stroke-linejoin="miter"/>
<path d="M864.5 185.8l2.8 2.8m0 -2.8l-2.8 2.8 M863.9 186.8l3.5 3.5m0 -3.5l-3.5 3.5 M855.7 187.5l2.5 2.5m0 -2.5l-2.5 2.5 M857.0 184.9l4.7 4.7m0 -4.7l-4.7 4.7 M872.6 190.2l2.6 2.6m0 -2.6l-2.6 2.6 M864.6 184.1l4.7 4.7m0 -4.7l-4.7 4.7 M865.4 192.4l2.3 2.3m0 -2.3l-2.3 2.3 M864.2 184.8l2.7 2.7m0 -2.7l-2.7 2.7 M863.9 190.7l2.6 2.6m0 -2.6l-2.6 2.6 M855.9 186.8l4.3 4.3m0 -4.3l-4.3 4.3 M869.8 190.4l5.1 5.1m0 -5.1l-5.1 5.1 M861.3 182.9l4.7 4.7m0 -4.7l-4.7 4.7 M868.7 191.6l2.3 2.3m0 -2.3l-2.3 2.3 M864.5 184.9l2.3 2.3m0 -2.3l-2.3 2.3 M854.0 190.3l3.8 3.8m0 -3.8l-3.8 3.8 M870.1 193.3l2.2 2.2m0 -2.2l-2.2 2.2 M867.4 183.3l4.4 4.4m0 -4.4l-4.4 4.4 M869.7 187.6l2.7 2.7m0 -2.7l-2.7 2.7 M853.5 189.1l4.5 4.5m0 -4.5l-4.5 4.5 M855.9 193.2l2.1 2.1m0 -2.1l-2.1 2.1 M860.6 188.9l3.1 3.1m0 -3.1l-3.1 3.1 M865.0 187.7l5.2 5.2m0 -5.2l-5.2 5.2 M870.0 186.5l2.2 2.2m0 -2.2l-2.2 2.2 M854.9 190.1l2.3 2.3m0 -2.3l-2.3 2.3 M860.9 189.8l4.7 4.7m0 -4.7l-4.7 4.7 M870.3 185.3l4.4 4.4m0 -4.4l-4.4 4.4 M860.2 187.9l3.5 3.5m0 -3.5l-3.5 3.5 M863.7 184.2l2.1 2.1m0 -2.1l-2.1 2.1 M864.7 188.0l5.0 5.0m0 -5.0l-5.0 5.0 M867.2 191.1l3.5 3.5m0 -3.5l-3.5 3.5 M1009.0 185.3l2.8 2.8m0 -2.8l-2.8 2.8 M1007.5 185.0l2.5 2.5m0 -2.5l-2.5 2.5 M1013.9 188.9l2.7 2.7m0 -2.7l-2.7 2.7 M1001.6 186.3l5.1 5.1m0 -5.1l-5.1 5.1 M1005.4 180.3l3.6 3.6m0 -3.6l-3.6 3.6 M1006.6 195.9l2.3 2.3m0 -2.3l-2.3 2.3 M1004.3 184.1l2.9 2.9m0 -2.9l-2.9 2.9 M1003.6 188.1l3.9 3.9m0 -3.9l-3.9 3.9 M1008.1 188.2l2.5 2.5m0 -2.5l-2.5 2.5 M1012.2 191.6l3.6 3.6m0 -3.6l-3.6 3.6 M1004.6 180.5l2.5 2.5m0 -2.5l-2.5 2.5 M1010.9 185.5l3.5 3.5m0 -3.5l-3.5 3.5 M1000.4 187.2l4.5 4.5m0 -4.5l-4.5 4.5 M1009.0 194.9l3.4 3.4m0 -3.4l-3.4 3.4 M1006.1 194.9l4.8 4.8m0 -4.8l-4.8 4.8 M1008.5 182.5l4.9 4.9m0 -4.9l-4.9 4.9 M1007.4 177.9l4.4 4.4m0 -4.4l-4.4 4.4 M1011.1 186.7l4.4 4.4m0 -4.4l-4.4 4.4 M1007.7 180.7l3.6 3.6m0 -3.6l-3.6 3.6 M1001.6 192.2l3.2 3.2m0 -3.2l-3.2 3.2 M1006.3 180.0l4.3 4.3m0 -4.3l-4.3 4.3 M1005.7 189.2l4.2 4.2m0 -4.2l-4.2 4.2 M1008.8 190.9l4.5 4.5m0 -4.5l-4.5 4.5 M1012.9 189.6l3.9 3.9m0 -3.9l-3.9 3.9 M1002.1 185.0l2.2 2.2m0 -2.2l-2.2 2.2 M1012.4 188.0l3.9 3.9m0 -3.9l-3.9 3.9 M1003.0 181.2l2.9 2.9m0 -2.9l-2.9 2.9 M1011.1 195.3l2.2 2.2m0 -2.2l-2.2 2.2 M1000.5 185.7l5.1 5.1m0 -5.1l-5.1 5.1 M1012.4 191.7l2.3 2.3m0 -2.3l-2.3 2.3 M1000.9 188.6l4.7 4.7m0 -4.7l-4.7 4.7 M1013.1 189.9l2.5 2.5m0 -2.5l-2.5 2.5 M1000.4 191.6l4.7 4.7m0 -4.7l-4.7 4.7 M1007.9 188.1l2.1 2.1m0 -2.1l-2.1 2.1 M814.5 313.0l4.5 4.5m0 -4.5l-4.5 4.5 M816.6 308.2l5.0 5.0m0 -5.0l-5.0 5.0 M809.8 310.0l3.7 3.7m0 -3.7l-3.7 3.7 M813.6 313.1l3.8 3.8m0 -3.8l-3.8 3.8 M819.3 314.2l4.3 4.3m0 -4.3l-4.3 4.3 M817.0 319.1l3.7 3.7m0 -3.7l-3.7 3.7 M815.3 310.9l3.5 3.5m0 -3.5l-3.5 3.5 M816.2 319.0l5.0 5.0m0 -5.0l-5.0 5.0 M809.7 318.4l3.8 3.8m0 -3.8l-3.8 3.8 M817.4 320.8l2.7 2.7m0 -2.7l-2.7 2.7 M809.0 310.5l3.0 3.0m0 -3.0l-3.0 3.0 M812.2 311.0l4.1 4.1m0 -4.1l-4.1 4.1 M816.3 319.0l4.5 4.5m0 -4.5l-4.5 4.5 M816.2 319.3l2.7 2.7m0 -2.7l-2.7 2.7 M824.3 337.1l4.7 4.7m0 -4.7l-4.7 4.7 M820.7 333.1l3.0 3.0m0 -3.0l-3.0 3.0 M823.3 339.3l3.5 3.5m0 -3.5l-3.5 3.5 M822.6 331.1l2.6 2.6m0 -2.6l-2.6 2.6 M825.3 333.8l3.3 3.3m0 -3.3l-3.3 3.3 M819.6 332.6l4.2 4.2m0 -4.2l-4.2 4.2 M825.3 329.4l4.2 4.2m0 -4.2l-4.2 4.2 M824.0 329.4l3.5 3.5m0 -3.5l-3.5 3.5 M948.9 275.7l3.2 3.2m0 -3.2l-3.2 3.2 M946.9 275.1l4.4 4.4m0 -4.4l-4.4 4.4 M947.8 277.2l5.0 5.0m0 -5.0l-5.0 5.0 M941.8 278.5l4.2 4.2m0 -4.2l-4.2 4.2 M946.9 277.8l3.1 3.1m0 -3.1l-3.1 3.1 M957.1 305.5l3.9 3.9m0 -3.9l-3.9 3.9 M954.9 304.3l2.5 2.5m0 -2.5l-2.5 2.5 M945.9 308.9l2.5 2.5m0 -2.5l-2.5 2.5 M948.1 306.9l3.1 3.1m0 -3.1l-3.1 3.1 M957.7 310.0l2.8 2.8m0 -2.8l-2.8 2.8 M952.5 304.2l3.4 3.4m0 -3.4l-3.4 3.4 M957.0 307.2l3.6 3.6m0 -3.6l-3.6 3.6 M948.6 307.4l4.0 4.0m0 -4.0l-4.0 4.0 M958.3 307.8l3.5 3.5m0 -3.5l-3.5 3.5 M1028.3 281.5l2.1 2.1m0 -2.1l-2.1 2.1 M1032.9 284.8l3.6 3.6m0 -3.6l-3.6 3.6 M1028.4 288.2l4.8 4.8m0 -4.8l-4.8 4.8 M1026.5 283.3l3.9 3.9m0 -3.9l-3.9 3.9 M1029.7 282.6l4.1 4.1m0 -4.1l-4.1 4.1 M1027.0 281.5l2.5 2.5m0 -2.5l-2.5 2.5 M1031.5 278.6l2.9 2.9m0 -2.9l-2.9 2.9 M754.7 392.3l3.7 3.7m0 -3.7l-3.7 3.7 M755.0 393.4l4.0 4.0m0 -4.0l-4.0 4.0 M753.9 390.4l2.8 2.8m0 -2.8l-2.8 2.8 M752.4 392.1l3.2 3.2m0 -3.2l-3.2 3.2 M836.3 450.5l3.2 3.2m0 -3.2l-3.2 3.2 M846.2 452.3l2.9 2.9m0 -2.9l-2.9 2.9 M843.3 433.0l4.4 4.4m0 -4.4l-4.4 4.4 M837.9 453.1l4.4 4.4m0 -4.4l-4.4 4.4 M843.1 457.9l2.1 2.1m0 -2.1l-2.1 2.1 M847.4 443.2l4.5 4.5m0 -4.5l-4.5 4.5 M834.7 438.7l3.4 3.4m0 -3.4l-3.4 3.4 M844.3 448.4l4.4 4.4m0 -4.4l-4.4 4.4 M845.6 445.0l3.6 3.6m0 -3.6l-3.6 3.6 M842.7 439.0l2.8 2.8m0 -2.8l-2.8 2.8 M841.8 441.4l3.1 3.1m0 -3.1l-3.1 3.1 M835.3 439.8l5.0 5.0m0 -5.0l-5.0 5.0 M836.1 447.0l2.6 2.6m0 -2.6l-2.6 2.6 M842.9 443.7l2.1 2.1m0 -2.1l-2.1 2.1 M836.3 454.7l2.8 2.8m0 -2.8l-2.8 2.8 M839.0 446.7l2.9 2.9m0 -2.9l-2.9 2.9 M917.9 523.4l2.3 2.3m0 -2.3l-2.3 2.3 M916.8 524.1l2.4 2.4m0 -2.4l-2.4 2.4 M910.1 528.6l2.6 2.6m0 -2.6l-2.6 2.6 M912.6 519.0l4.9 4.9m0 -4.9l-4.9 4.9 M913.7 520.3l2.4 2.4m0 -2.4l-2.4 2.4 M911.2 519.9l3.7 3.7m0 -3.7l-3.7 3.7 M915.7 524.9l3.4 3.4m0 -3.4l-3.4 3.4 M752.4 395.0l2.6 2.6m0 -2.6l-2.6 2.6 M755.8 392.4l5.2 5.2m0 -5.2l-5.2 5.2 M751.3 393.0l4.3 4.3m0 -4.3l-4.3 4.3 M753.6 391.5l2.1 2.1m0 -2.1l-2.1 2.1" fill="none" stroke="#ff0000" stroke-width=".9" opacity=".8"/>
<path d="M782.5 568.5l8 8m0 -8l-8 8 M841.2 591.8l8 8m0 -8l-8 8 M859.9 586.7l8 8m0 -8l-8 8 M959.5 503.6l8 8m0 -8l-8 8 M963.7 501.5l8 8m0 -8l-8 8 M1003.0 500.5l8 8m0 -8l-8 8 M1041.5 499.3l8 8m0 -8l-8 8 M1147.8 594.7l8 8m0 -8l-8 8 M1121.6 620.1l8 8m0 -8l-8 8 M1132.5 627.4l8 8m0 -8l-8 8 M1184.9 577.9l8 8m0 -8l-8 8 M1211.1 594.7l8 8m0 -8l-8 8 M1234.4 583.7l8 8m0 -8l-8 8 M1202.4 560.5l8 8m0 -8l-8 8 M1142.7 522.6l8 8m0 -8l-8 8 M1155.5 508.5l8 8m0 -8l-8 8 M1153.3 499.9l8 8m0 -8l-8 8 M1161.6 505.7l8 8m0 -8l-8 8 M1187.6 523.3l8 8m0 -8l-8 8 M1199.0 531.6l8 8m0 -8l-8 8 M1223.9 544.1l8 8m0 -8l-8 8 M1254.0 554.5l8 8m0 -8l-8 8 M1260.2 557.0l8 8m0 -8l-8 8 M1287.2 562.2l8 8m0 -8l-8 8 M1298.6 564.9l8 8m0 -8l-8 8 M1325.6 566.9l8 8m0 -8l-8 8 M1414.9 570.5l8 8m0 -8l-8 8 M1465.7 566.3l8 8m0 -8l-8 8 M1481.3 573.2l8 8m0 -8l-8 8 M1487.5 578.8l8 8m0 -8l-8 8 M1505.2 597.0l8 8m0 -8l-8 8 M1511.4 601.2l8 8m0 -8l-8 8 M1517.6 603.3l8 8m0 -8l-8 8 M1524.9 602.2l8 8m0 -8l-8 8 M1536.3 598.1l8 8m0 -8l-8 8 M1550.6 595.0l8 8m0 -8l-8 8 M1569.3 601.0l8 8m0 -8l-8 8 M1539.0 625.0l8 8m0 -8l-8 8 M1527.0 677.0l8 8m0 -8l-8 8 M1594.2 739.6l8 8m0 -8l-8 8 M1581.7 761.0l8 8m0 -8l-8 8 M1547.3 799.4l8 8m0 -8l-8 8 M1526.5 803.6l8 8m0 -8l-8 8 M1517.4 827.0l8 8m0 -8l-8 8 M1517.4 843.0l8 8m0 -8l-8 8 M1510.3 858.8l8 8m0 -8l-8 8 M1412.8 880.4l8 8m0 -8l-8 8 M1333.5 899.0l8 8m0 -8l-8 8 M1321.0 914.8l8 8m0 -8l-8 8 M1327.7 953.9l8 8m0 -8l-8 8 M1293.2 977.0l8 8m0 -8l-8 8 M1274.5 960.5l8 8m0 -8l-8 8 M1206.0 985.0l8 8m0 -8l-8 8 M1170.7 997.9l8 8m0 -8l-8 8 M1072.0 974.1l8 8m0 -8l-8 8 M1061.6 970.4l8 8m0 -8l-8 8 M1051.2 964.6l8 8m0 -8l-8 8 M1043.9 974.5l8 8m0 -8l-8 8 M1038.8 968.7l8 8m0 -8l-8 8 M1020.1 960.0l8 8m0 -8l-8 8 M990.0 962.5l8 8m0 -8l-8 8 M977.5 963.7l8 8m0 -8l-8 8 M968.2 963.1l8 8m0 -8l-8 8 M957.8 960.0l8 8m0 -8l-8 8 M936.0 947.5l8 8m0 -8l-8 8 M906.9 925.7l8 8m0 -8l-8 8 M901.8 916.4l8 8m0 -8l-8 8 M901.8 901.9l8 8m0 -8l-8 8 M910.1 880.1l8 8m0 -8l-8 8 M933.9 863.5l8 8m0 -8l-8 8 M947.4 851.0l8 8m0 -8l-8 8 M930.8 840.6l8 8m0 -8l-8 8 M909.0 827.6l8 8m0 -8l-8 8 M855.1 813.6l8 8m0 -8l-8 8 M833.7 815.7l8 8m0 -8l-8 8 M819.8 822.6l8 8m0 -8l-8 8 M792.2 822.6l8 8m0 -8l-8 8 M783.0 808.9l8 8m0 -8l-8 8 M765.8 814.3l8 8m0 -8l-8 8 M751.3 817.8l8 8m0 -8l-8 8 M751.3 835.4l8 8m0 -8l-8 8 M694.8 891.5l8 8m0 -8l-8 8 M656.4 911.2l8 8m0 -8l-8 8 M636.7 918.5l8 8m0 -8l-8 8 M628.4 918.9l8 8m0 -8l-8 8 M620.1 916.4l8 8m0 -8l-8 8 M587.9 903.9l8 8m0 -8l-8 8 M578.6 899.8l8 8m0 -8l-8 8 M571.3 887.3l8 8m0 -8l-8 8 M568.6 878.0l8 8m0 -8l-8 8 M569.2 868.7l8 8m0 -8l-8 8 M573.4 848.9l8 8m0 -8l-8 8 M580.6 833.4l8 8m0 -8l-8 8 M585.8 822.3l8 8m0 -8l-8 8 M591.0 811.9l8 8m0 -8l-8 8 M593.1 801.5l8 8m0 -8l-8 8 M594.1 791.1l8 8m0 -8l-8 8 M593.1 782.8l8 8m0 -8l-8 8 M590.0 773.5l8 8m0 -8l-8 8 M584.8 764.1l8 8m0 -8l-8 8 M577.5 754.2l8 8m0 -8l-8 8 M615.9 716.4l8 8m0 -8l-8 8 M631.5 697.7l8 8m0 -8l-8 8 M653.3 673.8l8 8m0 -8l-8 8 M677.2 647.5l8 8m0 -8l-8 8 M689.6 644.2l8 8m0 -8l-8 8 M709.3 624.0l8 8m0 -8l-8 8 M748.5 622.6l8 8m0 -8l-8 8 M752.5 613.3l8 8m0 -8l-8 8 M706.2 623.0l8 8m0 -8l-8 8 M710.4 622.6l8 8m0 -8l-8 8 M714.5 622.4l8 8m0 -8l-8 8 M718.7 622.4l8 8m0 -8l-8 8 M722.8 622.4l8 8m0 -8l-8 8 M727.0 622.2l8 8m0 -8l-8 8 M730.1 619.9l8 8m0 -8l-8 8" fill="none" stroke="#ff0000" stroke-width="1.100" opacity="0.6"/>
<path d="M1484.3 174.2l8 8m0 -8l-8 8 M1489.0 164.0l8 8m0 -8l-8 8 M1489.4 161.1l8 8m0 -8l-8 8 M1491.0 156.5l8 8m0 -8l-8 8 M1496.8 149.3l8 8m0 -8l-8 8 M1502.2 144.6l8 8m0 -8l-8 8 M1503.4 143.4l8 8m0 -8l-8 8 M1512.9 136.1l8 8m0 -8l-8 8 M1524.1 141.1l8 8m0 -8l-8 8 M1536.9 140.1l8 8m0 -8l-8 8 M1540.1 140.1l8 8m0 -8l-8 8 M1551.8 141.2l8 8m0 -8l-8 8 M1563.8 142.6l8 8m0 -8l-8 8 M1571.5 146.1l8 8m0 -8l-8 8 M1578.0 147.1l8 8m0 -8l-8 8 M1586.5 153.0l8 8m0 -8l-8 8 M1587.9 153.9l8 8m0 -8l-8 8 M1593.3 161.6l8 8m0 -8l-8 8 M1595.4 162.9l8 8m0 -8l-8 8 M1624.4 173.5l8 8m0 -8l-8 8 M1627.8 175.9l8 8m0 -8l-8 8 M1634.7 177.9l8 8m0 -8l-8 8 M1642.6 175.6l8 8m0 -8l-8 8 M1650.4 173.1l8 8m0 -8l-8 8 M1660.1 169.4l8 8m0 -8l-8 8 M1669.4 168.9l8 8m0 -8l-8 8 M1679.6 172.5l8 8m0 -8l-8 8 M1682.6 172.3l8 8m0 -8l-8 8 M1685.2 175.6l8 8m0 -8l-8 8 M1691.2 179.9l8 8m0 -8l-8 8 M1700.1 186.1l8 8m0 -8l-8 8 M1707.7 192.7l8 8m0 -8l-8 8 M1709.2 194.3l8 8m0 -8l-8 8 M1722.5 194.1l8 8m0 -8l-8 8 M1725.8 196.0l8 8m0 -8l-8 8 M1732.3 199.4l8 8m0 -8l-8 8 M1737.0 203.2l8 8m0 -8l-8 8 M1736.6 213.3l8 8m0 -8l-8 8 M1733.4 219.5l8 8m0 -8l-8 8 M1733.9 224.2l8 8m0 -8l-8 8 M1737.0 232.6l8 8m0 -8l-8 8 M1727.8 236.6l8 8m0 -8l-8 8 M1726.1 246.1l8 8m0 -8l-8 8 M1729.0 251.4l8 8m0 -8l-8 8 M1732.7 257.7l8 8m0 -8l-8 8 M1728.9 264.5l8 8m0 -8l-8 8 M1727.7 271.9l8 8m0 -8l-8 8 M1723.9 282.3l8 8m0 -8l-8 8 M1723.1 288.6l8 8m0 -8l-8 8 M1721.8 292.7l8 8m0 -8l-8 8 M1724.5 294.3l8 8m0 -8l-8 8 M1728.9 301.3l8 8m0 -8l-8 8 M1703.1 370.4l8 8m0 -8l-8 8 M1700.1 378.2l8 8m0 -8l-8 8 M1699.8 383.0l8 8m0 -8l-8 8 M1696.9 370.8l8 8m0 -8l-8 8 M1695.5 366.1l8 8m0 -8l-8 8 M1694.2 356.0l8 8m0 -8l-8 8 M1693.9 349.8l8 8m0 -8l-8 8 M1691.6 342.1l8 8m0 -8l-8 8 M1691.7 330.1l8 8m0 -8l-8 8 M1689.9 324.5l8 8m0 -8l-8 8 M1689.4 323.0l8 8m0 -8l-8 8 M1690.1 314.0l8 8m0 -8l-8 8 M1690.7 296.1l8 8m0 -8l-8 8 M1690.4 286.5l8 8m0 -8l-8 8 M1684.0 285.8l8 8m0 -8l-8 8 M1673.2 287.5l8 8m0 -8l-8 8 M1646.6 293.0l8 8m0 -8l-8 8 M1628.3 297.0l8 8m0 -8l-8 8 M1593.9 301.0l8 8m0 -8l-8 8 M1594.0 355.3l8 8m0 -8l-8 8 M1545.7 344.0l8 8m0 -8l-8 8 M1542.5 350.1l8 8m0 -8l-8 8 M1540.2 358.5l8 8m0 -8l-8 8 M1538.4 368.0l8 8m0 -8l-8 8 M1534.0 374.1l8 8m0 -8l-8 8 M1541.4 373.4l8 8m0 -8l-8 8 M1546.1 375.4l8 8m0 -8l-8 8 M1551.4 377.6l8 8m0 -8l-8 8 M1564.8 377.4l8 8m0 -8l-8 8 M1567.9 379.0l8 8m0 -8l-8 8 M1580.1 380.1l8 8m0 -8l-8 8 M1584.0 379.3l8 8m0 -8l-8 8 M1587.1 380.4l8 8m0 -8l-8 8 M1592.0 376.2l8 8m0 -8l-8 8 M1635.7 323.7l8 8m0 -8l-8 8 M1636.5 321.5l8 8m0 -8l-8 8 M1637.6 314.9l8 8m0 -8l-8 8 M1639.0 308.2l8 8m0 -8l-8 8 M1643.7 305.2l8 8m0 -8l-8 8 M1647.1 304.5l8 8m0 -8l-8 8 M1646.7 309.0l8 8m0 -8l-8 8 M1648.8 313.7l8 8m0 -8l-8 8 M1646.4 321.7l8 8m0 -8l-8 8 M1602.1 383.3l8 8m0 -8l-8 8 M1595.7 388.3l8 8m0 -8l-8 8 M1593.6 387.3l8 8m0 -8l-8 8 M1590.5 383.7l8 8m0 -8l-8 8 M1585.0 383.3l8 8m0 -8l-8 8 M1572.6 382.4l8 8m0 -8l-8 8 M1564.8 382.6l8 8m0 -8l-8 8 M1558.5 383.0l8 8m0 -8l-8 8 M1550.4 381.8l8 8m0 -8l-8 8 M1541.6 382.9l8 8m0 -8l-8 8 M1533.8 380.9l8 8m0 -8l-8 8 M1527.4 377.5l8 8m0 -8l-8 8 M1519.8 370.1l8 8m0 -8l-8 8 M1518.0 368.5l8 8m0 -8l-8 8 M1513.7 362.0l8 8m0 -8l-8 8 M1508.8 355.1l8 8m0 -8l-8 8 M1506.7 354.8l8 8m0 -8l-8 8 M1499.2 349.8l8 8m0 -8l-8 8 M1499.6 354.1l8 8m0 -8l-8 8 M1498.0 368.1l8 8m0 -8l-8 8 M1489.7 366.9l8 8m0 -8l-8 8 M1487.2 365.8l8 8m0 -8l-8 8 M1479.9 361.0l8 8m0 -8l-8 8 M1476.6 358.0l8 8m0 -8l-8 8 M1471.3 356.1l8 8m0 -8l-8 8 M1462.1 351.3l8 8m0 -8l-8 8 M1456.8 347.6l8 8m0 -8l-8 8 M1452.3 344.2l8 8m0 -8l-8 8 M1424.6 327.6l8 8m0 -8l-8 8 M1418.5 323.4l8 8m0 -8l-8 8 M1412.4 317.2l8 8m0 -8l-8 8 M1410.0 314.5l8 8m0 -8l-8 8 M1412.5 304.8l8 8m0 -8l-8 8 M1418.6 305.1l8 8m0 -8l-8 8 M1426.4 307.1l8 8m0 -8l-8 8 M1433.9 306.2l8 8m0 -8l-8 8 M1460.1 309.7l8 8m0 -8l-8 8 M1474.4 311.3l8 8m0 -8l-8 8 M1478.2 304.9l8 8m0 -8l-8 8 M1481.9 295.6l8 8m0 -8l-8 8 M1484.2 292.4l8 8m0 -8l-8 8 M1485.8 288.9l8 8m0 -8l-8 8 M1486.8 285.0l8 8m0 -8l-8 8 M1489.1 281.7l8 8m0 -8l-8 8 M1498.2 276.4l8 8m0 -8l-8 8 M1547.8 274.6l8 8m0 -8l-8 8 M1547.8 270.1l8 8m0 -8l-8 8 M1548.6 263.0l8 8m0 -8l-8 8 M1551.4 236.1l8 8m0 -8l-8 8 M1551.6 222.8l8 8m0 -8l-8 8 M1554.0 213.6l8 8m0 -8l-8 8 M1553.8 209.0l8 8m0 -8l-8 8 M1554.3 206.0l8 8m0 -8l-8 8 M1551.7 207.0l8 8m0 -8l-8 8 M1537.6 209.5l8 8m0 -8l-8 8 M1528.6 216.9l8 8m0 -8l-8 8 M1524.4 217.7l8 8m0 -8l-8 8 M1517.0 207.5l8 8m0 -8l-8 8 M1512.6 202.0l8 8m0 -8l-8 8 M1505.7 197.9l8 8m0 -8l-8 8 M1495.3 194.4l8 8m0 -8l-8 8 M1490.3 191.9l8 8m0 -8l-8 8 M1483.0 187.0l8 8m0 -8l-8 8 M1483.7 181.6l8 8m0 -8l-8 8 M1566.5 195.8l8 8m0 -8l-8 8 M1574.6 191.4l8 8m0 -8l-8 8 M1573.1 196.2l8 8m0 -8l-8 8 M1572.7 201.9l8 8m0 -8l-8 8 M1573.5 208.1l8 8m0 -8l-8 8 M1569.4 201.8l8 8m0 -8l-8 8 M1567.6 198.8l8 8m0 -8l-8 8 M1596.5 222.1l8 8m0 -8l-8 8 M1598.6 225.0l8 8m0 -8l-8 8 M1604.1 228.4l8 8m0 -8l-8 8 M1600.2 234.0l8 8m0 -8l-8 8 M1597.4 230.4l8 8m0 -8l-8 8 M1595.1 228.3l8 8m0 -8l-8 8 M1541.8 165.3l8 8m0 -8l-8 8 M1546.7 168.5l8 8m0 -8l-8 8 M1558.9 173.5l8 8m0 -8l-8 8 M1558.7 173.6l8 8m0 -8l-8 8 M1552.2 171.9l8 8m0 -8l-8 8 M1545.1 166.8l8 8m0 -8l-8 8 M1541.2 166.3l8 8m0 -8l-8 8 M1679.4 204.8l8 8m0 -8l-8 8 M1692.1 207.5l8 8m0 -8l-8 8 M1716.8 213.8l8 8m0 -8l-8 8 M1729.1 215.8l8 8m0 -8l-8 8 M1728.9 217.0l8 8m0 -8l-8 8 M1714.2 213.1l8 8m0 -8l-8 8 M1700.7 209.4l8 8m0 -8l-8 8 M1687.4 206.2l8 8m0 -8l-8 8 M1679.3 205.5l8 8m0 -8l-8 8 M1691.4 193.9l8 8m0 -8l-8 8 M1698.5 195.6l8 8m0 -8l-8 8 M1707.5 195.8l8 8m0 -8l-8 8 M1708.6 196.8l8 8m0 -8l-8 8 M1709.5 198.2l8 8m0 -8l-8 8 M1697.7 195.2l8 8m0 -8l-8 8 M1691.2 194.6l8 8m0 -8l-8 8 M1694.3 255.7l8 8m0 -8l-8 8 M1701.1 252.4l8 8m0 -8l-8 8 M1708.2 248.1l8 8m0 -8l-8 8 M1709.2 246.4l8 8m0 -8l-8 8 M1709.6 247.2l8 8m0 -8l-8 8 M1698.8 254.8l8 8m0 -8l-8 8 M1694.6 256.3l8 8m0 -8l-8 8 M1586.2 193.0l8 8m0 -8l-8 8 M1589.1 202.3l8 8m0 -8l-8 8 M1588.0 201.8l8 8m0 -8l-8 8 M1586.3 193.0l8 8m0 -8l-8 8 M1489.2 174.0l8 8m0 -8l-8 8 M1491.6 175.9l8 8m0 -8l-8 8 M1500.8 176.1l8 8m0 -8l-8 8 M1508.8 178.2l8 8m0 -8l-8 8 M1514.9 182.1l8 8m0 -8l-8 8 M1524.0 183.3l8 8m0 -8l-8 8 M1533.8 182.3l8 8m0 -8l-8 8 M1545.7 178.7l8 8m0 -8l-8 8 M1551.0 178.9l8 8m0 -8l-8 8 M1557.8 177.0l8 8m0 -8l-8 8 M1571.0 181.3l8 8m0 -8l-8 8 M1576.3 183.0l8 8m0 -8l-8 8 M1580.7 183.1l8 8m0 -8l-8 8 M1585.0 187.3l8 8m0 -8l-8 8 M1596.3 190.9l8 8m0 -8l-8 8 M1603.5 195.1l8 8m0 -8l-8 8 M1610.7 200.4l8 8m0 -8l-8 8 M1621.8 207.6l8 8m0 -8l-8 8 M1633.9 209.8l8 8m0 -8l-8 8 M1627.3 176.0l8 8m0 -8l-8 8 M1632.0 181.9l8 8m0 -8l-8 8 M1638.9 193.7l8 8m0 -8l-8 8 M1636.1 195.6l8 8m0 -8l-8 8 M1627.9 203.9l8 8m0 -8l-8 8 M1636.7 212.1l8 8m0 -8l-8 8 M1644.4 214.9l8 8m0 -8l-8 8 M1649.0 218.0l8 8m0 -8l-8 8 M1659.8 224.3l8 8m0 -8l-8 8 M1665.5 224.7l8 8m0 -8l-8 8 M1669.3 224.9l8 8m0 -8l-8 8 M1674.1 222.7l8 8m0 -8l-8 8 M1687.1 224.5l8 8m0 -8l-8 8 M1695.6 225.0l8 8m0 -8l-8 8 M1703.9 225.4l8 8m0 -8l-8 8 M1709.3 224.9l8 8m0 -8l-8 8 M1714.3 225.9l8 8m0 -8l-8 8 M1728.0 230.5l8 8m0 -8l-8 8 M1635.7 212.6l8 8m0 -8l-8 8 M1642.3 211.3l8 8m0 -8l-8 8 M1647.5 206.5l8 8m0 -8l-8 8 M1656.2 204.1l8 8m0 -8l-8 8 M1658.0 202.1l8 8m0 -8l-8 8 M1661.9 209.6l8 8m0 -8l-8 8 M1665.7 213.8l8 8m0 -8l-8 8 M1672.4 207.8l8 8m0 -8l-8 8 M1677.8 200.7l8 8m0 -8l-8 8 M1599.4 233.8l8 8m0 -8l-8 8 M1611.1 237.8l8 8m0 -8l-8 8 M1620.8 243.1l8 8m0 -8l-8 8 M1624.8 243.7l8 8m0 -8l-8 8 M1630.5 246.8l8 8m0 -8l-8 8 M1634.8 253.2l8 8m0 -8l-8 8 M1644.9 261.3l8 8m0 -8l-8 8 M1651.0 266.0l8 8m0 -8l-8 8 M1653.9 266.7l8 8m0 -8l-8 8 M1664.3 270.6l8 8m0 -8l-8 8 M1669.8 271.6l8 8m0 -8l-8 8 M1676.3 272.5l8 8m0 -8l-8 8 M1699.9 219.5l8 8m0 -8l-8 8 M1704.5 227.0l8 8m0 -8l-8 8 M1712.0 239.4l8 8m0 -8l-8 8 M1720.7 244.5l8 8m0 -8l-8 8 M1487.5 187.3l8 8m0 -8l-8 8 M1492.9 188.8l8 8m0 -8l-8 8 M1501.9 195.6l8 8m0 -8l-8 8 M1511.9 200.8l8 8m0 -8l-8 8 M1517.0 198.0l8 8m0 -8l-8 8 M1528.2 195.5l8 8m0 -8l-8 8 M1534.7 193.1l8 8m0 -8l-8 8 M1484.0 293.3l8 8m0 -8l-8 8 M1482.7 303.8l8 8m0 -8l-8 8 M1481.6 309.6l8 8m0 -8l-8 8 M1480.7 315.1l8 8m0 -8l-8 8 M1480.4 323.7l8 8m0 -8l-8 8 M1482.8 337.4l8 8m0 -8l-8 8 M1482.5 340.8l8 8m0 -8l-8 8 M1497.7 305.2l8 8m0 -8l-8 8 M1505.8 304.0l8 8m0 -8l-8 8 M1514.9 305.9l8 8m0 -8l-8 8 M1526.6 303.7l8 8m0 -8l-8 8 M1535.6 303.4l8 8m0 -8l-8 8 M1543.9 304.9l8 8m0 -8l-8 8 M1470.5 322.9l8 8m0 -8l-8 8 M1476.9 324.5l8 8m0 -8l-8 8 M1487.1 329.9l8 8m0 -8l-8 8 M1493.6 333.3l8 8m0 -8l-8 8 M1498.7 336.9l8 8m0 -8l-8 8 M1506.7 344.5l8 8m0 -8l-8 8 M1508.4 347.4l8 8m0 -8l-8 8 M1509.4 347.1l8 8m0 -8l-8 8 M1521.5 338.3l8 8m0 -8l-8 8 M1524.7 334.7l8 8m0 -8l-8 8 M1536.0 330.7l8 8m0 -8l-8 8 M1545.1 330.7l8 8m0 -8l-8 8 M1452.2 340.0l8 8m0 -8l-8 8 M1455.9 344.4l8 8m0 -8l-8 8 M1693.8 300.8l8 8m0 -8l-8 8 M1696.9 301.3l8 8m0 -8l-8 8 M1703.4 298.1l8 8m0 -8l-8 8 M1709.4 295.4l8 8m0 -8l-8 8 M1691.9 342.3l8 8m0 -8l-8 8 M1691.2 346.8l8 8m0 -8l-8 8 M1693.9 351.9l8 8m0 -8l-8 8 M1592.6 376.3l8 8m0 -8l-8 8 M1598.6 369.0l8 8m0 -8l-8 8 M1601.1 363.7l8 8m0 -8l-8 8 M1607.1 358.5l8 8m0 -8l-8 8 M1612.7 351.2l8 8m0 -8l-8 8 M1618.8 343.9l8 8m0 -8l-8 8 M1623.6 336.8l8 8m0 -8l-8 8 M1628.0 332.0l8 8m0 -8l-8 8 M1601.5 382.9l8 8m0 -8l-8 8 M1604.1 380.1l8 8m0 -8l-8 8 M1608.1 375.4l8 8m0 -8l-8 8 M1613.7 366.0l8 8m0 -8l-8 8 M1617.8 360.8l8 8m0 -8l-8 8 M1624.0 355.0l8 8m0 -8l-8 8 M1631.0 345.4l8 8m0 -8l-8 8 M1634.3 339.1l8 8m0 -8l-8 8 M1642.7 327.1l8 8m0 -8l-8 8 M1645.2 323.9l8 8m0 -8l-8 8 M1517.5 368.2l8 8m0 -8l-8 8 M1520.1 369.2l8 8m0 -8l-8 8 M1523.6 375.6l8 8m0 -8l-8 8 M1526.5 377.3l8 8m0 -8l-8 8 M1531.8 380.8l8 8m0 -8l-8 8 M1537.8 382.4l8 8m0 -8l-8 8 M1541.9 382.8l8 8m0 -8l-8 8 M1550.4 383.7l8 8m0 -8l-8 8 M1556.4 382.9l8 8m0 -8l-8 8 M1560.7 381.1l8 8m0 -8l-8 8 M1564.0 382.0l8 8m0 -8l-8 8 M1573.3 382.3l8 8m0 -8l-8 8 M1507.8 342.5l8 8m0 -8l-8 8 M1508.8 346.0l8 8m0 -8l-8 8 M1512.7 356.6l8 8m0 -8l-8 8 M1515.3 361.4l8 8m0 -8l-8 8 M1523.3 166.1l8 8m0 -8l-8 8 M1530.5 151.1l8 8m0 -8l-8 8 M1528.3 150.9l8 8m0 -8l-8 8 M1537.0 155.3l8 8m0 -8l-8 8 M1515.2 156.1l8 8m0 -8l-8 8 M1524.6 166.3l8 8m0 -8l-8 8 M1536.2 153.4l8 8m0 -8l-8 8 M1529.2 150.2l8 8m0 -8l-8 8 M1535.2 161.1l8 8m0 -8l-8 8 M1527.7 152.3l8 8m0 -8l-8 8 M1523.3 166.0l8 8m0 -8l-8 8 M1534.7 156.0l8 8m0 -8l-8 8 M1534.1 163.5l8 8m0 -8l-8 8 M1535.7 155.0l8 8m0 -8l-8 8 M1534.1 152.2l8 8m0 -8l-8 8 M1534.5 151.6l8 8m0 -8l-8 8 M1521.1 153.7l8 8m0 -8l-8 8 M1536.1 164.4l8 8m0 -8l-8 8 M1515.1 156.0l8 8m0 -8l-8 8 M1517.8 152.2l8 8m0 -8l-8 8 M1517.0 164.5l8 8m0 -8l-8 8 M1534.0 151.6l8 8m0 -8l-8 8 M1518.4 162.6l8 8m0 -8l-8 8 M1522.7 150.6l8 8m0 -8l-8 8 M1651.0 202.6l8 8m0 -8l-8 8 M1660.8 195.8l8 8m0 -8l-8 8 M1659.2 196.3l8 8m0 -8l-8 8 M1663.1 200.8l8 8m0 -8l-8 8 M1659.3 195.6l8 8m0 -8l-8 8 M1660.5 209.8l8 8m0 -8l-8 8 M1655.0 197.5l8 8m0 -8l-8 8 M1657.7 195.3l8 8m0 -8l-8 8 M1652.1 201.6l8 8m0 -8l-8 8 M1653.2 195.8l8 8m0 -8l-8 8 M1662.8 199.4l8 8m0 -8l-8 8 M1654.6 197.5l8 8m0 -8l-8 8 M1581.4 209.8l8 8m0 -8l-8 8 M1561.9 209.9l8 8m0 -8l-8 8 M1555.5 216.0l8 8m0 -8l-8 8 M1556.2 228.0l8 8m0 -8l-8 8 M1583.4 210.1l8 8m0 -8l-8 8 M1576.4 206.1l8 8m0 -8l-8 8 M1552.6 222.0l8 8m0 -8l-8 8 M1575.2 205.6l8 8m0 -8l-8 8 M1551.5 221.4l8 8m0 -8l-8 8 M1576.9 206.9l8 8m0 -8l-8 8 M1584.7 230.0l8 8m0 -8l-8 8 M1572.2 232.7l8 8m0 -8l-8 8 M1485.0 320.9l8 8m0 -8l-8 8 M1486.7 303.6l8 8m0 -8l-8 8 M1492.3 312.5l8 8m0 -8l-8 8 M1477.1 314.4l8 8m0 -8l-8 8 M1490.5 306.4l8 8m0 -8l-8 8 M1484.7 303.3l8 8m0 -8l-8 8 M1496.9 362.9l8 8m0 -8l-8 8 M1497.1 357.2l8 8m0 -8l-8 8 M1483.6 350.7l8 8m0 -8l-8 8 M1484.4 363.0l8 8m0 -8l-8 8 M1496.6 348.6l8 8m0 -8l-8 8 M1481.6 358.5l8 8m0 -8l-8 8 M1493.7 367.9l8 8m0 -8l-8 8 M1490.0 346.7l8 8m0 -8l-8 8" fill="none" stroke="#ff0000" stroke-width="1.100" opacity="0.7"/>
<path d="M1699.0 384.3l8 8m0 -8l-8 8 M1699.4 383.9l8 8m0 -8l-8 8 M1698.0 405.0l8 8m0 -8l-8 8 M1698.0 421.0l8 8m0 -8l-8 8 M1703.6 428.9l8 8m0 -8l-8 8 M1704.0 433.5l8 8m0 -8l-8 8 M1702.8 431.4l8 8m0 -8l-8 8 M1698.4 446.5l8 8m0 -8l-8 8 M1702.6 453.8l8 8m0 -8l-8 8" fill="none" stroke="#ff0000" stroke-width="1.100" opacity="0.8"/>
<path d="M792.8 249.4l8 8m0 -8l-8 8 M900.7 221.7l8 8m0 -8l-8 8 M915.9 207.1l8 8m0 -8l-8 8 M953.7 211.3l8 8m0 -8l-8 8 M958.8 225.0l8 8m0 -8l-8 8 M995.2 194.3l8 8m0 -8l-8 8 M1016.0 203.6l8 8m0 -8l-8 8 M1057.4 234.7l8 8m0 -8l-8 8 M1034.6 256.5l8 8m0 -8l-8 8 M1011.8 241.6l8 8m0 -8l-8 8 M975.4 274.2l8 8m0 -8l-8 8 M1009.7 306.4l8 8m0 -8l-8 8 M986.9 327.1l8 8m0 -8l-8 8 M913.2 350.0l8 8m0 -8l-8 8 M903.8 356.2l8 8m0 -8l-8 8 M882.0 366.6l8 8m0 -8l-8 8 M876.8 373.8l8 8m0 -8l-8 8 M851.6 385.3l8 8m0 -8l-8 8 M824.6 401.9l8 8m0 -8l-8 8 M808.0 415.4l8 8m0 -8l-8 8 M794.5 425.8l8 8m0 -8l-8 8 M767.5 463.1l8 8m0 -8l-8 8 M754.0 478.7l8 8m0 -8l-8 8 M733.3 473.5l8 8m0 -8l-8 8 M726.0 471.4l8 8m0 -8l-8 8 M739.5 459.0l8 8m0 -8l-8 8 M754.0 446.5l8 8m0 -8l-8 8 M763.4 433.0l8 8m0 -8l-8 8 M760.2 421.6l8 8m0 -8l-8 8 M746.7 412.3l8 8m0 -8l-8 8 M704.2 467.3l8 8m0 -8l-8 8 M693.8 473.5l8 8m0 -8l-8 8 M686.6 477.7l8 8m0 -8l-8 8 M676.2 478.3l8 8m0 -8l-8 8 M670.0 470.4l8 8m0 -8l-8 8 M679.3 459.0l8 8m0 -8l-8 8 M739.3 383.9l8 8m0 -8l-8 8 M739.0 362.0l8 8m0 -8l-8 8 M743.7 350.4l8 8m0 -8l-8 8 M737.5 338.7l8 8m0 -8l-8 8 M738.5 330.1l8 8m0 -8l-8 8 M735.1 306.5l8 8m0 -8l-8 8 M751.5 290.4l8 8m0 -8l-8 8 M824.6 414.0l8 8m0 -8l-8 8 M895.2 392.0l8 8m0 -8l-8 8 M924.2 391.1l8 8m0 -8l-8 8 M941.9 397.8l8 8m0 -8l-8 8 M956.4 433.5l8 8m0 -8l-8 8 M950.2 449.2l8 8m0 -8l-8 8 M930.5 451.7l8 8m0 -8l-8 8 M902.4 443.0l8 8m0 -8l-8 8 M893.1 459.4l8 8m0 -8l-8 8 M885.8 476.6l8 8m0 -8l-8 8 M903.5 506.1l8 8m0 -8l-8 8 M910.7 504.0l8 8m0 -8l-8 8 M917.6 515.7l8 8m0 -8l-8 8 M911.8 524.8l8 8m0 -8l-8 8 M906.0 532.3l8 8m0 -8l-8 8 M885.8 541.0l8 8m0 -8l-8 8 M885.8 554.5l8 8m0 -8l-8 8 M857.8 566.9l8 8m0 -8l-8 8 M845.3 566.9l8 8m0 -8l-8 8 M838.1 563.8l8 8m0 -8l-8 8 M815.3 561.7l8 8m0 -8l-8 8 M803.8 550.3l8 8m0 -8l-8 8 M825.6 518.1l8 8m0 -8l-8 8 M835.0 500.5l8 8m0 -8l-8 8 M820.4 481.8l8 8m0 -8l-8 8 M826.7 472.9l8 8m0 -8l-8 8 M813.2 462.1l8 8m0 -8l-8 8 M816.3 433.0l8 8m0 -8l-8 8 M817.3 425.8l8 8m0 -8l-8 8 M706.3 537.9l8 8m0 -8l-8 8 M727.0 548.3l8 8m0 -8l-8 8 M715.6 582.5l8 8m0 -8l-8 8 M702.1 607.4l8 8m0 -8l-8 8 M682.4 600.1l8 8m0 -8l-8 8 M693.8 554.5l8 8m0 -8l-8 8 M949.1 476.6l8 8m0 -8l-8 8 M972.0 479.7l8 8m0 -8l-8 8 M968.9 491.2l8 8m0 -8l-8 8 M947.1 488.0l8 8m0 -8l-8 8 M1041.5 499.3l8 8m0 -8l-8 8 M1142.7 522.6l8 8m0 -8l-8 8 M1202.4 560.5l8 8m0 -8l-8 8 M1234.4 583.7l8 8m0 -8l-8 8 M1211.1 594.7l8 8m0 -8l-8 8 M1184.9 577.9l8 8m0 -8l-8 8 M1132.5 627.4l8 8m0 -8l-8 8 M1121.6 620.1l8 8m0 -8l-8 8 M1147.8 594.7l8 8m0 -8l-8 8 M920.5 325.8l8 8m0 -8l-8 8 M937.1 308.4l8 8m0 -8l-8 8 M947.1 313.4l8 8m0 -8l-8 8 M950.4 316.7l8 8m0 -8l-8 8 M945.4 322.5l8 8m0 -8l-8 8 M936.3 328.3l8 8m0 -8l-8 8 M923.8 328.3l8 8m0 -8l-8 8 M1025.3 288.7l8 8m0 -8l-8 8 M1031.5 288.7l8 8m0 -8l-8 8 M1030.5 300.1l8 8m0 -8l-8 8 M1024.2 298.1l8 8m0 -8l-8 8" fill="none" stroke="#ff0000" stroke-width="1.100" opacity="1"/>
<circle cx="855.5" cy="305.5" r="3.600" fill="#4b8a50" stroke="#fff" stroke-width=".8"/>
<circle cx="884.5" cy="421" r="3.600" fill="#4b8a50" stroke="#fff" stroke-width=".8"/>
<circle cx="1152.5" cy="501" r="3.600" fill="#4b8a50" stroke="#fff" stroke-width=".8"/>
<circle cx="1668.4" cy="534.4" r="3.600" fill="#4b8a50" stroke="#fff" stroke-width=".8"/>
<circle cx="1161.4" cy="647.3" r="3.600" fill="#4b8a50" stroke="#fff" stroke-width=".8"/>
<circle cx="982.6" cy="843.2" r="3.600" fill="#4b8a50" stroke="#fff" stroke-width=".8"/>
<g filter="url(#nf)">
<text x="859.8" y="299.9" font-size="16" font-style="italic" fill="#fff" stroke="#5e5e5e" stroke-width="2" stroke-linejoin="round" paint-order="stroke">Swellendam</text>
<text x="888.8" y="415.2" font-size="13.5" fill="#fff" stroke="#5e5e5e" stroke-width="2" stroke-linejoin="round" paint-order="stroke">Railton</text>
<text x="1155.3" y="496.2" font-size="12" fill="#fff" stroke="#5e5e5e" stroke-width="2" stroke-linejoin="round" paint-order="stroke">Bontebok National Park Entrance Gate</text>
<text x="1673.3" y="529.4" font-size="16" font-style="italic" fill="#fff" stroke="#5e5e5e" stroke-width="2" stroke-linejoin="round" paint-order="stroke">Buffeljagsrivier</text>
<text x="1165.4" y="641.9" font-size="12" fill="#fff" stroke="#5e5e5e" stroke-width="2" stroke-linejoin="round" paint-order="stroke">Bontebok National Park Reception &amp; Shop</text>
<text x="986.7" y="839" font-size="10" fill="#fff" stroke="#5e5e5e" stroke-width="2" stroke-linejoin="round" paint-order="stroke">Lang Elsies Kraal Rest Camp</text>
</g>
</svg></div>
<div id="status">
<span class="s" style="left:955px;color:#0000ee;text-decoration:underline">There is a new plugin available</span>
<div class="sbtn" style="left:1143px;top:8px;width:20px;height:20px"><svg width="18" height="18" viewBox="0 0 18 18"><g transform="translate(2 2)"><path d="M3 1l9 12M8 1c3 0 5 2 5 5s-2 6-5 6-5-2-5-5" fill="none" stroke="#333" stroke-width="1.300"/><circle cx="5" cy="5" r="1.500" fill="#333"/><circle cx="9" cy="9" r="1.300" fill="none" stroke="#333" stroke-width=".8"/></g></svg></div>
<span class="s" style="left:1172px">Coordinate:</span>
<div class="fld" style="left:1249px;top:8px;width:300px;height:20px;line-height:15px">20.4470,-34.0575</div>
<span class="s" style="left:1558px">Scale</span>
<div class="fld" style="left:1604px;top:10px;width:93px;height:18px;border-radius:0 4px 4px 0;text-align:left;padding-left:2px;line-height:13px">1:19951<div style="position:absolute;right:0;top:0;width:15px;height:16px;border-left:1px solid #b5b5b5;background:linear-gradient(#fff,#ececec);border-radius:0 4px 4px 0"></div><div class="dd" style="right:4px;top:7px;border-top-color:#444;border-left-width:3px;border-right-width:3px;border-top-width:4px"></div></div>
<div class="sbtn" style="left:1704px;top:6px;width:20px;height:20px"><svg width="18" height="18" viewBox="0 0 18 18"><g transform="translate(1 1)"><path d="M2 16C9 14 13 9 15 2c1 6-4 13-13 14Z" fill="#777" stroke="#555" stroke-width=".6"/><circle cx="5.500" cy="5" r="3.300" fill="none" stroke="#d3222a" stroke-width="1.300"/><path d="M3.300 2.800l4.400 4.400" stroke="#d3222a" stroke-width="1.300"/></g></svg></div>
<div class="cb" style="left:1730px;top:9px"><svg width="16" height="18" viewBox="0 0 16 18"><path d="M3.2 10.2 L6.6 14.2 L13.8 2.6" fill="none" stroke="#1b2230" stroke-width="2.3" stroke-linecap="round" stroke-linejoin="round"/></svg></div>
<span class="s" style="left:1748px">Render</span>
<span class="s" style="left:1796px;color:#444">EPSG:4326</span>
<div class="sbtn" style="left:1874px;top:7px;width:20px;height:18px"><svg width="18" height="16" viewBox="0 0 18 16"><g transform="translate(2 1)" fill="none" stroke="#7a7a7a" stroke-width="1.100"><circle cx="7" cy="7" r="6.300"/><ellipse cx="7" cy="7" rx="3" ry="6.300"/><path d="M.7 7h12.600M7 .7v12.600"/><circle cx="7" cy="7" r="3.500"/></g></svg></div>
<svg style="position:absolute;left:1906px;top:18px" width="12" height="12"><path d="M2 12L12 2M5.500 12L12 5.500M9 12L12 9" stroke="#9a9a9a" stroke-width="1"/></svg>
</div>
</div></body></html>
